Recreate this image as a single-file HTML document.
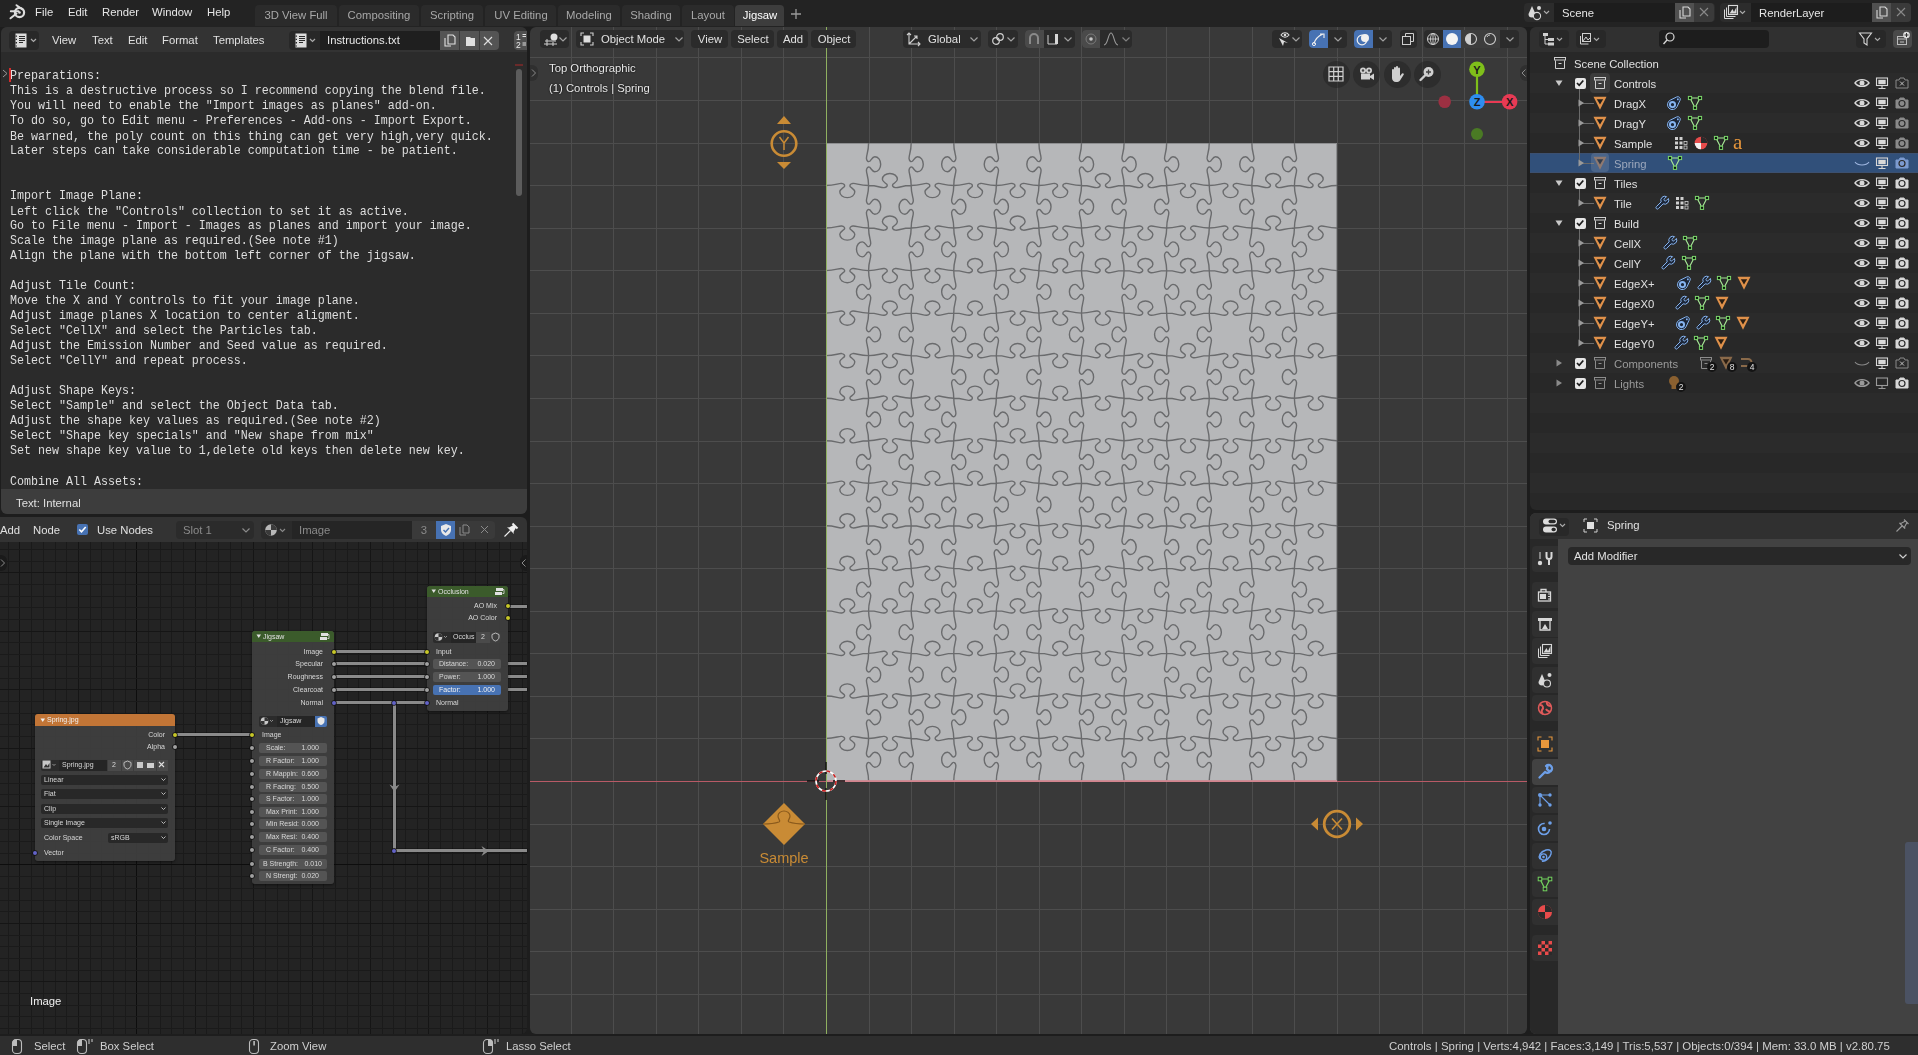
<!DOCTYPE html><html><head><meta charset="utf-8"><style>
html,body{margin:0;padding:0;}
body{width:1918px;height:1055px;position:relative;overflow:hidden;background:#1d1d1d;font-family:"Liberation Sans",sans-serif;}
div{box-sizing:border-box;}
.t{position:absolute;white-space:pre;line-height:16px;height:16px;will-change:transform;}
.m{font-family:"Liberation Mono",monospace;}
svg{position:absolute;overflow:visible;}
</style></head><body>
<div style="position:absolute;left:0px;top:0px;width:1918px;height:27px;background:#232323;"></div>
<svg style="left:9px;top:4px" width="17" height="16" viewBox="0 0 17 16">
<circle cx="10.5" cy="8.5" r="4.6" fill="none" stroke="#dcdcdc" stroke-width="2.2"/>
<circle cx="10.5" cy="8.5" r="1.3" fill="#dcdcdc"/>
<path d="M1.5 14.3 L7.5 9.5 M1.8 7.3 L9.5 7.3 M7.5 1.2 L13.5 5.5" stroke="#dcdcdc" stroke-width="2" stroke-linecap="round"/>
</svg>
<div class="t" style="left:35px;top:4.2px;font-size:11.3px;color:#e6e6e6;">File</div>
<div class="t" style="left:68px;top:4.2px;font-size:11.3px;color:#e6e6e6;">Edit</div>
<div class="t" style="left:102px;top:4.2px;font-size:11.3px;color:#e6e6e6;">Render</div>
<div class="t" style="left:152px;top:4.2px;font-size:11.3px;color:#e6e6e6;">Window</div>
<div class="t" style="left:207px;top:4.2px;font-size:11.3px;color:#e6e6e6;">Help</div>
<div style="position:absolute;left:255px;top:5px;width:82px;height:21px;background:#2b2b2b;border-radius:4px 4px 0 0;"></div>
<div class="t" style="left:196.0px;width:200px;text-align:center;top:6.7px;font-size:11.3px;color:#a8a8a8;">3D View Full</div>
<div style="position:absolute;left:339px;top:5px;width:80px;height:21px;background:#2b2b2b;border-radius:4px 4px 0 0;"></div>
<div class="t" style="left:279.0px;width:200px;text-align:center;top:6.7px;font-size:11.3px;color:#a8a8a8;">Compositing</div>
<div style="position:absolute;left:421px;top:5px;width:62px;height:21px;background:#2b2b2b;border-radius:4px 4px 0 0;"></div>
<div class="t" style="left:352.0px;width:200px;text-align:center;top:6.7px;font-size:11.3px;color:#a8a8a8;">Scripting</div>
<div style="position:absolute;left:485px;top:5px;width:71px;height:21px;background:#2b2b2b;border-radius:4px 4px 0 0;"></div>
<div class="t" style="left:420.5px;width:200px;text-align:center;top:6.7px;font-size:11.3px;color:#a8a8a8;">UV Editing</div>
<div style="position:absolute;left:558px;top:5px;width:62px;height:21px;background:#2b2b2b;border-radius:4px 4px 0 0;"></div>
<div class="t" style="left:489.0px;width:200px;text-align:center;top:6.7px;font-size:11.3px;color:#a8a8a8;">Modeling</div>
<div style="position:absolute;left:622px;top:5px;width:58px;height:21px;background:#2b2b2b;border-radius:4px 4px 0 0;"></div>
<div class="t" style="left:551.0px;width:200px;text-align:center;top:6.7px;font-size:11.3px;color:#a8a8a8;">Shading</div>
<div style="position:absolute;left:682px;top:5px;width:52px;height:21px;background:#2b2b2b;border-radius:4px 4px 0 0;"></div>
<div class="t" style="left:608.0px;width:200px;text-align:center;top:6.7px;font-size:11.3px;color:#a8a8a8;">Layout</div>
<div style="position:absolute;left:735px;top:5px;width:49px;height:21px;background:#3d3d3d;border-radius:4px 4px 0 0;"></div>
<div class="t" style="left:659.5px;width:200px;text-align:center;top:6.7px;font-size:11.3px;color:#ffffff;">Jigsaw</div>
<svg style="left:790px;top:8px" width="12" height="12"><path d="M6 1V11M1 6H11" stroke="#9a9a9a" stroke-width="1.3"/></svg>
<div style="position:absolute;left:1524px;top:3px;width:191px;height:19px;background:#2c2c2c;border-radius:4px;"></div>
<div style="position:absolute;left:1554px;top:3px;width:121px;height:19px;background:#1d1d1d;"></div>
<div style="position:absolute;left:1675px;top:3px;width:19px;height:19px;background:#505050;"></div>
<div style="position:absolute;left:1694px;top:3px;width:20px;height:19px;background:#3a3a3a;border-radius:0 4px 4px 0;"></div>
<div class="t" style="left:1562px;top:5.2px;font-size:11.3px;color:#e6e6e6;">Scene</div>
<div style="position:absolute;left:1720px;top:3px;width:191px;height:19px;background:#2c2c2c;border-radius:4px;"></div>
<div style="position:absolute;left:1751px;top:3px;width:121px;height:19px;background:#1d1d1d;"></div>
<div style="position:absolute;left:1872px;top:3px;width:19px;height:19px;background:#505050;"></div>
<div style="position:absolute;left:1891px;top:3px;width:20px;height:19px;background:#3a3a3a;border-radius:0 4px 4px 0;"></div>
<div class="t" style="left:1759px;top:5.2px;font-size:11.3px;color:#e6e6e6;">RenderLayer</div>
<div style="position:absolute;left:1px;top:27px;width:526px;height:487px;background:#2b2b2b;border-radius:6px;overflow:hidden;"></div>
<div style="position:absolute;left:1px;top:27px;width:526px;height:25px;background:#333333;border-radius:6px 6px 0 0;"></div>
<div style="position:absolute;left:9px;top:31px;width:30px;height:19px;background:#282828;border-radius:4px;"></div>
<svg style="left:14px;top:33px" width="24" height="15"><rect x="1.5" y="0.5" width="11" height="14" fill="#dcdcdc"/><path d="M2.3 2.5V3.8M2.3 5.8V7.1M2.3 9.1V10.4M2.3 12.4V13.5" stroke="#2a2a2a" stroke-width="1.4"/><path d="M5 3.5H11M5 5.5H11M5 7.5H11M5 9.5H9" stroke="#2a2a2a" stroke-width="1" shape-rendering="crispEdges"/><path d="M17 6L19.5 8.5L22 6" fill="none" stroke="#aaa" stroke-width="1.2"/></svg>
<div class="t" style="left:52px;top:31.7px;font-size:11.3px;color:#e0e0e0;">View</div>
<div class="t" style="left:92px;top:31.7px;font-size:11.3px;color:#e0e0e0;">Text</div>
<div class="t" style="left:128px;top:31.7px;font-size:11.3px;color:#e0e0e0;">Edit</div>
<div class="t" style="left:162px;top:31.7px;font-size:11.3px;color:#e0e0e0;">Format</div>
<div class="t" style="left:213px;top:31.7px;font-size:11.3px;color:#e0e0e0;">Templates</div>
<div style="position:absolute;left:289px;top:31px;width:31px;height:19px;background:#282828;border-radius:4px 0 0 4px;"></div>
<svg style="left:294px;top:33px" width="24" height="15"><rect x="1.5" y="0.5" width="11" height="14" fill="#dcdcdc"/><path d="M2.3 2.5V3.8M2.3 5.8V7.1M2.3 9.1V10.4M2.3 12.4V13.5" stroke="#2a2a2a" stroke-width="1.4"/><path d="M5 3.5H11M5 5.5H11M5 7.5H11M5 9.5H9" stroke="#2a2a2a" stroke-width="1" shape-rendering="crispEdges"/><path d="M16 6L18.5 8.5L21 6" fill="none" stroke="#aaa" stroke-width="1.2"/></svg>
<div style="position:absolute;left:320px;top:31px;width:120px;height:19px;background:#1f1f1f;"></div>
<div class="t" style="left:327px;top:31.7px;font-size:11.3px;color:#e8e8e8;">Instructions.txt</div>
<div style="position:absolute;left:440px;top:31px;width:19px;height:19px;background:#545454;"></div>
<div style="position:absolute;left:459px;top:31px;width:20px;height:19px;background:#545454;border-left:1px solid #3a3a3a;"></div>
<div style="position:absolute;left:479px;top:31px;width:20px;height:19px;background:#545454;border-left:1px solid #3a3a3a;border-radius:0 4px 4px 0;"></div>
<svg style="left:442px;top:33px" width="56" height="15"><path d="M3 5V13H9M6 2H11L13 4V11H6Z" fill="none" stroke="#e0e0e0" stroke-width="1.1"/><path d="M24 4H28L29 5H33V13H24Z" fill="#e0e0e0"/><path d="M42 4L50 12M50 4L42 12" stroke="#e0e0e0" stroke-width="1.1"/></svg>
<div style="position:absolute;left:514px;top:31px;width:13px;height:19px;background:#505050;border-radius:4px 0 0 4px;"></div>
<svg style="left:514px;top:31px" width="13" height="19"><text x="2" y="8.5" font-family="Liberation Sans" font-size="8.5" fill="#e8e8e8">1</text><text x="2" y="17" font-family="Liberation Sans" font-size="8.5" fill="#e8e8e8">2</text><path d="M8.5 3.5H12M8.5 5.5H12M8.5 12H12M8.5 14H12" stroke="#e0e0e0" stroke-width="1"/></svg>
<div class="t m" style="left:10px;top:69px;font-size:11.67px;line-height:13.393px;height:auto;color:#dedede;transform:scaleY(1.12);transform-origin:0 0">Preparations:<br>This is a destructive process so I recommend copying the blend file.<br>You will need to enable the &quot;Import images as planes&quot; add-on.<br>To do so, go to Edit menu - Preferences - Add-ons - Import Export.<br>Be warned, the poly count on this thing can get very high,very quick.<br>Later steps can take considerable computation time - be patient.<br><br><br>Import Image Plane:<br>Left click the &quot;Controls&quot; collection to set it as active.<br>Go to File menu - Import - Images as planes and import your image.<br>Scale the image plane as required.(See note #1)<br>Align the plane with the bottom left corner of the jigsaw.<br><br>Adjust Tile Count:<br>Move the X and Y controls to fit your image plane.<br>Adjust image planes X location to center aligment.<br>Select &quot;CellX&quot; and select the Particles tab.<br>Adjust the Emission Number and Seed value as required.<br>Select &quot;CellY&quot; and repeat process.<br><br>Adjust Shape Keys:<br>Select &quot;Sample&quot; and select the Object Data tab.<br>Adjust the shape key values as required.(See note #2)<br>Select &quot;Shape key specials&quot; and &quot;New shape from mix&quot;<br>Set new shape key value to 1,delete old keys then delete new key.<br><br>Combine All Assets:</div>
<div style="position:absolute;left:9px;top:68px;width:2px;height:14px;background:#d22c2c;"></div>
<svg style="left:2px;top:69px" width="6" height="10"><path d="M1 1L5 4.5L1 8" fill="none" stroke="#999" stroke-width="1"/></svg>
<div style="position:absolute;left:516px;top:69px;width:6px;height:127px;background:#5c5c5c;border-radius:3px;"></div>
<div style="position:absolute;left:515px;top:64px;width:8px;height:2px;background:#6a2a2a;"></div>
<div style="position:absolute;left:1px;top:489px;width:526px;height:25px;background:#3d3d3d;border-radius:0 0 6px 6px;"></div>
<div class="t" style="left:16px;top:494.7px;font-size:11.3px;color:#e0e0e0;">Text: Internal</div>
<div style="position:absolute;left:530px;top:27px;width:997px;height:1007px;background:#393939;border-radius:6px;"></div>
<svg style="left:530px;top:27px" width="997" height="1007"><path d="M41.5 0V1007" stroke="#4d4d4d" stroke-width="1"/><path d="M83.5 0V1007" stroke="#4d4d4d" stroke-width="1"/><path d="M126.5 0V1007" stroke="#4d4d4d" stroke-width="1"/><path d="M168.5 0V1007" stroke="#4d4d4d" stroke-width="1"/><path d="M211.5 0V1007" stroke="#4d4d4d" stroke-width="1"/><path d="M253.5 0V1007" stroke="#4d4d4d" stroke-width="1"/><path d="M339.5 0V1007" stroke="#4d4d4d" stroke-width="1"/><path d="M381.5 0V1007" stroke="#4d4d4d" stroke-width="1"/><path d="M424.5 0V1007" stroke="#4d4d4d" stroke-width="1"/><path d="M466.5 0V1007" stroke="#4d4d4d" stroke-width="1"/><path d="M509.5 0V1007" stroke="#4d4d4d" stroke-width="1"/><path d="M551.5 0V1007" stroke="#4d4d4d" stroke-width="1"/><path d="M594.5 0V1007" stroke="#4d4d4d" stroke-width="1"/><path d="M636.5 0V1007" stroke="#4d4d4d" stroke-width="1"/><path d="M679.5 0V1007" stroke="#4d4d4d" stroke-width="1"/><path d="M722.5 0V1007" stroke="#4d4d4d" stroke-width="1"/><path d="M764.5 0V1007" stroke="#4d4d4d" stroke-width="1"/><path d="M807.5 0V1007" stroke="#4d4d4d" stroke-width="1"/><path d="M849.5 0V1007" stroke="#4d4d4d" stroke-width="1"/><path d="M892.5 0V1007" stroke="#4d4d4d" stroke-width="1"/><path d="M934.5 0V1007" stroke="#4d4d4d" stroke-width="1"/><path d="M977.5 0V1007" stroke="#4d4d4d" stroke-width="1"/><path d="M0 30.5H997" stroke="#4d4d4d" stroke-width="1"/><path d="M0 73.5H997" stroke="#4d4d4d" stroke-width="1"/><path d="M0 116.5H997" stroke="#4d4d4d" stroke-width="1"/><path d="M0 158.5H997" stroke="#4d4d4d" stroke-width="1"/><path d="M0 201.5H997" stroke="#4d4d4d" stroke-width="1"/><path d="M0 243.5H997" stroke="#4d4d4d" stroke-width="1"/><path d="M0 286.5H997" stroke="#4d4d4d" stroke-width="1"/><path d="M0 328.5H997" stroke="#4d4d4d" stroke-width="1"/><path d="M0 371.5H997" stroke="#4d4d4d" stroke-width="1"/><path d="M0 414.5H997" stroke="#4d4d4d" stroke-width="1"/><path d="M0 456.5H997" stroke="#4d4d4d" stroke-width="1"/><path d="M0 499.5H997" stroke="#4d4d4d" stroke-width="1"/><path d="M0 541.5H997" stroke="#4d4d4d" stroke-width="1"/><path d="M0 584.5H997" stroke="#4d4d4d" stroke-width="1"/><path d="M0 626.5H997" stroke="#4d4d4d" stroke-width="1"/><path d="M0 669.5H997" stroke="#4d4d4d" stroke-width="1"/><path d="M0 711.5H997" stroke="#4d4d4d" stroke-width="1"/><path d="M0 797.5H997" stroke="#4d4d4d" stroke-width="1"/><path d="M0 839.5H997" stroke="#4d4d4d" stroke-width="1"/><path d="M0 882.5H997" stroke="#4d4d4d" stroke-width="1"/><path d="M0 924.5H997" stroke="#4d4d4d" stroke-width="1"/><path d="M0 967.5H997" stroke="#4d4d4d" stroke-width="1"/></svg>
<div style="position:absolute;left:826px;top:143px;width:511px;height:638px;background:#b6b7b9;box-shadow:inset 0 0 0 1px #8e8f91"></div>
<svg style="left:826px;top:143px" width="511" height="638"><path d="M0.00 42.53C9.29 42.53 12.29 40.03 15.69 40.43C17.79 40.73 19.29 42.03 18.29 43.73C16.29 45.53 13.79 46.53 13.79 48.73C13.79 52.13 17.09 54.63 21.29 54.63C25.49 54.63 28.79 52.13 28.79 48.73C28.79 46.53 26.29 45.53 24.29 43.73C23.29 42.03 24.79 40.73 26.89 40.43C30.29 40.03 33.29 42.53 42.58 42.53M42.58 42.53C51.88 42.53 54.88 45.03 58.27 44.63C60.38 44.33 61.88 43.03 60.88 41.33C58.88 39.53 56.38 38.53 56.38 36.33C56.38 32.93 59.67 30.43 63.88 30.43C68.08 30.43 71.38 32.93 71.38 36.33C71.38 38.53 68.88 39.53 66.88 41.33C65.88 43.03 67.38 44.33 69.47 44.63C72.88 45.03 75.88 42.53 85.17 42.53M85.17 42.53C94.46 42.53 97.46 40.03 100.86 40.43C102.96 40.73 104.46 42.03 103.46 43.73C101.46 45.53 98.96 46.53 98.96 48.73C98.96 52.13 102.26 54.63 106.46 54.63C110.66 54.63 113.96 52.13 113.96 48.73C113.96 46.53 111.46 45.53 109.46 43.73C108.46 42.03 109.96 40.73 112.06 40.43C115.46 40.03 118.46 42.53 127.75 42.53M127.75 42.53C137.04 42.53 140.04 40.03 143.44 40.43C145.54 40.73 147.04 42.03 146.04 43.73C144.04 45.53 141.54 46.53 141.54 48.73C141.54 52.13 144.84 54.63 149.04 54.63C153.24 54.63 156.54 52.13 156.54 48.73C156.54 46.53 154.04 45.53 152.04 43.73C151.04 42.03 152.54 40.73 154.64 40.43C158.04 40.03 161.04 42.53 170.33 42.53M170.33 42.53C179.62 42.53 182.62 40.03 186.03 40.43C188.12 40.73 189.62 42.03 188.62 43.73C186.62 45.53 184.12 46.53 184.12 48.73C184.12 52.13 187.43 54.63 191.62 54.63C195.82 54.63 199.12 52.13 199.12 48.73C199.12 46.53 196.62 45.53 194.62 43.73C193.62 42.03 195.12 40.73 197.22 40.43C200.62 40.03 203.62 42.53 212.92 42.53M212.92 42.53C222.21 42.53 225.21 40.03 228.61 40.43C230.71 40.73 232.21 42.03 231.21 43.73C229.21 45.53 226.71 46.53 226.71 48.73C226.71 52.13 230.01 54.63 234.21 54.63C238.41 54.63 241.71 52.13 241.71 48.73C241.71 46.53 239.21 45.53 237.21 43.73C236.21 42.03 237.71 40.73 239.81 40.43C243.21 40.03 246.21 42.53 255.50 42.53M255.50 42.53C264.79 42.53 267.79 45.03 271.19 44.63C273.29 44.33 274.79 43.03 273.79 41.33C271.79 39.53 269.29 38.53 269.29 36.33C269.29 32.93 272.59 30.43 276.79 30.43C280.99 30.43 284.29 32.93 284.29 36.33C284.29 38.53 281.79 39.53 279.79 41.33C278.79 43.03 280.29 44.33 282.39 44.63C285.79 45.03 288.79 42.53 298.08 42.53M298.08 42.53C307.38 42.53 310.38 45.03 313.78 44.63C315.88 44.33 317.38 43.03 316.38 41.33C314.38 39.53 311.88 38.53 311.88 36.33C311.88 32.93 315.18 30.43 319.38 30.43C323.58 30.43 326.88 32.93 326.88 36.33C326.88 38.53 324.38 39.53 322.38 41.33C321.38 43.03 322.88 44.33 324.98 44.63C328.38 45.03 331.38 42.53 340.67 42.53M340.67 42.53C349.96 42.53 352.96 40.03 356.36 40.43C358.46 40.73 359.96 42.03 358.96 43.73C356.96 45.53 354.46 46.53 354.46 48.73C354.46 52.13 357.76 54.63 361.96 54.63C366.16 54.63 369.46 52.13 369.46 48.73C369.46 46.53 366.96 45.53 364.96 43.73C363.96 42.03 365.46 40.73 367.56 40.43C370.96 40.03 373.96 42.53 383.25 42.53M383.25 42.53C392.54 42.53 395.54 40.03 398.94 40.43C401.04 40.73 402.54 42.03 401.54 43.73C399.54 45.53 397.04 46.53 397.04 48.73C397.04 52.13 400.34 54.63 404.54 54.63C408.74 54.63 412.04 52.13 412.04 48.73C412.04 46.53 409.54 45.53 407.54 43.73C406.54 42.03 408.04 40.73 410.14 40.43C413.54 40.03 416.54 42.53 425.83 42.53M425.83 42.53C435.13 42.53 438.13 45.03 441.53 44.63C443.63 44.33 445.13 43.03 444.13 41.33C442.13 39.53 439.63 38.53 439.63 36.33C439.63 32.93 442.93 30.43 447.13 30.43C451.33 30.43 454.63 32.93 454.63 36.33C454.63 38.53 452.13 39.53 450.13 41.33C449.13 43.03 450.63 44.33 452.73 44.63C456.13 45.03 459.13 42.53 468.42 42.53M468.42 42.53C477.71 42.53 480.71 45.03 484.11 44.63C486.21 44.33 487.71 43.03 486.71 41.33C484.71 39.53 482.21 38.53 482.21 36.33C482.21 32.93 485.51 30.43 489.71 30.43C493.91 30.43 497.21 32.93 497.21 36.33C497.21 38.53 494.71 39.53 492.71 41.33C491.71 43.03 493.21 44.33 495.31 44.63C498.71 45.03 501.71 42.53 511.00 42.53M0.00 85.07C9.29 85.07 12.29 82.57 15.69 82.97C17.79 83.27 19.29 84.57 18.29 86.27C16.29 88.07 13.79 89.07 13.79 91.27C13.79 94.67 17.09 97.17 21.29 97.17C25.49 97.17 28.79 94.67 28.79 91.27C28.79 89.07 26.29 88.07 24.29 86.27C23.29 84.57 24.79 83.27 26.89 82.97C30.29 82.57 33.29 85.07 42.58 85.07M42.58 85.07C51.88 85.07 54.88 87.57 58.27 87.17C60.38 86.87 61.88 85.57 60.88 83.87C58.88 82.07 56.38 81.07 56.38 78.87C56.38 75.47 59.67 72.97 63.88 72.97C68.08 72.97 71.38 75.47 71.38 78.87C71.38 81.07 68.88 82.07 66.88 83.87C65.88 85.57 67.38 86.87 69.47 87.17C72.88 87.57 75.88 85.07 85.17 85.07M85.17 85.07C94.46 85.07 97.46 82.57 100.86 82.97C102.96 83.27 104.46 84.57 103.46 86.27C101.46 88.07 98.96 89.07 98.96 91.27C98.96 94.67 102.26 97.17 106.46 97.17C110.66 97.17 113.96 94.67 113.96 91.27C113.96 89.07 111.46 88.07 109.46 86.27C108.46 84.57 109.96 83.27 112.06 82.97C115.46 82.57 118.46 85.07 127.75 85.07M127.75 85.07C137.04 85.07 140.04 82.57 143.44 82.97C145.54 83.27 147.04 84.57 146.04 86.27C144.04 88.07 141.54 89.07 141.54 91.27C141.54 94.67 144.84 97.17 149.04 97.17C153.24 97.17 156.54 94.67 156.54 91.27C156.54 89.07 154.04 88.07 152.04 86.27C151.04 84.57 152.54 83.27 154.64 82.97C158.04 82.57 161.04 85.07 170.33 85.07M170.33 85.07C179.62 85.07 182.62 87.57 186.03 87.17C188.12 86.87 189.62 85.57 188.62 83.87C186.62 82.07 184.12 81.07 184.12 78.87C184.12 75.47 187.43 72.97 191.62 72.97C195.82 72.97 199.12 75.47 199.12 78.87C199.12 81.07 196.62 82.07 194.62 83.87C193.62 85.57 195.12 86.87 197.22 87.17C200.62 87.57 203.62 85.07 212.92 85.07M212.92 85.07C222.21 85.07 225.21 82.57 228.61 82.97C230.71 83.27 232.21 84.57 231.21 86.27C229.21 88.07 226.71 89.07 226.71 91.27C226.71 94.67 230.01 97.17 234.21 97.17C238.41 97.17 241.71 94.67 241.71 91.27C241.71 89.07 239.21 88.07 237.21 86.27C236.21 84.57 237.71 83.27 239.81 82.97C243.21 82.57 246.21 85.07 255.50 85.07M255.50 85.07C264.79 85.07 267.79 82.57 271.19 82.97C273.29 83.27 274.79 84.57 273.79 86.27C271.79 88.07 269.29 89.07 269.29 91.27C269.29 94.67 272.59 97.17 276.79 97.17C280.99 97.17 284.29 94.67 284.29 91.27C284.29 89.07 281.79 88.07 279.79 86.27C278.79 84.57 280.29 83.27 282.39 82.97C285.79 82.57 288.79 85.07 298.08 85.07M298.08 85.07C307.38 85.07 310.38 82.57 313.78 82.97C315.88 83.27 317.38 84.57 316.38 86.27C314.38 88.07 311.88 89.07 311.88 91.27C311.88 94.67 315.18 97.17 319.38 97.17C323.58 97.17 326.88 94.67 326.88 91.27C326.88 89.07 324.38 88.07 322.38 86.27C321.38 84.57 322.88 83.27 324.98 82.97C328.38 82.57 331.38 85.07 340.67 85.07M340.67 85.07C349.96 85.07 352.96 82.57 356.36 82.97C358.46 83.27 359.96 84.57 358.96 86.27C356.96 88.07 354.46 89.07 354.46 91.27C354.46 94.67 357.76 97.17 361.96 97.17C366.16 97.17 369.46 94.67 369.46 91.27C369.46 89.07 366.96 88.07 364.96 86.27C363.96 84.57 365.46 83.27 367.56 82.97C370.96 82.57 373.96 85.07 383.25 85.07M383.25 85.07C392.54 85.07 395.54 82.57 398.94 82.97C401.04 83.27 402.54 84.57 401.54 86.27C399.54 88.07 397.04 89.07 397.04 91.27C397.04 94.67 400.34 97.17 404.54 97.17C408.74 97.17 412.04 94.67 412.04 91.27C412.04 89.07 409.54 88.07 407.54 86.27C406.54 84.57 408.04 83.27 410.14 82.97C413.54 82.57 416.54 85.07 425.83 85.07M425.83 85.07C435.13 85.07 438.13 87.57 441.53 87.17C443.63 86.87 445.13 85.57 444.13 83.87C442.13 82.07 439.63 81.07 439.63 78.87C439.63 75.47 442.93 72.97 447.13 72.97C451.33 72.97 454.63 75.47 454.63 78.87C454.63 81.07 452.13 82.07 450.13 83.87C449.13 85.57 450.63 86.87 452.73 87.17C456.13 87.57 459.13 85.07 468.42 85.07M468.42 85.07C477.71 85.07 480.71 82.57 484.11 82.97C486.21 83.27 487.71 84.57 486.71 86.27C484.71 88.07 482.21 89.07 482.21 91.27C482.21 94.67 485.51 97.17 489.71 97.17C493.91 97.17 497.21 94.67 497.21 91.27C497.21 89.07 494.71 88.07 492.71 86.27C491.71 84.57 493.21 83.27 495.31 82.97C498.71 82.57 501.71 85.07 511.00 85.07M0.00 127.60C9.29 127.60 12.29 125.10 15.69 125.50C17.79 125.80 19.29 127.10 18.29 128.80C16.29 130.60 13.79 131.60 13.79 133.80C13.79 137.20 17.09 139.70 21.29 139.70C25.49 139.70 28.79 137.20 28.79 133.80C28.79 131.60 26.29 130.60 24.29 128.80C23.29 127.10 24.79 125.80 26.89 125.50C30.29 125.10 33.29 127.60 42.58 127.60M42.58 127.60C51.88 127.60 54.88 125.10 58.27 125.50C60.38 125.80 61.88 127.10 60.88 128.80C58.88 130.60 56.38 131.60 56.38 133.80C56.38 137.20 59.67 139.70 63.88 139.70C68.08 139.70 71.38 137.20 71.38 133.80C71.38 131.60 68.88 130.60 66.88 128.80C65.88 127.10 67.38 125.80 69.47 125.50C72.88 125.10 75.88 127.60 85.17 127.60M85.17 127.60C94.46 127.60 97.46 125.10 100.86 125.50C102.96 125.80 104.46 127.10 103.46 128.80C101.46 130.60 98.96 131.60 98.96 133.80C98.96 137.20 102.26 139.70 106.46 139.70C110.66 139.70 113.96 137.20 113.96 133.80C113.96 131.60 111.46 130.60 109.46 128.80C108.46 127.10 109.96 125.80 112.06 125.50C115.46 125.10 118.46 127.60 127.75 127.60M127.75 127.60C137.04 127.60 140.04 130.10 143.44 129.70C145.54 129.40 147.04 128.10 146.04 126.40C144.04 124.60 141.54 123.60 141.54 121.40C141.54 118.00 144.84 115.50 149.04 115.50C153.24 115.50 156.54 118.00 156.54 121.40C156.54 123.60 154.04 124.60 152.04 126.40C151.04 128.10 152.54 129.40 154.64 129.70C158.04 130.10 161.04 127.60 170.33 127.60M170.33 127.60C179.62 127.60 182.62 125.10 186.03 125.50C188.12 125.80 189.62 127.10 188.62 128.80C186.62 130.60 184.12 131.60 184.12 133.80C184.12 137.20 187.43 139.70 191.62 139.70C195.82 139.70 199.12 137.20 199.12 133.80C199.12 131.60 196.62 130.60 194.62 128.80C193.62 127.10 195.12 125.80 197.22 125.50C200.62 125.10 203.62 127.60 212.92 127.60M212.92 127.60C222.21 127.60 225.21 130.10 228.61 129.70C230.71 129.40 232.21 128.10 231.21 126.40C229.21 124.60 226.71 123.60 226.71 121.40C226.71 118.00 230.01 115.50 234.21 115.50C238.41 115.50 241.71 118.00 241.71 121.40C241.71 123.60 239.21 124.60 237.21 126.40C236.21 128.10 237.71 129.40 239.81 129.70C243.21 130.10 246.21 127.60 255.50 127.60M255.50 127.60C264.79 127.60 267.79 130.10 271.19 129.70C273.29 129.40 274.79 128.10 273.79 126.40C271.79 124.60 269.29 123.60 269.29 121.40C269.29 118.00 272.59 115.50 276.79 115.50C280.99 115.50 284.29 118.00 284.29 121.40C284.29 123.60 281.79 124.60 279.79 126.40C278.79 128.10 280.29 129.40 282.39 129.70C285.79 130.10 288.79 127.60 298.08 127.60M298.08 127.60C307.38 127.60 310.38 130.10 313.78 129.70C315.88 129.40 317.38 128.10 316.38 126.40C314.38 124.60 311.88 123.60 311.88 121.40C311.88 118.00 315.18 115.50 319.38 115.50C323.58 115.50 326.88 118.00 326.88 121.40C326.88 123.60 324.38 124.60 322.38 126.40C321.38 128.10 322.88 129.40 324.98 129.70C328.38 130.10 331.38 127.60 340.67 127.60M340.67 127.60C349.96 127.60 352.96 130.10 356.36 129.70C358.46 129.40 359.96 128.10 358.96 126.40C356.96 124.60 354.46 123.60 354.46 121.40C354.46 118.00 357.76 115.50 361.96 115.50C366.16 115.50 369.46 118.00 369.46 121.40C369.46 123.60 366.96 124.60 364.96 126.40C363.96 128.10 365.46 129.40 367.56 129.70C370.96 130.10 373.96 127.60 383.25 127.60M383.25 127.60C392.54 127.60 395.54 130.10 398.94 129.70C401.04 129.40 402.54 128.10 401.54 126.40C399.54 124.60 397.04 123.60 397.04 121.40C397.04 118.00 400.34 115.50 404.54 115.50C408.74 115.50 412.04 118.00 412.04 121.40C412.04 123.60 409.54 124.60 407.54 126.40C406.54 128.10 408.04 129.40 410.14 129.70C413.54 130.10 416.54 127.60 425.83 127.60M425.83 127.60C435.13 127.60 438.13 130.10 441.53 129.70C443.63 129.40 445.13 128.10 444.13 126.40C442.13 124.60 439.63 123.60 439.63 121.40C439.63 118.00 442.93 115.50 447.13 115.50C451.33 115.50 454.63 118.00 454.63 121.40C454.63 123.60 452.13 124.60 450.13 126.40C449.13 128.10 450.63 129.40 452.73 129.70C456.13 130.10 459.13 127.60 468.42 127.60M468.42 127.60C477.71 127.60 480.71 125.10 484.11 125.50C486.21 125.80 487.71 127.10 486.71 128.80C484.71 130.60 482.21 131.60 482.21 133.80C482.21 137.20 485.51 139.70 489.71 139.70C493.91 139.70 497.21 137.20 497.21 133.80C497.21 131.60 494.71 130.60 492.71 128.80C491.71 127.10 493.21 125.80 495.31 125.50C498.71 125.10 501.71 127.60 511.00 127.60M0.00 170.13C9.29 170.13 12.29 167.63 15.69 168.03C17.79 168.33 19.29 169.63 18.29 171.33C16.29 173.13 13.79 174.13 13.79 176.33C13.79 179.73 17.09 182.23 21.29 182.23C25.49 182.23 28.79 179.73 28.79 176.33C28.79 174.13 26.29 173.13 24.29 171.33C23.29 169.63 24.79 168.33 26.89 168.03C30.29 167.63 33.29 170.13 42.58 170.13M42.58 170.13C51.88 170.13 54.88 172.63 58.27 172.23C60.38 171.93 61.88 170.63 60.88 168.93C58.88 167.13 56.38 166.13 56.38 163.93C56.38 160.53 59.67 158.03 63.88 158.03C68.08 158.03 71.38 160.53 71.38 163.93C71.38 166.13 68.88 167.13 66.88 168.93C65.88 170.63 67.38 171.93 69.47 172.23C72.88 172.63 75.88 170.13 85.17 170.13M85.17 170.13C94.46 170.13 97.46 172.63 100.86 172.23C102.96 171.93 104.46 170.63 103.46 168.93C101.46 167.13 98.96 166.13 98.96 163.93C98.96 160.53 102.26 158.03 106.46 158.03C110.66 158.03 113.96 160.53 113.96 163.93C113.96 166.13 111.46 167.13 109.46 168.93C108.46 170.63 109.96 171.93 112.06 172.23C115.46 172.63 118.46 170.13 127.75 170.13M127.75 170.13C137.04 170.13 140.04 172.63 143.44 172.23C145.54 171.93 147.04 170.63 146.04 168.93C144.04 167.13 141.54 166.13 141.54 163.93C141.54 160.53 144.84 158.03 149.04 158.03C153.24 158.03 156.54 160.53 156.54 163.93C156.54 166.13 154.04 167.13 152.04 168.93C151.04 170.63 152.54 171.93 154.64 172.23C158.04 172.63 161.04 170.13 170.33 170.13M170.33 170.13C179.62 170.13 182.62 167.63 186.03 168.03C188.12 168.33 189.62 169.63 188.62 171.33C186.62 173.13 184.12 174.13 184.12 176.33C184.12 179.73 187.43 182.23 191.62 182.23C195.82 182.23 199.12 179.73 199.12 176.33C199.12 174.13 196.62 173.13 194.62 171.33C193.62 169.63 195.12 168.33 197.22 168.03C200.62 167.63 203.62 170.13 212.92 170.13M212.92 170.13C222.21 170.13 225.21 167.63 228.61 168.03C230.71 168.33 232.21 169.63 231.21 171.33C229.21 173.13 226.71 174.13 226.71 176.33C226.71 179.73 230.01 182.23 234.21 182.23C238.41 182.23 241.71 179.73 241.71 176.33C241.71 174.13 239.21 173.13 237.21 171.33C236.21 169.63 237.71 168.33 239.81 168.03C243.21 167.63 246.21 170.13 255.50 170.13M255.50 170.13C264.79 170.13 267.79 167.63 271.19 168.03C273.29 168.33 274.79 169.63 273.79 171.33C271.79 173.13 269.29 174.13 269.29 176.33C269.29 179.73 272.59 182.23 276.79 182.23C280.99 182.23 284.29 179.73 284.29 176.33C284.29 174.13 281.79 173.13 279.79 171.33C278.79 169.63 280.29 168.33 282.39 168.03C285.79 167.63 288.79 170.13 298.08 170.13M298.08 170.13C307.38 170.13 310.38 172.63 313.78 172.23C315.88 171.93 317.38 170.63 316.38 168.93C314.38 167.13 311.88 166.13 311.88 163.93C311.88 160.53 315.18 158.03 319.38 158.03C323.58 158.03 326.88 160.53 326.88 163.93C326.88 166.13 324.38 167.13 322.38 168.93C321.38 170.63 322.88 171.93 324.98 172.23C328.38 172.63 331.38 170.13 340.67 170.13M340.67 170.13C349.96 170.13 352.96 172.63 356.36 172.23C358.46 171.93 359.96 170.63 358.96 168.93C356.96 167.13 354.46 166.13 354.46 163.93C354.46 160.53 357.76 158.03 361.96 158.03C366.16 158.03 369.46 160.53 369.46 163.93C369.46 166.13 366.96 167.13 364.96 168.93C363.96 170.63 365.46 171.93 367.56 172.23C370.96 172.63 373.96 170.13 383.25 170.13M383.25 170.13C392.54 170.13 395.54 172.63 398.94 172.23C401.04 171.93 402.54 170.63 401.54 168.93C399.54 167.13 397.04 166.13 397.04 163.93C397.04 160.53 400.34 158.03 404.54 158.03C408.74 158.03 412.04 160.53 412.04 163.93C412.04 166.13 409.54 167.13 407.54 168.93C406.54 170.63 408.04 171.93 410.14 172.23C413.54 172.63 416.54 170.13 425.83 170.13M425.83 170.13C435.13 170.13 438.13 172.63 441.53 172.23C443.63 171.93 445.13 170.63 444.13 168.93C442.13 167.13 439.63 166.13 439.63 163.93C439.63 160.53 442.93 158.03 447.13 158.03C451.33 158.03 454.63 160.53 454.63 163.93C454.63 166.13 452.13 167.13 450.13 168.93C449.13 170.63 450.63 171.93 452.73 172.23C456.13 172.63 459.13 170.13 468.42 170.13M468.42 170.13C477.71 170.13 480.71 172.63 484.11 172.23C486.21 171.93 487.71 170.63 486.71 168.93C484.71 167.13 482.21 166.13 482.21 163.93C482.21 160.53 485.51 158.03 489.71 158.03C493.91 158.03 497.21 160.53 497.21 163.93C497.21 166.13 494.71 167.13 492.71 168.93C491.71 170.63 493.21 171.93 495.31 172.23C498.71 172.63 501.71 170.13 511.00 170.13M0.00 212.67C9.29 212.67 12.29 210.17 15.69 210.57C17.79 210.87 19.29 212.17 18.29 213.87C16.29 215.67 13.79 216.67 13.79 218.87C13.79 222.27 17.09 224.77 21.29 224.77C25.49 224.77 28.79 222.27 28.79 218.87C28.79 216.67 26.29 215.67 24.29 213.87C23.29 212.17 24.79 210.87 26.89 210.57C30.29 210.17 33.29 212.67 42.58 212.67M42.58 212.67C51.88 212.67 54.88 210.17 58.27 210.57C60.38 210.87 61.88 212.17 60.88 213.87C58.88 215.67 56.38 216.67 56.38 218.87C56.38 222.27 59.67 224.77 63.88 224.77C68.08 224.77 71.38 222.27 71.38 218.87C71.38 216.67 68.88 215.67 66.88 213.87C65.88 212.17 67.38 210.87 69.47 210.57C72.88 210.17 75.88 212.67 85.17 212.67M85.17 212.67C94.46 212.67 97.46 215.17 100.86 214.77C102.96 214.47 104.46 213.17 103.46 211.47C101.46 209.67 98.96 208.67 98.96 206.47C98.96 203.07 102.26 200.57 106.46 200.57C110.66 200.57 113.96 203.07 113.96 206.47C113.96 208.67 111.46 209.67 109.46 211.47C108.46 213.17 109.96 214.47 112.06 214.77C115.46 215.17 118.46 212.67 127.75 212.67M127.75 212.67C137.04 212.67 140.04 215.17 143.44 214.77C145.54 214.47 147.04 213.17 146.04 211.47C144.04 209.67 141.54 208.67 141.54 206.47C141.54 203.07 144.84 200.57 149.04 200.57C153.24 200.57 156.54 203.07 156.54 206.47C156.54 208.67 154.04 209.67 152.04 211.47C151.04 213.17 152.54 214.47 154.64 214.77C158.04 215.17 161.04 212.67 170.33 212.67M170.33 212.67C179.62 212.67 182.62 215.17 186.03 214.77C188.12 214.47 189.62 213.17 188.62 211.47C186.62 209.67 184.12 208.67 184.12 206.47C184.12 203.07 187.43 200.57 191.62 200.57C195.82 200.57 199.12 203.07 199.12 206.47C199.12 208.67 196.62 209.67 194.62 211.47C193.62 213.17 195.12 214.47 197.22 214.77C200.62 215.17 203.62 212.67 212.92 212.67M212.92 212.67C222.21 212.67 225.21 210.17 228.61 210.57C230.71 210.87 232.21 212.17 231.21 213.87C229.21 215.67 226.71 216.67 226.71 218.87C226.71 222.27 230.01 224.77 234.21 224.77C238.41 224.77 241.71 222.27 241.71 218.87C241.71 216.67 239.21 215.67 237.21 213.87C236.21 212.17 237.71 210.87 239.81 210.57C243.21 210.17 246.21 212.67 255.50 212.67M255.50 212.67C264.79 212.67 267.79 215.17 271.19 214.77C273.29 214.47 274.79 213.17 273.79 211.47C271.79 209.67 269.29 208.67 269.29 206.47C269.29 203.07 272.59 200.57 276.79 200.57C280.99 200.57 284.29 203.07 284.29 206.47C284.29 208.67 281.79 209.67 279.79 211.47C278.79 213.17 280.29 214.47 282.39 214.77C285.79 215.17 288.79 212.67 298.08 212.67M298.08 212.67C307.38 212.67 310.38 210.17 313.78 210.57C315.88 210.87 317.38 212.17 316.38 213.87C314.38 215.67 311.88 216.67 311.88 218.87C311.88 222.27 315.18 224.77 319.38 224.77C323.58 224.77 326.88 222.27 326.88 218.87C326.88 216.67 324.38 215.67 322.38 213.87C321.38 212.17 322.88 210.87 324.98 210.57C328.38 210.17 331.38 212.67 340.67 212.67M340.67 212.67C349.96 212.67 352.96 215.17 356.36 214.77C358.46 214.47 359.96 213.17 358.96 211.47C356.96 209.67 354.46 208.67 354.46 206.47C354.46 203.07 357.76 200.57 361.96 200.57C366.16 200.57 369.46 203.07 369.46 206.47C369.46 208.67 366.96 209.67 364.96 211.47C363.96 213.17 365.46 214.47 367.56 214.77C370.96 215.17 373.96 212.67 383.25 212.67M383.25 212.67C392.54 212.67 395.54 210.17 398.94 210.57C401.04 210.87 402.54 212.17 401.54 213.87C399.54 215.67 397.04 216.67 397.04 218.87C397.04 222.27 400.34 224.77 404.54 224.77C408.74 224.77 412.04 222.27 412.04 218.87C412.04 216.67 409.54 215.67 407.54 213.87C406.54 212.17 408.04 210.87 410.14 210.57C413.54 210.17 416.54 212.67 425.83 212.67M425.83 212.67C435.13 212.67 438.13 215.17 441.53 214.77C443.63 214.47 445.13 213.17 444.13 211.47C442.13 209.67 439.63 208.67 439.63 206.47C439.63 203.07 442.93 200.57 447.13 200.57C451.33 200.57 454.63 203.07 454.63 206.47C454.63 208.67 452.13 209.67 450.13 211.47C449.13 213.17 450.63 214.47 452.73 214.77C456.13 215.17 459.13 212.67 468.42 212.67M468.42 212.67C477.71 212.67 480.71 215.17 484.11 214.77C486.21 214.47 487.71 213.17 486.71 211.47C484.71 209.67 482.21 208.67 482.21 206.47C482.21 203.07 485.51 200.57 489.71 200.57C493.91 200.57 497.21 203.07 497.21 206.47C497.21 208.67 494.71 209.67 492.71 211.47C491.71 213.17 493.21 214.47 495.31 214.77C498.71 215.17 501.71 212.67 511.00 212.67M0.00 255.20C9.29 255.20 12.29 257.70 15.69 257.30C17.79 257.00 19.29 255.70 18.29 254.00C16.29 252.20 13.79 251.20 13.79 249.00C13.79 245.60 17.09 243.10 21.29 243.10C25.49 243.10 28.79 245.60 28.79 249.00C28.79 251.20 26.29 252.20 24.29 254.00C23.29 255.70 24.79 257.00 26.89 257.30C30.29 257.70 33.29 255.20 42.58 255.20M42.58 255.20C51.88 255.20 54.88 252.70 58.27 253.10C60.38 253.40 61.88 254.70 60.88 256.40C58.88 258.20 56.38 259.20 56.38 261.40C56.38 264.80 59.67 267.30 63.88 267.30C68.08 267.30 71.38 264.80 71.38 261.40C71.38 259.20 68.88 258.20 66.88 256.40C65.88 254.70 67.38 253.40 69.47 253.10C72.88 252.70 75.88 255.20 85.17 255.20M85.17 255.20C94.46 255.20 97.46 252.70 100.86 253.10C102.96 253.40 104.46 254.70 103.46 256.40C101.46 258.20 98.96 259.20 98.96 261.40C98.96 264.80 102.26 267.30 106.46 267.30C110.66 267.30 113.96 264.80 113.96 261.40C113.96 259.20 111.46 258.20 109.46 256.40C108.46 254.70 109.96 253.40 112.06 253.10C115.46 252.70 118.46 255.20 127.75 255.20M127.75 255.20C137.04 255.20 140.04 257.70 143.44 257.30C145.54 257.00 147.04 255.70 146.04 254.00C144.04 252.20 141.54 251.20 141.54 249.00C141.54 245.60 144.84 243.10 149.04 243.10C153.24 243.10 156.54 245.60 156.54 249.00C156.54 251.20 154.04 252.20 152.04 254.00C151.04 255.70 152.54 257.00 154.64 257.30C158.04 257.70 161.04 255.20 170.33 255.20M170.33 255.20C179.62 255.20 182.62 252.70 186.03 253.10C188.12 253.40 189.62 254.70 188.62 256.40C186.62 258.20 184.12 259.20 184.12 261.40C184.12 264.80 187.43 267.30 191.62 267.30C195.82 267.30 199.12 264.80 199.12 261.40C199.12 259.20 196.62 258.20 194.62 256.40C193.62 254.70 195.12 253.40 197.22 253.10C200.62 252.70 203.62 255.20 212.92 255.20M212.92 255.20C222.21 255.20 225.21 257.70 228.61 257.30C230.71 257.00 232.21 255.70 231.21 254.00C229.21 252.20 226.71 251.20 226.71 249.00C226.71 245.60 230.01 243.10 234.21 243.10C238.41 243.10 241.71 245.60 241.71 249.00C241.71 251.20 239.21 252.20 237.21 254.00C236.21 255.70 237.71 257.00 239.81 257.30C243.21 257.70 246.21 255.20 255.50 255.20M255.50 255.20C264.79 255.20 267.79 252.70 271.19 253.10C273.29 253.40 274.79 254.70 273.79 256.40C271.79 258.20 269.29 259.20 269.29 261.40C269.29 264.80 272.59 267.30 276.79 267.30C280.99 267.30 284.29 264.80 284.29 261.40C284.29 259.20 281.79 258.20 279.79 256.40C278.79 254.70 280.29 253.40 282.39 253.10C285.79 252.70 288.79 255.20 298.08 255.20M298.08 255.20C307.38 255.20 310.38 257.70 313.78 257.30C315.88 257.00 317.38 255.70 316.38 254.00C314.38 252.20 311.88 251.20 311.88 249.00C311.88 245.60 315.18 243.10 319.38 243.10C323.58 243.10 326.88 245.60 326.88 249.00C326.88 251.20 324.38 252.20 322.38 254.00C321.38 255.70 322.88 257.00 324.98 257.30C328.38 257.70 331.38 255.20 340.67 255.20M340.67 255.20C349.96 255.20 352.96 257.70 356.36 257.30C358.46 257.00 359.96 255.70 358.96 254.00C356.96 252.20 354.46 251.20 354.46 249.00C354.46 245.60 357.76 243.10 361.96 243.10C366.16 243.10 369.46 245.60 369.46 249.00C369.46 251.20 366.96 252.20 364.96 254.00C363.96 255.70 365.46 257.00 367.56 257.30C370.96 257.70 373.96 255.20 383.25 255.20M383.25 255.20C392.54 255.20 395.54 257.70 398.94 257.30C401.04 257.00 402.54 255.70 401.54 254.00C399.54 252.20 397.04 251.20 397.04 249.00C397.04 245.60 400.34 243.10 404.54 243.10C408.74 243.10 412.04 245.60 412.04 249.00C412.04 251.20 409.54 252.20 407.54 254.00C406.54 255.70 408.04 257.00 410.14 257.30C413.54 257.70 416.54 255.20 425.83 255.20M425.83 255.20C435.13 255.20 438.13 252.70 441.53 253.10C443.63 253.40 445.13 254.70 444.13 256.40C442.13 258.20 439.63 259.20 439.63 261.40C439.63 264.80 442.93 267.30 447.13 267.30C451.33 267.30 454.63 264.80 454.63 261.40C454.63 259.20 452.13 258.20 450.13 256.40C449.13 254.70 450.63 253.40 452.73 253.10C456.13 252.70 459.13 255.20 468.42 255.20M468.42 255.20C477.71 255.20 480.71 252.70 484.11 253.10C486.21 253.40 487.71 254.70 486.71 256.40C484.71 258.20 482.21 259.20 482.21 261.40C482.21 264.80 485.51 267.30 489.71 267.30C493.91 267.30 497.21 264.80 497.21 261.40C497.21 259.20 494.71 258.20 492.71 256.40C491.71 254.70 493.21 253.40 495.31 253.10C498.71 252.70 501.71 255.20 511.00 255.20M0.00 297.73C9.29 297.73 12.29 300.23 15.69 299.83C17.79 299.53 19.29 298.23 18.29 296.53C16.29 294.73 13.79 293.73 13.79 291.53C13.79 288.13 17.09 285.63 21.29 285.63C25.49 285.63 28.79 288.13 28.79 291.53C28.79 293.73 26.29 294.73 24.29 296.53C23.29 298.23 24.79 299.53 26.89 299.83C30.29 300.23 33.29 297.73 42.58 297.73M42.58 297.73C51.88 297.73 54.88 295.23 58.27 295.63C60.38 295.93 61.88 297.23 60.88 298.93C58.88 300.73 56.38 301.73 56.38 303.93C56.38 307.33 59.67 309.83 63.88 309.83C68.08 309.83 71.38 307.33 71.38 303.93C71.38 301.73 68.88 300.73 66.88 298.93C65.88 297.23 67.38 295.93 69.47 295.63C72.88 295.23 75.88 297.73 85.17 297.73M85.17 297.73C94.46 297.73 97.46 300.23 100.86 299.83C102.96 299.53 104.46 298.23 103.46 296.53C101.46 294.73 98.96 293.73 98.96 291.53C98.96 288.13 102.26 285.63 106.46 285.63C110.66 285.63 113.96 288.13 113.96 291.53C113.96 293.73 111.46 294.73 109.46 296.53C108.46 298.23 109.96 299.53 112.06 299.83C115.46 300.23 118.46 297.73 127.75 297.73M127.75 297.73C137.04 297.73 140.04 295.23 143.44 295.63C145.54 295.93 147.04 297.23 146.04 298.93C144.04 300.73 141.54 301.73 141.54 303.93C141.54 307.33 144.84 309.83 149.04 309.83C153.24 309.83 156.54 307.33 156.54 303.93C156.54 301.73 154.04 300.73 152.04 298.93C151.04 297.23 152.54 295.93 154.64 295.63C158.04 295.23 161.04 297.73 170.33 297.73M170.33 297.73C179.62 297.73 182.62 300.23 186.03 299.83C188.12 299.53 189.62 298.23 188.62 296.53C186.62 294.73 184.12 293.73 184.12 291.53C184.12 288.13 187.43 285.63 191.62 285.63C195.82 285.63 199.12 288.13 199.12 291.53C199.12 293.73 196.62 294.73 194.62 296.53C193.62 298.23 195.12 299.53 197.22 299.83C200.62 300.23 203.62 297.73 212.92 297.73M212.92 297.73C222.21 297.73 225.21 300.23 228.61 299.83C230.71 299.53 232.21 298.23 231.21 296.53C229.21 294.73 226.71 293.73 226.71 291.53C226.71 288.13 230.01 285.63 234.21 285.63C238.41 285.63 241.71 288.13 241.71 291.53C241.71 293.73 239.21 294.73 237.21 296.53C236.21 298.23 237.71 299.53 239.81 299.83C243.21 300.23 246.21 297.73 255.50 297.73M255.50 297.73C264.79 297.73 267.79 295.23 271.19 295.63C273.29 295.93 274.79 297.23 273.79 298.93C271.79 300.73 269.29 301.73 269.29 303.93C269.29 307.33 272.59 309.83 276.79 309.83C280.99 309.83 284.29 307.33 284.29 303.93C284.29 301.73 281.79 300.73 279.79 298.93C278.79 297.23 280.29 295.93 282.39 295.63C285.79 295.23 288.79 297.73 298.08 297.73M298.08 297.73C307.38 297.73 310.38 295.23 313.78 295.63C315.88 295.93 317.38 297.23 316.38 298.93C314.38 300.73 311.88 301.73 311.88 303.93C311.88 307.33 315.18 309.83 319.38 309.83C323.58 309.83 326.88 307.33 326.88 303.93C326.88 301.73 324.38 300.73 322.38 298.93C321.38 297.23 322.88 295.93 324.98 295.63C328.38 295.23 331.38 297.73 340.67 297.73M340.67 297.73C349.96 297.73 352.96 295.23 356.36 295.63C358.46 295.93 359.96 297.23 358.96 298.93C356.96 300.73 354.46 301.73 354.46 303.93C354.46 307.33 357.76 309.83 361.96 309.83C366.16 309.83 369.46 307.33 369.46 303.93C369.46 301.73 366.96 300.73 364.96 298.93C363.96 297.23 365.46 295.93 367.56 295.63C370.96 295.23 373.96 297.73 383.25 297.73M383.25 297.73C392.54 297.73 395.54 295.23 398.94 295.63C401.04 295.93 402.54 297.23 401.54 298.93C399.54 300.73 397.04 301.73 397.04 303.93C397.04 307.33 400.34 309.83 404.54 309.83C408.74 309.83 412.04 307.33 412.04 303.93C412.04 301.73 409.54 300.73 407.54 298.93C406.54 297.23 408.04 295.93 410.14 295.63C413.54 295.23 416.54 297.73 425.83 297.73M425.83 297.73C435.13 297.73 438.13 295.23 441.53 295.63C443.63 295.93 445.13 297.23 444.13 298.93C442.13 300.73 439.63 301.73 439.63 303.93C439.63 307.33 442.93 309.83 447.13 309.83C451.33 309.83 454.63 307.33 454.63 303.93C454.63 301.73 452.13 300.73 450.13 298.93C449.13 297.23 450.63 295.93 452.73 295.63C456.13 295.23 459.13 297.73 468.42 297.73M468.42 297.73C477.71 297.73 480.71 295.23 484.11 295.63C486.21 295.93 487.71 297.23 486.71 298.93C484.71 300.73 482.21 301.73 482.21 303.93C482.21 307.33 485.51 309.83 489.71 309.83C493.91 309.83 497.21 307.33 497.21 303.93C497.21 301.73 494.71 300.73 492.71 298.93C491.71 297.23 493.21 295.93 495.31 295.63C498.71 295.23 501.71 297.73 511.00 297.73M0.00 340.27C9.29 340.27 12.29 337.77 15.69 338.17C17.79 338.47 19.29 339.77 18.29 341.47C16.29 343.27 13.79 344.27 13.79 346.47C13.79 349.87 17.09 352.37 21.29 352.37C25.49 352.37 28.79 349.87 28.79 346.47C28.79 344.27 26.29 343.27 24.29 341.47C23.29 339.77 24.79 338.47 26.89 338.17C30.29 337.77 33.29 340.27 42.58 340.27M42.58 340.27C51.88 340.27 54.88 337.77 58.27 338.17C60.38 338.47 61.88 339.77 60.88 341.47C58.88 343.27 56.38 344.27 56.38 346.47C56.38 349.87 59.67 352.37 63.88 352.37C68.08 352.37 71.38 349.87 71.38 346.47C71.38 344.27 68.88 343.27 66.88 341.47C65.88 339.77 67.38 338.47 69.47 338.17C72.88 337.77 75.88 340.27 85.17 340.27M85.17 340.27C94.46 340.27 97.46 342.77 100.86 342.37C102.96 342.07 104.46 340.77 103.46 339.07C101.46 337.27 98.96 336.27 98.96 334.07C98.96 330.67 102.26 328.17 106.46 328.17C110.66 328.17 113.96 330.67 113.96 334.07C113.96 336.27 111.46 337.27 109.46 339.07C108.46 340.77 109.96 342.07 112.06 342.37C115.46 342.77 118.46 340.27 127.75 340.27M127.75 340.27C137.04 340.27 140.04 342.77 143.44 342.37C145.54 342.07 147.04 340.77 146.04 339.07C144.04 337.27 141.54 336.27 141.54 334.07C141.54 330.67 144.84 328.17 149.04 328.17C153.24 328.17 156.54 330.67 156.54 334.07C156.54 336.27 154.04 337.27 152.04 339.07C151.04 340.77 152.54 342.07 154.64 342.37C158.04 342.77 161.04 340.27 170.33 340.27M170.33 340.27C179.62 340.27 182.62 337.77 186.03 338.17C188.12 338.47 189.62 339.77 188.62 341.47C186.62 343.27 184.12 344.27 184.12 346.47C184.12 349.87 187.43 352.37 191.62 352.37C195.82 352.37 199.12 349.87 199.12 346.47C199.12 344.27 196.62 343.27 194.62 341.47C193.62 339.77 195.12 338.47 197.22 338.17C200.62 337.77 203.62 340.27 212.92 340.27M212.92 340.27C222.21 340.27 225.21 342.77 228.61 342.37C230.71 342.07 232.21 340.77 231.21 339.07C229.21 337.27 226.71 336.27 226.71 334.07C226.71 330.67 230.01 328.17 234.21 328.17C238.41 328.17 241.71 330.67 241.71 334.07C241.71 336.27 239.21 337.27 237.21 339.07C236.21 340.77 237.71 342.07 239.81 342.37C243.21 342.77 246.21 340.27 255.50 340.27M255.50 340.27C264.79 340.27 267.79 342.77 271.19 342.37C273.29 342.07 274.79 340.77 273.79 339.07C271.79 337.27 269.29 336.27 269.29 334.07C269.29 330.67 272.59 328.17 276.79 328.17C280.99 328.17 284.29 330.67 284.29 334.07C284.29 336.27 281.79 337.27 279.79 339.07C278.79 340.77 280.29 342.07 282.39 342.37C285.79 342.77 288.79 340.27 298.08 340.27M298.08 340.27C307.38 340.27 310.38 337.77 313.78 338.17C315.88 338.47 317.38 339.77 316.38 341.47C314.38 343.27 311.88 344.27 311.88 346.47C311.88 349.87 315.18 352.37 319.38 352.37C323.58 352.37 326.88 349.87 326.88 346.47C326.88 344.27 324.38 343.27 322.38 341.47C321.38 339.77 322.88 338.47 324.98 338.17C328.38 337.77 331.38 340.27 340.67 340.27M340.67 340.27C349.96 340.27 352.96 342.77 356.36 342.37C358.46 342.07 359.96 340.77 358.96 339.07C356.96 337.27 354.46 336.27 354.46 334.07C354.46 330.67 357.76 328.17 361.96 328.17C366.16 328.17 369.46 330.67 369.46 334.07C369.46 336.27 366.96 337.27 364.96 339.07C363.96 340.77 365.46 342.07 367.56 342.37C370.96 342.77 373.96 340.27 383.25 340.27M383.25 340.27C392.54 340.27 395.54 342.77 398.94 342.37C401.04 342.07 402.54 340.77 401.54 339.07C399.54 337.27 397.04 336.27 397.04 334.07C397.04 330.67 400.34 328.17 404.54 328.17C408.74 328.17 412.04 330.67 412.04 334.07C412.04 336.27 409.54 337.27 407.54 339.07C406.54 340.77 408.04 342.07 410.14 342.37C413.54 342.77 416.54 340.27 425.83 340.27M425.83 340.27C435.13 340.27 438.13 337.77 441.53 338.17C443.63 338.47 445.13 339.77 444.13 341.47C442.13 343.27 439.63 344.27 439.63 346.47C439.63 349.87 442.93 352.37 447.13 352.37C451.33 352.37 454.63 349.87 454.63 346.47C454.63 344.27 452.13 343.27 450.13 341.47C449.13 339.77 450.63 338.47 452.73 338.17C456.13 337.77 459.13 340.27 468.42 340.27M468.42 340.27C477.71 340.27 480.71 337.77 484.11 338.17C486.21 338.47 487.71 339.77 486.71 341.47C484.71 343.27 482.21 344.27 482.21 346.47C482.21 349.87 485.51 352.37 489.71 352.37C493.91 352.37 497.21 349.87 497.21 346.47C497.21 344.27 494.71 343.27 492.71 341.47C491.71 339.77 493.21 338.47 495.31 338.17C498.71 337.77 501.71 340.27 511.00 340.27M0.00 382.80C9.29 382.80 12.29 385.30 15.69 384.90C17.79 384.60 19.29 383.30 18.29 381.60C16.29 379.80 13.79 378.80 13.79 376.60C13.79 373.20 17.09 370.70 21.29 370.70C25.49 370.70 28.79 373.20 28.79 376.60C28.79 378.80 26.29 379.80 24.29 381.60C23.29 383.30 24.79 384.60 26.89 384.90C30.29 385.30 33.29 382.80 42.58 382.80M42.58 382.80C51.88 382.80 54.88 385.30 58.27 384.90C60.38 384.60 61.88 383.30 60.88 381.60C58.88 379.80 56.38 378.80 56.38 376.60C56.38 373.20 59.67 370.70 63.88 370.70C68.08 370.70 71.38 373.20 71.38 376.60C71.38 378.80 68.88 379.80 66.88 381.60C65.88 383.30 67.38 384.60 69.47 384.90C72.88 385.30 75.88 382.80 85.17 382.80M85.17 382.80C94.46 382.80 97.46 385.30 100.86 384.90C102.96 384.60 104.46 383.30 103.46 381.60C101.46 379.80 98.96 378.80 98.96 376.60C98.96 373.20 102.26 370.70 106.46 370.70C110.66 370.70 113.96 373.20 113.96 376.60C113.96 378.80 111.46 379.80 109.46 381.60C108.46 383.30 109.96 384.60 112.06 384.90C115.46 385.30 118.46 382.80 127.75 382.80M127.75 382.80C137.04 382.80 140.04 385.30 143.44 384.90C145.54 384.60 147.04 383.30 146.04 381.60C144.04 379.80 141.54 378.80 141.54 376.60C141.54 373.20 144.84 370.70 149.04 370.70C153.24 370.70 156.54 373.20 156.54 376.60C156.54 378.80 154.04 379.80 152.04 381.60C151.04 383.30 152.54 384.60 154.64 384.90C158.04 385.30 161.04 382.80 170.33 382.80M170.33 382.80C179.62 382.80 182.62 380.30 186.03 380.70C188.12 381.00 189.62 382.30 188.62 384.00C186.62 385.80 184.12 386.80 184.12 389.00C184.12 392.40 187.43 394.90 191.62 394.90C195.82 394.90 199.12 392.40 199.12 389.00C199.12 386.80 196.62 385.80 194.62 384.00C193.62 382.30 195.12 381.00 197.22 380.70C200.62 380.30 203.62 382.80 212.92 382.80M212.92 382.80C222.21 382.80 225.21 380.30 228.61 380.70C230.71 381.00 232.21 382.30 231.21 384.00C229.21 385.80 226.71 386.80 226.71 389.00C226.71 392.40 230.01 394.90 234.21 394.90C238.41 394.90 241.71 392.40 241.71 389.00C241.71 386.80 239.21 385.80 237.21 384.00C236.21 382.30 237.71 381.00 239.81 380.70C243.21 380.30 246.21 382.80 255.50 382.80M255.50 382.80C264.79 382.80 267.79 385.30 271.19 384.90C273.29 384.60 274.79 383.30 273.79 381.60C271.79 379.80 269.29 378.80 269.29 376.60C269.29 373.20 272.59 370.70 276.79 370.70C280.99 370.70 284.29 373.20 284.29 376.60C284.29 378.80 281.79 379.80 279.79 381.60C278.79 383.30 280.29 384.60 282.39 384.90C285.79 385.30 288.79 382.80 298.08 382.80M298.08 382.80C307.38 382.80 310.38 385.30 313.78 384.90C315.88 384.60 317.38 383.30 316.38 381.60C314.38 379.80 311.88 378.80 311.88 376.60C311.88 373.20 315.18 370.70 319.38 370.70C323.58 370.70 326.88 373.20 326.88 376.60C326.88 378.80 324.38 379.80 322.38 381.60C321.38 383.30 322.88 384.60 324.98 384.90C328.38 385.30 331.38 382.80 340.67 382.80M340.67 382.80C349.96 382.80 352.96 385.30 356.36 384.90C358.46 384.60 359.96 383.30 358.96 381.60C356.96 379.80 354.46 378.80 354.46 376.60C354.46 373.20 357.76 370.70 361.96 370.70C366.16 370.70 369.46 373.20 369.46 376.60C369.46 378.80 366.96 379.80 364.96 381.60C363.96 383.30 365.46 384.60 367.56 384.90C370.96 385.30 373.96 382.80 383.25 382.80M383.25 382.80C392.54 382.80 395.54 380.30 398.94 380.70C401.04 381.00 402.54 382.30 401.54 384.00C399.54 385.80 397.04 386.80 397.04 389.00C397.04 392.40 400.34 394.90 404.54 394.90C408.74 394.90 412.04 392.40 412.04 389.00C412.04 386.80 409.54 385.80 407.54 384.00C406.54 382.30 408.04 381.00 410.14 380.70C413.54 380.30 416.54 382.80 425.83 382.80M425.83 382.80C435.13 382.80 438.13 380.30 441.53 380.70C443.63 381.00 445.13 382.30 444.13 384.00C442.13 385.80 439.63 386.80 439.63 389.00C439.63 392.40 442.93 394.90 447.13 394.90C451.33 394.90 454.63 392.40 454.63 389.00C454.63 386.80 452.13 385.80 450.13 384.00C449.13 382.30 450.63 381.00 452.73 380.70C456.13 380.30 459.13 382.80 468.42 382.80M468.42 382.80C477.71 382.80 480.71 380.30 484.11 380.70C486.21 381.00 487.71 382.30 486.71 384.00C484.71 385.80 482.21 386.80 482.21 389.00C482.21 392.40 485.51 394.90 489.71 394.90C493.91 394.90 497.21 392.40 497.21 389.00C497.21 386.80 494.71 385.80 492.71 384.00C491.71 382.30 493.21 381.00 495.31 380.70C498.71 380.30 501.71 382.80 511.00 382.80M0.00 425.33C9.29 425.33 12.29 427.83 15.69 427.43C17.79 427.13 19.29 425.83 18.29 424.13C16.29 422.33 13.79 421.33 13.79 419.13C13.79 415.73 17.09 413.23 21.29 413.23C25.49 413.23 28.79 415.73 28.79 419.13C28.79 421.33 26.29 422.33 24.29 424.13C23.29 425.83 24.79 427.13 26.89 427.43C30.29 427.83 33.29 425.33 42.58 425.33M42.58 425.33C51.88 425.33 54.88 427.83 58.27 427.43C60.38 427.13 61.88 425.83 60.88 424.13C58.88 422.33 56.38 421.33 56.38 419.13C56.38 415.73 59.67 413.23 63.88 413.23C68.08 413.23 71.38 415.73 71.38 419.13C71.38 421.33 68.88 422.33 66.88 424.13C65.88 425.83 67.38 427.13 69.47 427.43C72.88 427.83 75.88 425.33 85.17 425.33M85.17 425.33C94.46 425.33 97.46 422.83 100.86 423.23C102.96 423.53 104.46 424.83 103.46 426.53C101.46 428.33 98.96 429.33 98.96 431.53C98.96 434.93 102.26 437.43 106.46 437.43C110.66 437.43 113.96 434.93 113.96 431.53C113.96 429.33 111.46 428.33 109.46 426.53C108.46 424.83 109.96 423.53 112.06 423.23C115.46 422.83 118.46 425.33 127.75 425.33M127.75 425.33C137.04 425.33 140.04 427.83 143.44 427.43C145.54 427.13 147.04 425.83 146.04 424.13C144.04 422.33 141.54 421.33 141.54 419.13C141.54 415.73 144.84 413.23 149.04 413.23C153.24 413.23 156.54 415.73 156.54 419.13C156.54 421.33 154.04 422.33 152.04 424.13C151.04 425.83 152.54 427.13 154.64 427.43C158.04 427.83 161.04 425.33 170.33 425.33M170.33 425.33C179.62 425.33 182.62 422.83 186.03 423.23C188.12 423.53 189.62 424.83 188.62 426.53C186.62 428.33 184.12 429.33 184.12 431.53C184.12 434.93 187.43 437.43 191.62 437.43C195.82 437.43 199.12 434.93 199.12 431.53C199.12 429.33 196.62 428.33 194.62 426.53C193.62 424.83 195.12 423.53 197.22 423.23C200.62 422.83 203.62 425.33 212.92 425.33M212.92 425.33C222.21 425.33 225.21 427.83 228.61 427.43C230.71 427.13 232.21 425.83 231.21 424.13C229.21 422.33 226.71 421.33 226.71 419.13C226.71 415.73 230.01 413.23 234.21 413.23C238.41 413.23 241.71 415.73 241.71 419.13C241.71 421.33 239.21 422.33 237.21 424.13C236.21 425.83 237.71 427.13 239.81 427.43C243.21 427.83 246.21 425.33 255.50 425.33M255.50 425.33C264.79 425.33 267.79 422.83 271.19 423.23C273.29 423.53 274.79 424.83 273.79 426.53C271.79 428.33 269.29 429.33 269.29 431.53C269.29 434.93 272.59 437.43 276.79 437.43C280.99 437.43 284.29 434.93 284.29 431.53C284.29 429.33 281.79 428.33 279.79 426.53C278.79 424.83 280.29 423.53 282.39 423.23C285.79 422.83 288.79 425.33 298.08 425.33M298.08 425.33C307.38 425.33 310.38 427.83 313.78 427.43C315.88 427.13 317.38 425.83 316.38 424.13C314.38 422.33 311.88 421.33 311.88 419.13C311.88 415.73 315.18 413.23 319.38 413.23C323.58 413.23 326.88 415.73 326.88 419.13C326.88 421.33 324.38 422.33 322.38 424.13C321.38 425.83 322.88 427.13 324.98 427.43C328.38 427.83 331.38 425.33 340.67 425.33M340.67 425.33C349.96 425.33 352.96 427.83 356.36 427.43C358.46 427.13 359.96 425.83 358.96 424.13C356.96 422.33 354.46 421.33 354.46 419.13C354.46 415.73 357.76 413.23 361.96 413.23C366.16 413.23 369.46 415.73 369.46 419.13C369.46 421.33 366.96 422.33 364.96 424.13C363.96 425.83 365.46 427.13 367.56 427.43C370.96 427.83 373.96 425.33 383.25 425.33M383.25 425.33C392.54 425.33 395.54 427.83 398.94 427.43C401.04 427.13 402.54 425.83 401.54 424.13C399.54 422.33 397.04 421.33 397.04 419.13C397.04 415.73 400.34 413.23 404.54 413.23C408.74 413.23 412.04 415.73 412.04 419.13C412.04 421.33 409.54 422.33 407.54 424.13C406.54 425.83 408.04 427.13 410.14 427.43C413.54 427.83 416.54 425.33 425.83 425.33M425.83 425.33C435.13 425.33 438.13 427.83 441.53 427.43C443.63 427.13 445.13 425.83 444.13 424.13C442.13 422.33 439.63 421.33 439.63 419.13C439.63 415.73 442.93 413.23 447.13 413.23C451.33 413.23 454.63 415.73 454.63 419.13C454.63 421.33 452.13 422.33 450.13 424.13C449.13 425.83 450.63 427.13 452.73 427.43C456.13 427.83 459.13 425.33 468.42 425.33M468.42 425.33C477.71 425.33 480.71 427.83 484.11 427.43C486.21 427.13 487.71 425.83 486.71 424.13C484.71 422.33 482.21 421.33 482.21 419.13C482.21 415.73 485.51 413.23 489.71 413.23C493.91 413.23 497.21 415.73 497.21 419.13C497.21 421.33 494.71 422.33 492.71 424.13C491.71 425.83 493.21 427.13 495.31 427.43C498.71 427.83 501.71 425.33 511.00 425.33M0.00 467.87C9.29 467.87 12.29 470.37 15.69 469.97C17.79 469.67 19.29 468.37 18.29 466.67C16.29 464.87 13.79 463.87 13.79 461.67C13.79 458.27 17.09 455.77 21.29 455.77C25.49 455.77 28.79 458.27 28.79 461.67C28.79 463.87 26.29 464.87 24.29 466.67C23.29 468.37 24.79 469.67 26.89 469.97C30.29 470.37 33.29 467.87 42.58 467.87M42.58 467.87C51.88 467.87 54.88 470.37 58.27 469.97C60.38 469.67 61.88 468.37 60.88 466.67C58.88 464.87 56.38 463.87 56.38 461.67C56.38 458.27 59.67 455.77 63.88 455.77C68.08 455.77 71.38 458.27 71.38 461.67C71.38 463.87 68.88 464.87 66.88 466.67C65.88 468.37 67.38 469.67 69.47 469.97C72.88 470.37 75.88 467.87 85.17 467.87M85.17 467.87C94.46 467.87 97.46 470.37 100.86 469.97C102.96 469.67 104.46 468.37 103.46 466.67C101.46 464.87 98.96 463.87 98.96 461.67C98.96 458.27 102.26 455.77 106.46 455.77C110.66 455.77 113.96 458.27 113.96 461.67C113.96 463.87 111.46 464.87 109.46 466.67C108.46 468.37 109.96 469.67 112.06 469.97C115.46 470.37 118.46 467.87 127.75 467.87M127.75 467.87C137.04 467.87 140.04 470.37 143.44 469.97C145.54 469.67 147.04 468.37 146.04 466.67C144.04 464.87 141.54 463.87 141.54 461.67C141.54 458.27 144.84 455.77 149.04 455.77C153.24 455.77 156.54 458.27 156.54 461.67C156.54 463.87 154.04 464.87 152.04 466.67C151.04 468.37 152.54 469.67 154.64 469.97C158.04 470.37 161.04 467.87 170.33 467.87M170.33 467.87C179.62 467.87 182.62 470.37 186.03 469.97C188.12 469.67 189.62 468.37 188.62 466.67C186.62 464.87 184.12 463.87 184.12 461.67C184.12 458.27 187.43 455.77 191.62 455.77C195.82 455.77 199.12 458.27 199.12 461.67C199.12 463.87 196.62 464.87 194.62 466.67C193.62 468.37 195.12 469.67 197.22 469.97C200.62 470.37 203.62 467.87 212.92 467.87M212.92 467.87C222.21 467.87 225.21 465.37 228.61 465.77C230.71 466.07 232.21 467.37 231.21 469.07C229.21 470.87 226.71 471.87 226.71 474.07C226.71 477.47 230.01 479.97 234.21 479.97C238.41 479.97 241.71 477.47 241.71 474.07C241.71 471.87 239.21 470.87 237.21 469.07C236.21 467.37 237.71 466.07 239.81 465.77C243.21 465.37 246.21 467.87 255.50 467.87M255.50 467.87C264.79 467.87 267.79 465.37 271.19 465.77C273.29 466.07 274.79 467.37 273.79 469.07C271.79 470.87 269.29 471.87 269.29 474.07C269.29 477.47 272.59 479.97 276.79 479.97C280.99 479.97 284.29 477.47 284.29 474.07C284.29 471.87 281.79 470.87 279.79 469.07C278.79 467.37 280.29 466.07 282.39 465.77C285.79 465.37 288.79 467.87 298.08 467.87M298.08 467.87C307.38 467.87 310.38 465.37 313.78 465.77C315.88 466.07 317.38 467.37 316.38 469.07C314.38 470.87 311.88 471.87 311.88 474.07C311.88 477.47 315.18 479.97 319.38 479.97C323.58 479.97 326.88 477.47 326.88 474.07C326.88 471.87 324.38 470.87 322.38 469.07C321.38 467.37 322.88 466.07 324.98 465.77C328.38 465.37 331.38 467.87 340.67 467.87M340.67 467.87C349.96 467.87 352.96 470.37 356.36 469.97C358.46 469.67 359.96 468.37 358.96 466.67C356.96 464.87 354.46 463.87 354.46 461.67C354.46 458.27 357.76 455.77 361.96 455.77C366.16 455.77 369.46 458.27 369.46 461.67C369.46 463.87 366.96 464.87 364.96 466.67C363.96 468.37 365.46 469.67 367.56 469.97C370.96 470.37 373.96 467.87 383.25 467.87M383.25 467.87C392.54 467.87 395.54 470.37 398.94 469.97C401.04 469.67 402.54 468.37 401.54 466.67C399.54 464.87 397.04 463.87 397.04 461.67C397.04 458.27 400.34 455.77 404.54 455.77C408.74 455.77 412.04 458.27 412.04 461.67C412.04 463.87 409.54 464.87 407.54 466.67C406.54 468.37 408.04 469.67 410.14 469.97C413.54 470.37 416.54 467.87 425.83 467.87M425.83 467.87C435.13 467.87 438.13 465.37 441.53 465.77C443.63 466.07 445.13 467.37 444.13 469.07C442.13 470.87 439.63 471.87 439.63 474.07C439.63 477.47 442.93 479.97 447.13 479.97C451.33 479.97 454.63 477.47 454.63 474.07C454.63 471.87 452.13 470.87 450.13 469.07C449.13 467.37 450.63 466.07 452.73 465.77C456.13 465.37 459.13 467.87 468.42 467.87M468.42 467.87C477.71 467.87 480.71 470.37 484.11 469.97C486.21 469.67 487.71 468.37 486.71 466.67C484.71 464.87 482.21 463.87 482.21 461.67C482.21 458.27 485.51 455.77 489.71 455.77C493.91 455.77 497.21 458.27 497.21 461.67C497.21 463.87 494.71 464.87 492.71 466.67C491.71 468.37 493.21 469.67 495.31 469.97C498.71 470.37 501.71 467.87 511.00 467.87M0.00 510.40C9.29 510.40 12.29 512.90 15.69 512.50C17.79 512.20 19.29 510.90 18.29 509.20C16.29 507.40 13.79 506.40 13.79 504.20C13.79 500.80 17.09 498.30 21.29 498.30C25.49 498.30 28.79 500.80 28.79 504.20C28.79 506.40 26.29 507.40 24.29 509.20C23.29 510.90 24.79 512.20 26.89 512.50C30.29 512.90 33.29 510.40 42.58 510.40M42.58 510.40C51.88 510.40 54.88 507.90 58.27 508.30C60.38 508.60 61.88 509.90 60.88 511.60C58.88 513.40 56.38 514.40 56.38 516.60C56.38 520.00 59.67 522.50 63.88 522.50C68.08 522.50 71.38 520.00 71.38 516.60C71.38 514.40 68.88 513.40 66.88 511.60C65.88 509.90 67.38 508.60 69.47 508.30C72.88 507.90 75.88 510.40 85.17 510.40M85.17 510.40C94.46 510.40 97.46 512.90 100.86 512.50C102.96 512.20 104.46 510.90 103.46 509.20C101.46 507.40 98.96 506.40 98.96 504.20C98.96 500.80 102.26 498.30 106.46 498.30C110.66 498.30 113.96 500.80 113.96 504.20C113.96 506.40 111.46 507.40 109.46 509.20C108.46 510.90 109.96 512.20 112.06 512.50C115.46 512.90 118.46 510.40 127.75 510.40M127.75 510.40C137.04 510.40 140.04 512.90 143.44 512.50C145.54 512.20 147.04 510.90 146.04 509.20C144.04 507.40 141.54 506.40 141.54 504.20C141.54 500.80 144.84 498.30 149.04 498.30C153.24 498.30 156.54 500.80 156.54 504.20C156.54 506.40 154.04 507.40 152.04 509.20C151.04 510.90 152.54 512.20 154.64 512.50C158.04 512.90 161.04 510.40 170.33 510.40M170.33 510.40C179.62 510.40 182.62 507.90 186.03 508.30C188.12 508.60 189.62 509.90 188.62 511.60C186.62 513.40 184.12 514.40 184.12 516.60C184.12 520.00 187.43 522.50 191.62 522.50C195.82 522.50 199.12 520.00 199.12 516.60C199.12 514.40 196.62 513.40 194.62 511.60C193.62 509.90 195.12 508.60 197.22 508.30C200.62 507.90 203.62 510.40 212.92 510.40M212.92 510.40C222.21 510.40 225.21 512.90 228.61 512.50C230.71 512.20 232.21 510.90 231.21 509.20C229.21 507.40 226.71 506.40 226.71 504.20C226.71 500.80 230.01 498.30 234.21 498.30C238.41 498.30 241.71 500.80 241.71 504.20C241.71 506.40 239.21 507.40 237.21 509.20C236.21 510.90 237.71 512.20 239.81 512.50C243.21 512.90 246.21 510.40 255.50 510.40M255.50 510.40C264.79 510.40 267.79 507.90 271.19 508.30C273.29 508.60 274.79 509.90 273.79 511.60C271.79 513.40 269.29 514.40 269.29 516.60C269.29 520.00 272.59 522.50 276.79 522.50C280.99 522.50 284.29 520.00 284.29 516.60C284.29 514.40 281.79 513.40 279.79 511.60C278.79 509.90 280.29 508.60 282.39 508.30C285.79 507.90 288.79 510.40 298.08 510.40M298.08 510.40C307.38 510.40 310.38 512.90 313.78 512.50C315.88 512.20 317.38 510.90 316.38 509.20C314.38 507.40 311.88 506.40 311.88 504.20C311.88 500.80 315.18 498.30 319.38 498.30C323.58 498.30 326.88 500.80 326.88 504.20C326.88 506.40 324.38 507.40 322.38 509.20C321.38 510.90 322.88 512.20 324.98 512.50C328.38 512.90 331.38 510.40 340.67 510.40M340.67 510.40C349.96 510.40 352.96 512.90 356.36 512.50C358.46 512.20 359.96 510.90 358.96 509.20C356.96 507.40 354.46 506.40 354.46 504.20C354.46 500.80 357.76 498.30 361.96 498.30C366.16 498.30 369.46 500.80 369.46 504.20C369.46 506.40 366.96 507.40 364.96 509.20C363.96 510.90 365.46 512.20 367.56 512.50C370.96 512.90 373.96 510.40 383.25 510.40M383.25 510.40C392.54 510.40 395.54 507.90 398.94 508.30C401.04 508.60 402.54 509.90 401.54 511.60C399.54 513.40 397.04 514.40 397.04 516.60C397.04 520.00 400.34 522.50 404.54 522.50C408.74 522.50 412.04 520.00 412.04 516.60C412.04 514.40 409.54 513.40 407.54 511.60C406.54 509.90 408.04 508.60 410.14 508.30C413.54 507.90 416.54 510.40 425.83 510.40M425.83 510.40C435.13 510.40 438.13 507.90 441.53 508.30C443.63 508.60 445.13 509.90 444.13 511.60C442.13 513.40 439.63 514.40 439.63 516.60C439.63 520.00 442.93 522.50 447.13 522.50C451.33 522.50 454.63 520.00 454.63 516.60C454.63 514.40 452.13 513.40 450.13 511.60C449.13 509.90 450.63 508.60 452.73 508.30C456.13 507.90 459.13 510.40 468.42 510.40M468.42 510.40C477.71 510.40 480.71 512.90 484.11 512.50C486.21 512.20 487.71 510.90 486.71 509.20C484.71 507.40 482.21 506.40 482.21 504.20C482.21 500.80 485.51 498.30 489.71 498.30C493.91 498.30 497.21 500.80 497.21 504.20C497.21 506.40 494.71 507.40 492.71 509.20C491.71 510.90 493.21 512.20 495.31 512.50C498.71 512.90 501.71 510.40 511.00 510.40M0.00 552.93C9.29 552.93 12.29 555.43 15.69 555.03C17.79 554.73 19.29 553.43 18.29 551.73C16.29 549.93 13.79 548.93 13.79 546.73C13.79 543.33 17.09 540.83 21.29 540.83C25.49 540.83 28.79 543.33 28.79 546.73C28.79 548.93 26.29 549.93 24.29 551.73C23.29 553.43 24.79 554.73 26.89 555.03C30.29 555.43 33.29 552.93 42.58 552.93M42.58 552.93C51.88 552.93 54.88 550.43 58.27 550.83C60.38 551.13 61.88 552.43 60.88 554.13C58.88 555.93 56.38 556.93 56.38 559.13C56.38 562.53 59.67 565.03 63.88 565.03C68.08 565.03 71.38 562.53 71.38 559.13C71.38 556.93 68.88 555.93 66.88 554.13C65.88 552.43 67.38 551.13 69.47 550.83C72.88 550.43 75.88 552.93 85.17 552.93M85.17 552.93C94.46 552.93 97.46 550.43 100.86 550.83C102.96 551.13 104.46 552.43 103.46 554.13C101.46 555.93 98.96 556.93 98.96 559.13C98.96 562.53 102.26 565.03 106.46 565.03C110.66 565.03 113.96 562.53 113.96 559.13C113.96 556.93 111.46 555.93 109.46 554.13C108.46 552.43 109.96 551.13 112.06 550.83C115.46 550.43 118.46 552.93 127.75 552.93M127.75 552.93C137.04 552.93 140.04 550.43 143.44 550.83C145.54 551.13 147.04 552.43 146.04 554.13C144.04 555.93 141.54 556.93 141.54 559.13C141.54 562.53 144.84 565.03 149.04 565.03C153.24 565.03 156.54 562.53 156.54 559.13C156.54 556.93 154.04 555.93 152.04 554.13C151.04 552.43 152.54 551.13 154.64 550.83C158.04 550.43 161.04 552.93 170.33 552.93M170.33 552.93C179.62 552.93 182.62 555.43 186.03 555.03C188.12 554.73 189.62 553.43 188.62 551.73C186.62 549.93 184.12 548.93 184.12 546.73C184.12 543.33 187.43 540.83 191.62 540.83C195.82 540.83 199.12 543.33 199.12 546.73C199.12 548.93 196.62 549.93 194.62 551.73C193.62 553.43 195.12 554.73 197.22 555.03C200.62 555.43 203.62 552.93 212.92 552.93M212.92 552.93C222.21 552.93 225.21 550.43 228.61 550.83C230.71 551.13 232.21 552.43 231.21 554.13C229.21 555.93 226.71 556.93 226.71 559.13C226.71 562.53 230.01 565.03 234.21 565.03C238.41 565.03 241.71 562.53 241.71 559.13C241.71 556.93 239.21 555.93 237.21 554.13C236.21 552.43 237.71 551.13 239.81 550.83C243.21 550.43 246.21 552.93 255.50 552.93M255.50 552.93C264.79 552.93 267.79 550.43 271.19 550.83C273.29 551.13 274.79 552.43 273.79 554.13C271.79 555.93 269.29 556.93 269.29 559.13C269.29 562.53 272.59 565.03 276.79 565.03C280.99 565.03 284.29 562.53 284.29 559.13C284.29 556.93 281.79 555.93 279.79 554.13C278.79 552.43 280.29 551.13 282.39 550.83C285.79 550.43 288.79 552.93 298.08 552.93M298.08 552.93C307.38 552.93 310.38 550.43 313.78 550.83C315.88 551.13 317.38 552.43 316.38 554.13C314.38 555.93 311.88 556.93 311.88 559.13C311.88 562.53 315.18 565.03 319.38 565.03C323.58 565.03 326.88 562.53 326.88 559.13C326.88 556.93 324.38 555.93 322.38 554.13C321.38 552.43 322.88 551.13 324.98 550.83C328.38 550.43 331.38 552.93 340.67 552.93M340.67 552.93C349.96 552.93 352.96 555.43 356.36 555.03C358.46 554.73 359.96 553.43 358.96 551.73C356.96 549.93 354.46 548.93 354.46 546.73C354.46 543.33 357.76 540.83 361.96 540.83C366.16 540.83 369.46 543.33 369.46 546.73C369.46 548.93 366.96 549.93 364.96 551.73C363.96 553.43 365.46 554.73 367.56 555.03C370.96 555.43 373.96 552.93 383.25 552.93M383.25 552.93C392.54 552.93 395.54 550.43 398.94 550.83C401.04 551.13 402.54 552.43 401.54 554.13C399.54 555.93 397.04 556.93 397.04 559.13C397.04 562.53 400.34 565.03 404.54 565.03C408.74 565.03 412.04 562.53 412.04 559.13C412.04 556.93 409.54 555.93 407.54 554.13C406.54 552.43 408.04 551.13 410.14 550.83C413.54 550.43 416.54 552.93 425.83 552.93M425.83 552.93C435.13 552.93 438.13 550.43 441.53 550.83C443.63 551.13 445.13 552.43 444.13 554.13C442.13 555.93 439.63 556.93 439.63 559.13C439.63 562.53 442.93 565.03 447.13 565.03C451.33 565.03 454.63 562.53 454.63 559.13C454.63 556.93 452.13 555.93 450.13 554.13C449.13 552.43 450.63 551.13 452.73 550.83C456.13 550.43 459.13 552.93 468.42 552.93M468.42 552.93C477.71 552.93 480.71 550.43 484.11 550.83C486.21 551.13 487.71 552.43 486.71 554.13C484.71 555.93 482.21 556.93 482.21 559.13C482.21 562.53 485.51 565.03 489.71 565.03C493.91 565.03 497.21 562.53 497.21 559.13C497.21 556.93 494.71 555.93 492.71 554.13C491.71 552.43 493.21 551.13 495.31 550.83C498.71 550.43 501.71 552.93 511.00 552.93M0.00 595.47C9.29 595.47 12.29 592.97 15.69 593.37C17.79 593.67 19.29 594.97 18.29 596.67C16.29 598.47 13.79 599.47 13.79 601.67C13.79 605.07 17.09 607.57 21.29 607.57C25.49 607.57 28.79 605.07 28.79 601.67C28.79 599.47 26.29 598.47 24.29 596.67C23.29 594.97 24.79 593.67 26.89 593.37C30.29 592.97 33.29 595.47 42.58 595.47M42.58 595.47C51.88 595.47 54.88 592.97 58.27 593.37C60.38 593.67 61.88 594.97 60.88 596.67C58.88 598.47 56.38 599.47 56.38 601.67C56.38 605.07 59.67 607.57 63.88 607.57C68.08 607.57 71.38 605.07 71.38 601.67C71.38 599.47 68.88 598.47 66.88 596.67C65.88 594.97 67.38 593.67 69.47 593.37C72.88 592.97 75.88 595.47 85.17 595.47M85.17 595.47C94.46 595.47 97.46 597.97 100.86 597.57C102.96 597.27 104.46 595.97 103.46 594.27C101.46 592.47 98.96 591.47 98.96 589.27C98.96 585.87 102.26 583.37 106.46 583.37C110.66 583.37 113.96 585.87 113.96 589.27C113.96 591.47 111.46 592.47 109.46 594.27C108.46 595.97 109.96 597.27 112.06 597.57C115.46 597.97 118.46 595.47 127.75 595.47M127.75 595.47C137.04 595.47 140.04 592.97 143.44 593.37C145.54 593.67 147.04 594.97 146.04 596.67C144.04 598.47 141.54 599.47 141.54 601.67C141.54 605.07 144.84 607.57 149.04 607.57C153.24 607.57 156.54 605.07 156.54 601.67C156.54 599.47 154.04 598.47 152.04 596.67C151.04 594.97 152.54 593.67 154.64 593.37C158.04 592.97 161.04 595.47 170.33 595.47M170.33 595.47C179.62 595.47 182.62 592.97 186.03 593.37C188.12 593.67 189.62 594.97 188.62 596.67C186.62 598.47 184.12 599.47 184.12 601.67C184.12 605.07 187.43 607.57 191.62 607.57C195.82 607.57 199.12 605.07 199.12 601.67C199.12 599.47 196.62 598.47 194.62 596.67C193.62 594.97 195.12 593.67 197.22 593.37C200.62 592.97 203.62 595.47 212.92 595.47M212.92 595.47C222.21 595.47 225.21 592.97 228.61 593.37C230.71 593.67 232.21 594.97 231.21 596.67C229.21 598.47 226.71 599.47 226.71 601.67C226.71 605.07 230.01 607.57 234.21 607.57C238.41 607.57 241.71 605.07 241.71 601.67C241.71 599.47 239.21 598.47 237.21 596.67C236.21 594.97 237.71 593.67 239.81 593.37C243.21 592.97 246.21 595.47 255.50 595.47M255.50 595.47C264.79 595.47 267.79 597.97 271.19 597.57C273.29 597.27 274.79 595.97 273.79 594.27C271.79 592.47 269.29 591.47 269.29 589.27C269.29 585.87 272.59 583.37 276.79 583.37C280.99 583.37 284.29 585.87 284.29 589.27C284.29 591.47 281.79 592.47 279.79 594.27C278.79 595.97 280.29 597.27 282.39 597.57C285.79 597.97 288.79 595.47 298.08 595.47M298.08 595.47C307.38 595.47 310.38 597.97 313.78 597.57C315.88 597.27 317.38 595.97 316.38 594.27C314.38 592.47 311.88 591.47 311.88 589.27C311.88 585.87 315.18 583.37 319.38 583.37C323.58 583.37 326.88 585.87 326.88 589.27C326.88 591.47 324.38 592.47 322.38 594.27C321.38 595.97 322.88 597.27 324.98 597.57C328.38 597.97 331.38 595.47 340.67 595.47M340.67 595.47C349.96 595.47 352.96 592.97 356.36 593.37C358.46 593.67 359.96 594.97 358.96 596.67C356.96 598.47 354.46 599.47 354.46 601.67C354.46 605.07 357.76 607.57 361.96 607.57C366.16 607.57 369.46 605.07 369.46 601.67C369.46 599.47 366.96 598.47 364.96 596.67C363.96 594.97 365.46 593.67 367.56 593.37C370.96 592.97 373.96 595.47 383.25 595.47M383.25 595.47C392.54 595.47 395.54 597.97 398.94 597.57C401.04 597.27 402.54 595.97 401.54 594.27C399.54 592.47 397.04 591.47 397.04 589.27C397.04 585.87 400.34 583.37 404.54 583.37C408.74 583.37 412.04 585.87 412.04 589.27C412.04 591.47 409.54 592.47 407.54 594.27C406.54 595.97 408.04 597.27 410.14 597.57C413.54 597.97 416.54 595.47 425.83 595.47M425.83 595.47C435.13 595.47 438.13 592.97 441.53 593.37C443.63 593.67 445.13 594.97 444.13 596.67C442.13 598.47 439.63 599.47 439.63 601.67C439.63 605.07 442.93 607.57 447.13 607.57C451.33 607.57 454.63 605.07 454.63 601.67C454.63 599.47 452.13 598.47 450.13 596.67C449.13 594.97 450.63 593.67 452.73 593.37C456.13 592.97 459.13 595.47 468.42 595.47M468.42 595.47C477.71 595.47 480.71 592.97 484.11 593.37C486.21 593.67 487.71 594.97 486.71 596.67C484.71 598.47 482.21 599.47 482.21 601.67C482.21 605.07 485.51 607.57 489.71 607.57C493.91 607.57 497.21 605.07 497.21 601.67C497.21 599.47 494.71 598.47 492.71 596.67C491.71 594.97 493.21 593.67 495.31 593.37C498.71 592.97 501.71 595.47 511.00 595.47M42.58 0.00C42.58 9.27 40.08 12.27 40.48 15.67C40.78 17.77 42.08 19.27 43.78 18.27C45.58 16.27 46.58 13.77 48.78 13.77C52.18 13.77 54.68 17.07 54.68 21.27C54.68 25.47 52.18 28.77 48.78 28.77C46.58 28.77 45.58 26.27 43.78 24.27C42.08 23.27 40.78 24.77 40.48 26.87C40.08 30.27 42.58 33.27 42.58 42.53M85.17 0.00C85.17 9.27 82.67 12.27 83.07 15.67C83.37 17.77 84.67 19.27 86.37 18.27C88.17 16.27 89.17 13.77 91.37 13.77C94.77 13.77 97.27 17.07 97.27 21.27C97.27 25.47 94.77 28.77 91.37 28.77C89.17 28.77 88.17 26.27 86.37 24.27C84.67 23.27 83.37 24.77 83.07 26.87C82.67 30.27 85.17 33.27 85.17 42.53M127.75 0.00C127.75 9.27 130.25 12.27 129.85 15.67C129.55 17.77 128.25 19.27 126.55 18.27C124.75 16.27 123.75 13.77 121.55 13.77C118.15 13.77 115.65 17.07 115.65 21.27C115.65 25.47 118.15 28.77 121.55 28.77C123.75 28.77 124.75 26.27 126.55 24.27C128.25 23.27 129.55 24.77 129.85 26.87C130.25 30.27 127.75 33.27 127.75 42.53M170.33 0.00C170.33 9.27 172.83 12.27 172.43 15.67C172.13 17.77 170.83 19.27 169.13 18.27C167.33 16.27 166.33 13.77 164.13 13.77C160.73 13.77 158.23 17.07 158.23 21.27C158.23 25.47 160.73 28.77 164.13 28.77C166.33 28.77 167.33 26.27 169.13 24.27C170.83 23.27 172.13 24.77 172.43 26.87C172.83 30.27 170.33 33.27 170.33 42.53M212.92 0.00C212.92 9.27 215.42 12.27 215.02 15.67C214.72 17.77 213.42 19.27 211.72 18.27C209.92 16.27 208.92 13.77 206.72 13.77C203.32 13.77 200.82 17.07 200.82 21.27C200.82 25.47 203.32 28.77 206.72 28.77C208.92 28.77 209.92 26.27 211.72 24.27C213.42 23.27 214.72 24.77 215.02 26.87C215.42 30.27 212.92 33.27 212.92 42.53M255.50 0.00C255.50 9.27 253.00 12.27 253.40 15.67C253.70 17.77 255.00 19.27 256.70 18.27C258.50 16.27 259.50 13.77 261.70 13.77C265.10 13.77 267.60 17.07 267.60 21.27C267.60 25.47 265.10 28.77 261.70 28.77C259.50 28.77 258.50 26.27 256.70 24.27C255.00 23.27 253.70 24.77 253.40 26.87C253.00 30.27 255.50 33.27 255.50 42.53M298.08 0.00C298.08 9.27 295.58 12.27 295.98 15.67C296.28 17.77 297.58 19.27 299.28 18.27C301.08 16.27 302.08 13.77 304.28 13.77C307.68 13.77 310.18 17.07 310.18 21.27C310.18 25.47 307.68 28.77 304.28 28.77C302.08 28.77 301.08 26.27 299.28 24.27C297.58 23.27 296.28 24.77 295.98 26.87C295.58 30.27 298.08 33.27 298.08 42.53M340.67 0.00C340.67 9.27 338.17 12.27 338.57 15.67C338.87 17.77 340.17 19.27 341.87 18.27C343.67 16.27 344.67 13.77 346.87 13.77C350.27 13.77 352.77 17.07 352.77 21.27C352.77 25.47 350.27 28.77 346.87 28.77C344.67 28.77 343.67 26.27 341.87 24.27C340.17 23.27 338.87 24.77 338.57 26.87C338.17 30.27 340.67 33.27 340.67 42.53M383.25 0.00C383.25 9.27 380.75 12.27 381.15 15.67C381.45 17.77 382.75 19.27 384.45 18.27C386.25 16.27 387.25 13.77 389.45 13.77C392.85 13.77 395.35 17.07 395.35 21.27C395.35 25.47 392.85 28.77 389.45 28.77C387.25 28.77 386.25 26.27 384.45 24.27C382.75 23.27 381.45 24.77 381.15 26.87C380.75 30.27 383.25 33.27 383.25 42.53M425.83 0.00C425.83 9.27 428.33 12.27 427.93 15.67C427.63 17.77 426.33 19.27 424.63 18.27C422.83 16.27 421.83 13.77 419.63 13.77C416.23 13.77 413.73 17.07 413.73 21.27C413.73 25.47 416.23 28.77 419.63 28.77C421.83 28.77 422.83 26.27 424.63 24.27C426.33 23.27 427.63 24.77 427.93 26.87C428.33 30.27 425.83 33.27 425.83 42.53M468.42 0.00C468.42 9.27 470.92 12.27 470.52 15.67C470.22 17.77 468.92 19.27 467.22 18.27C465.42 16.27 464.42 13.77 462.22 13.77C458.82 13.77 456.32 17.07 456.32 21.27C456.32 25.47 458.82 28.77 462.22 28.77C464.42 28.77 465.42 26.27 467.22 24.27C468.92 23.27 470.22 24.77 470.52 26.87C470.92 30.27 468.42 33.27 468.42 42.53M42.58 42.53C42.58 51.80 40.08 54.80 40.48 58.20C40.78 60.30 42.08 61.80 43.78 60.80C45.58 58.80 46.58 56.30 48.78 56.30C52.18 56.30 54.68 59.60 54.68 63.80C54.68 68.00 52.18 71.30 48.78 71.30C46.58 71.30 45.58 68.80 43.78 66.80C42.08 65.80 40.78 67.30 40.48 69.40C40.08 72.80 42.58 75.80 42.58 85.07M85.17 42.53C85.17 51.80 87.67 54.80 87.27 58.20C86.97 60.30 85.67 61.80 83.97 60.80C82.17 58.80 81.17 56.30 78.97 56.30C75.57 56.30 73.07 59.60 73.07 63.80C73.07 68.00 75.57 71.30 78.97 71.30C81.17 71.30 82.17 68.80 83.97 66.80C85.67 65.80 86.97 67.30 87.27 69.40C87.67 72.80 85.17 75.80 85.17 85.07M127.75 42.53C127.75 51.80 125.25 54.80 125.65 58.20C125.95 60.30 127.25 61.80 128.95 60.80C130.75 58.80 131.75 56.30 133.95 56.30C137.35 56.30 139.85 59.60 139.85 63.80C139.85 68.00 137.35 71.30 133.95 71.30C131.75 71.30 130.75 68.80 128.95 66.80C127.25 65.80 125.95 67.30 125.65 69.40C125.25 72.80 127.75 75.80 127.75 85.07M170.33 42.53C170.33 51.80 167.83 54.80 168.23 58.20C168.53 60.30 169.83 61.80 171.53 60.80C173.33 58.80 174.33 56.30 176.53 56.30C179.93 56.30 182.43 59.60 182.43 63.80C182.43 68.00 179.93 71.30 176.53 71.30C174.33 71.30 173.33 68.80 171.53 66.80C169.83 65.80 168.53 67.30 168.23 69.40C167.83 72.80 170.33 75.80 170.33 85.07M212.92 42.53C212.92 51.80 210.42 54.80 210.82 58.20C211.12 60.30 212.42 61.80 214.12 60.80C215.92 58.80 216.92 56.30 219.12 56.30C222.52 56.30 225.02 59.60 225.02 63.80C225.02 68.00 222.52 71.30 219.12 71.30C216.92 71.30 215.92 68.80 214.12 66.80C212.42 65.80 211.12 67.30 210.82 69.40C210.42 72.80 212.92 75.80 212.92 85.07M255.50 42.53C255.50 51.80 253.00 54.80 253.40 58.20C253.70 60.30 255.00 61.80 256.70 60.80C258.50 58.80 259.50 56.30 261.70 56.30C265.10 56.30 267.60 59.60 267.60 63.80C267.60 68.00 265.10 71.30 261.70 71.30C259.50 71.30 258.50 68.80 256.70 66.80C255.00 65.80 253.70 67.30 253.40 69.40C253.00 72.80 255.50 75.80 255.50 85.07M298.08 42.53C298.08 51.80 300.58 54.80 300.18 58.20C299.88 60.30 298.58 61.80 296.88 60.80C295.08 58.80 294.08 56.30 291.88 56.30C288.48 56.30 285.98 59.60 285.98 63.80C285.98 68.00 288.48 71.30 291.88 71.30C294.08 71.30 295.08 68.80 296.88 66.80C298.58 65.80 299.88 67.30 300.18 69.40C300.58 72.80 298.08 75.80 298.08 85.07M340.67 42.53C340.67 51.80 343.17 54.80 342.77 58.20C342.47 60.30 341.17 61.80 339.47 60.80C337.67 58.80 336.67 56.30 334.47 56.30C331.07 56.30 328.57 59.60 328.57 63.80C328.57 68.00 331.07 71.30 334.47 71.30C336.67 71.30 337.67 68.80 339.47 66.80C341.17 65.80 342.47 67.30 342.77 69.40C343.17 72.80 340.67 75.80 340.67 85.07M383.25 42.53C383.25 51.80 385.75 54.80 385.35 58.20C385.05 60.30 383.75 61.80 382.05 60.80C380.25 58.80 379.25 56.30 377.05 56.30C373.65 56.30 371.15 59.60 371.15 63.80C371.15 68.00 373.65 71.30 377.05 71.30C379.25 71.30 380.25 68.80 382.05 66.80C383.75 65.80 385.05 67.30 385.35 69.40C385.75 72.80 383.25 75.80 383.25 85.07M425.83 42.53C425.83 51.80 428.33 54.80 427.93 58.20C427.63 60.30 426.33 61.80 424.63 60.80C422.83 58.80 421.83 56.30 419.63 56.30C416.23 56.30 413.73 59.60 413.73 63.80C413.73 68.00 416.23 71.30 419.63 71.30C421.83 71.30 422.83 68.80 424.63 66.80C426.33 65.80 427.63 67.30 427.93 69.40C428.33 72.80 425.83 75.80 425.83 85.07M468.42 42.53C468.42 51.80 470.92 54.80 470.52 58.20C470.22 60.30 468.92 61.80 467.22 60.80C465.42 58.80 464.42 56.30 462.22 56.30C458.82 56.30 456.32 59.60 456.32 63.80C456.32 68.00 458.82 71.30 462.22 71.30C464.42 71.30 465.42 68.80 467.22 66.80C468.92 65.80 470.22 67.30 470.52 69.40C470.92 72.80 468.42 75.80 468.42 85.07M42.58 85.07C42.58 94.33 45.08 97.33 44.68 100.73C44.38 102.83 43.08 104.33 41.38 103.33C39.58 101.33 38.58 98.83 36.38 98.83C32.98 98.83 30.48 102.13 30.48 106.33C30.48 110.53 32.98 113.83 36.38 113.83C38.58 113.83 39.58 111.33 41.38 109.33C43.08 108.33 44.38 109.83 44.68 111.93C45.08 115.33 42.58 118.33 42.58 127.60M85.17 85.07C85.17 94.33 82.67 97.33 83.07 100.73C83.37 102.83 84.67 104.33 86.37 103.33C88.17 101.33 89.17 98.83 91.37 98.83C94.77 98.83 97.27 102.13 97.27 106.33C97.27 110.53 94.77 113.83 91.37 113.83C89.17 113.83 88.17 111.33 86.37 109.33C84.67 108.33 83.37 109.83 83.07 111.93C82.67 115.33 85.17 118.33 85.17 127.60M127.75 85.07C127.75 94.33 130.25 97.33 129.85 100.73C129.55 102.83 128.25 104.33 126.55 103.33C124.75 101.33 123.75 98.83 121.55 98.83C118.15 98.83 115.65 102.13 115.65 106.33C115.65 110.53 118.15 113.83 121.55 113.83C123.75 113.83 124.75 111.33 126.55 109.33C128.25 108.33 129.55 109.83 129.85 111.93C130.25 115.33 127.75 118.33 127.75 127.60M170.33 85.07C170.33 94.33 167.83 97.33 168.23 100.73C168.53 102.83 169.83 104.33 171.53 103.33C173.33 101.33 174.33 98.83 176.53 98.83C179.93 98.83 182.43 102.13 182.43 106.33C182.43 110.53 179.93 113.83 176.53 113.83C174.33 113.83 173.33 111.33 171.53 109.33C169.83 108.33 168.53 109.83 168.23 111.93C167.83 115.33 170.33 118.33 170.33 127.60M212.92 85.07C212.92 94.33 215.42 97.33 215.02 100.73C214.72 102.83 213.42 104.33 211.72 103.33C209.92 101.33 208.92 98.83 206.72 98.83C203.32 98.83 200.82 102.13 200.82 106.33C200.82 110.53 203.32 113.83 206.72 113.83C208.92 113.83 209.92 111.33 211.72 109.33C213.42 108.33 214.72 109.83 215.02 111.93C215.42 115.33 212.92 118.33 212.92 127.60M255.50 85.07C255.50 94.33 258.00 97.33 257.60 100.73C257.30 102.83 256.00 104.33 254.30 103.33C252.50 101.33 251.50 98.83 249.30 98.83C245.90 98.83 243.40 102.13 243.40 106.33C243.40 110.53 245.90 113.83 249.30 113.83C251.50 113.83 252.50 111.33 254.30 109.33C256.00 108.33 257.30 109.83 257.60 111.93C258.00 115.33 255.50 118.33 255.50 127.60M298.08 85.07C298.08 94.33 295.58 97.33 295.98 100.73C296.28 102.83 297.58 104.33 299.28 103.33C301.08 101.33 302.08 98.83 304.28 98.83C307.68 98.83 310.18 102.13 310.18 106.33C310.18 110.53 307.68 113.83 304.28 113.83C302.08 113.83 301.08 111.33 299.28 109.33C297.58 108.33 296.28 109.83 295.98 111.93C295.58 115.33 298.08 118.33 298.08 127.60M340.67 85.07C340.67 94.33 338.17 97.33 338.57 100.73C338.87 102.83 340.17 104.33 341.87 103.33C343.67 101.33 344.67 98.83 346.87 98.83C350.27 98.83 352.77 102.13 352.77 106.33C352.77 110.53 350.27 113.83 346.87 113.83C344.67 113.83 343.67 111.33 341.87 109.33C340.17 108.33 338.87 109.83 338.57 111.93C338.17 115.33 340.67 118.33 340.67 127.60M383.25 85.07C383.25 94.33 380.75 97.33 381.15 100.73C381.45 102.83 382.75 104.33 384.45 103.33C386.25 101.33 387.25 98.83 389.45 98.83C392.85 98.83 395.35 102.13 395.35 106.33C395.35 110.53 392.85 113.83 389.45 113.83C387.25 113.83 386.25 111.33 384.45 109.33C382.75 108.33 381.45 109.83 381.15 111.93C380.75 115.33 383.25 118.33 383.25 127.60M425.83 85.07C425.83 94.33 423.33 97.33 423.73 100.73C424.03 102.83 425.33 104.33 427.03 103.33C428.83 101.33 429.83 98.83 432.03 98.83C435.43 98.83 437.93 102.13 437.93 106.33C437.93 110.53 435.43 113.83 432.03 113.83C429.83 113.83 428.83 111.33 427.03 109.33C425.33 108.33 424.03 109.83 423.73 111.93C423.33 115.33 425.83 118.33 425.83 127.60M468.42 85.07C468.42 94.33 465.92 97.33 466.32 100.73C466.62 102.83 467.92 104.33 469.62 103.33C471.42 101.33 472.42 98.83 474.62 98.83C478.02 98.83 480.52 102.13 480.52 106.33C480.52 110.53 478.02 113.83 474.62 113.83C472.42 113.83 471.42 111.33 469.62 109.33C467.92 108.33 466.62 109.83 466.32 111.93C465.92 115.33 468.42 118.33 468.42 127.60M42.58 127.60C42.58 136.87 45.08 139.87 44.68 143.27C44.38 145.37 43.08 146.87 41.38 145.87C39.58 143.87 38.58 141.37 36.38 141.37C32.98 141.37 30.48 144.67 30.48 148.87C30.48 153.07 32.98 156.37 36.38 156.37C38.58 156.37 39.58 153.87 41.38 151.87C43.08 150.87 44.38 152.37 44.68 154.47C45.08 157.87 42.58 160.87 42.58 170.13M85.17 127.60C85.17 136.87 87.67 139.87 87.27 143.27C86.97 145.37 85.67 146.87 83.97 145.87C82.17 143.87 81.17 141.37 78.97 141.37C75.57 141.37 73.07 144.67 73.07 148.87C73.07 153.07 75.57 156.37 78.97 156.37C81.17 156.37 82.17 153.87 83.97 151.87C85.67 150.87 86.97 152.37 87.27 154.47C87.67 157.87 85.17 160.87 85.17 170.13M127.75 127.60C127.75 136.87 130.25 139.87 129.85 143.27C129.55 145.37 128.25 146.87 126.55 145.87C124.75 143.87 123.75 141.37 121.55 141.37C118.15 141.37 115.65 144.67 115.65 148.87C115.65 153.07 118.15 156.37 121.55 156.37C123.75 156.37 124.75 153.87 126.55 151.87C128.25 150.87 129.55 152.37 129.85 154.47C130.25 157.87 127.75 160.87 127.75 170.13M170.33 127.60C170.33 136.87 167.83 139.87 168.23 143.27C168.53 145.37 169.83 146.87 171.53 145.87C173.33 143.87 174.33 141.37 176.53 141.37C179.93 141.37 182.43 144.67 182.43 148.87C182.43 153.07 179.93 156.37 176.53 156.37C174.33 156.37 173.33 153.87 171.53 151.87C169.83 150.87 168.53 152.37 168.23 154.47C167.83 157.87 170.33 160.87 170.33 170.13M212.92 127.60C212.92 136.87 210.42 139.87 210.82 143.27C211.12 145.37 212.42 146.87 214.12 145.87C215.92 143.87 216.92 141.37 219.12 141.37C222.52 141.37 225.02 144.67 225.02 148.87C225.02 153.07 222.52 156.37 219.12 156.37C216.92 156.37 215.92 153.87 214.12 151.87C212.42 150.87 211.12 152.37 210.82 154.47C210.42 157.87 212.92 160.87 212.92 170.13M255.50 127.60C255.50 136.87 258.00 139.87 257.60 143.27C257.30 145.37 256.00 146.87 254.30 145.87C252.50 143.87 251.50 141.37 249.30 141.37C245.90 141.37 243.40 144.67 243.40 148.87C243.40 153.07 245.90 156.37 249.30 156.37C251.50 156.37 252.50 153.87 254.30 151.87C256.00 150.87 257.30 152.37 257.60 154.47C258.00 157.87 255.50 160.87 255.50 170.13M298.08 127.60C298.08 136.87 295.58 139.87 295.98 143.27C296.28 145.37 297.58 146.87 299.28 145.87C301.08 143.87 302.08 141.37 304.28 141.37C307.68 141.37 310.18 144.67 310.18 148.87C310.18 153.07 307.68 156.37 304.28 156.37C302.08 156.37 301.08 153.87 299.28 151.87C297.58 150.87 296.28 152.37 295.98 154.47C295.58 157.87 298.08 160.87 298.08 170.13M340.67 127.60C340.67 136.87 338.17 139.87 338.57 143.27C338.87 145.37 340.17 146.87 341.87 145.87C343.67 143.87 344.67 141.37 346.87 141.37C350.27 141.37 352.77 144.67 352.77 148.87C352.77 153.07 350.27 156.37 346.87 156.37C344.67 156.37 343.67 153.87 341.87 151.87C340.17 150.87 338.87 152.37 338.57 154.47C338.17 157.87 340.67 160.87 340.67 170.13M383.25 127.60C383.25 136.87 385.75 139.87 385.35 143.27C385.05 145.37 383.75 146.87 382.05 145.87C380.25 143.87 379.25 141.37 377.05 141.37C373.65 141.37 371.15 144.67 371.15 148.87C371.15 153.07 373.65 156.37 377.05 156.37C379.25 156.37 380.25 153.87 382.05 151.87C383.75 150.87 385.05 152.37 385.35 154.47C385.75 157.87 383.25 160.87 383.25 170.13M425.83 127.60C425.83 136.87 428.33 139.87 427.93 143.27C427.63 145.37 426.33 146.87 424.63 145.87C422.83 143.87 421.83 141.37 419.63 141.37C416.23 141.37 413.73 144.67 413.73 148.87C413.73 153.07 416.23 156.37 419.63 156.37C421.83 156.37 422.83 153.87 424.63 151.87C426.33 150.87 427.63 152.37 427.93 154.47C428.33 157.87 425.83 160.87 425.83 170.13M468.42 127.60C468.42 136.87 465.92 139.87 466.32 143.27C466.62 145.37 467.92 146.87 469.62 145.87C471.42 143.87 472.42 141.37 474.62 141.37C478.02 141.37 480.52 144.67 480.52 148.87C480.52 153.07 478.02 156.37 474.62 156.37C472.42 156.37 471.42 153.87 469.62 151.87C467.92 150.87 466.62 152.37 466.32 154.47C465.92 157.87 468.42 160.87 468.42 170.13M42.58 170.13C42.58 179.40 40.08 182.40 40.48 185.80C40.78 187.90 42.08 189.40 43.78 188.40C45.58 186.40 46.58 183.90 48.78 183.90C52.18 183.90 54.68 187.20 54.68 191.40C54.68 195.60 52.18 198.90 48.78 198.90C46.58 198.90 45.58 196.40 43.78 194.40C42.08 193.40 40.78 194.90 40.48 197.00C40.08 200.40 42.58 203.40 42.58 212.67M85.17 170.13C85.17 179.40 87.67 182.40 87.27 185.80C86.97 187.90 85.67 189.40 83.97 188.40C82.17 186.40 81.17 183.90 78.97 183.90C75.57 183.90 73.07 187.20 73.07 191.40C73.07 195.60 75.57 198.90 78.97 198.90C81.17 198.90 82.17 196.40 83.97 194.40C85.67 193.40 86.97 194.90 87.27 197.00C87.67 200.40 85.17 203.40 85.17 212.67M127.75 170.13C127.75 179.40 125.25 182.40 125.65 185.80C125.95 187.90 127.25 189.40 128.95 188.40C130.75 186.40 131.75 183.90 133.95 183.90C137.35 183.90 139.85 187.20 139.85 191.40C139.85 195.60 137.35 198.90 133.95 198.90C131.75 198.90 130.75 196.40 128.95 194.40C127.25 193.40 125.95 194.90 125.65 197.00C125.25 200.40 127.75 203.40 127.75 212.67M170.33 170.13C170.33 179.40 172.83 182.40 172.43 185.80C172.13 187.90 170.83 189.40 169.13 188.40C167.33 186.40 166.33 183.90 164.13 183.90C160.73 183.90 158.23 187.20 158.23 191.40C158.23 195.60 160.73 198.90 164.13 198.90C166.33 198.90 167.33 196.40 169.13 194.40C170.83 193.40 172.13 194.90 172.43 197.00C172.83 200.40 170.33 203.40 170.33 212.67M212.92 170.13C212.92 179.40 215.42 182.40 215.02 185.80C214.72 187.90 213.42 189.40 211.72 188.40C209.92 186.40 208.92 183.90 206.72 183.90C203.32 183.90 200.82 187.20 200.82 191.40C200.82 195.60 203.32 198.90 206.72 198.90C208.92 198.90 209.92 196.40 211.72 194.40C213.42 193.40 214.72 194.90 215.02 197.00C215.42 200.40 212.92 203.40 212.92 212.67M255.50 170.13C255.50 179.40 258.00 182.40 257.60 185.80C257.30 187.90 256.00 189.40 254.30 188.40C252.50 186.40 251.50 183.90 249.30 183.90C245.90 183.90 243.40 187.20 243.40 191.40C243.40 195.60 245.90 198.90 249.30 198.90C251.50 198.90 252.50 196.40 254.30 194.40C256.00 193.40 257.30 194.90 257.60 197.00C258.00 200.40 255.50 203.40 255.50 212.67M298.08 170.13C298.08 179.40 300.58 182.40 300.18 185.80C299.88 187.90 298.58 189.40 296.88 188.40C295.08 186.40 294.08 183.90 291.88 183.90C288.48 183.90 285.98 187.20 285.98 191.40C285.98 195.60 288.48 198.90 291.88 198.90C294.08 198.90 295.08 196.40 296.88 194.40C298.58 193.40 299.88 194.90 300.18 197.00C300.58 200.40 298.08 203.40 298.08 212.67M340.67 170.13C340.67 179.40 343.17 182.40 342.77 185.80C342.47 187.90 341.17 189.40 339.47 188.40C337.67 186.40 336.67 183.90 334.47 183.90C331.07 183.90 328.57 187.20 328.57 191.40C328.57 195.60 331.07 198.90 334.47 198.90C336.67 198.90 337.67 196.40 339.47 194.40C341.17 193.40 342.47 194.90 342.77 197.00C343.17 200.40 340.67 203.40 340.67 212.67M383.25 170.13C383.25 179.40 385.75 182.40 385.35 185.80C385.05 187.90 383.75 189.40 382.05 188.40C380.25 186.40 379.25 183.90 377.05 183.90C373.65 183.90 371.15 187.20 371.15 191.40C371.15 195.60 373.65 198.90 377.05 198.90C379.25 198.90 380.25 196.40 382.05 194.40C383.75 193.40 385.05 194.90 385.35 197.00C385.75 200.40 383.25 203.40 383.25 212.67M425.83 170.13C425.83 179.40 423.33 182.40 423.73 185.80C424.03 187.90 425.33 189.40 427.03 188.40C428.83 186.40 429.83 183.90 432.03 183.90C435.43 183.90 437.93 187.20 437.93 191.40C437.93 195.60 435.43 198.90 432.03 198.90C429.83 198.90 428.83 196.40 427.03 194.40C425.33 193.40 424.03 194.90 423.73 197.00C423.33 200.40 425.83 203.40 425.83 212.67M468.42 170.13C468.42 179.40 470.92 182.40 470.52 185.80C470.22 187.90 468.92 189.40 467.22 188.40C465.42 186.40 464.42 183.90 462.22 183.90C458.82 183.90 456.32 187.20 456.32 191.40C456.32 195.60 458.82 198.90 462.22 198.90C464.42 198.90 465.42 196.40 467.22 194.40C468.92 193.40 470.22 194.90 470.52 197.00C470.92 200.40 468.42 203.40 468.42 212.67M42.58 212.67C42.58 221.93 40.08 224.93 40.48 228.33C40.78 230.43 42.08 231.93 43.78 230.93C45.58 228.93 46.58 226.43 48.78 226.43C52.18 226.43 54.68 229.73 54.68 233.93C54.68 238.13 52.18 241.43 48.78 241.43C46.58 241.43 45.58 238.93 43.78 236.93C42.08 235.93 40.78 237.43 40.48 239.53C40.08 242.93 42.58 245.93 42.58 255.20M85.17 212.67C85.17 221.93 87.67 224.93 87.27 228.33C86.97 230.43 85.67 231.93 83.97 230.93C82.17 228.93 81.17 226.43 78.97 226.43C75.57 226.43 73.07 229.73 73.07 233.93C73.07 238.13 75.57 241.43 78.97 241.43C81.17 241.43 82.17 238.93 83.97 236.93C85.67 235.93 86.97 237.43 87.27 239.53C87.67 242.93 85.17 245.93 85.17 255.20M127.75 212.67C127.75 221.93 125.25 224.93 125.65 228.33C125.95 230.43 127.25 231.93 128.95 230.93C130.75 228.93 131.75 226.43 133.95 226.43C137.35 226.43 139.85 229.73 139.85 233.93C139.85 238.13 137.35 241.43 133.95 241.43C131.75 241.43 130.75 238.93 128.95 236.93C127.25 235.93 125.95 237.43 125.65 239.53C125.25 242.93 127.75 245.93 127.75 255.20M170.33 212.67C170.33 221.93 172.83 224.93 172.43 228.33C172.13 230.43 170.83 231.93 169.13 230.93C167.33 228.93 166.33 226.43 164.13 226.43C160.73 226.43 158.23 229.73 158.23 233.93C158.23 238.13 160.73 241.43 164.13 241.43C166.33 241.43 167.33 238.93 169.13 236.93C170.83 235.93 172.13 237.43 172.43 239.53C172.83 242.93 170.33 245.93 170.33 255.20M212.92 212.67C212.92 221.93 215.42 224.93 215.02 228.33C214.72 230.43 213.42 231.93 211.72 230.93C209.92 228.93 208.92 226.43 206.72 226.43C203.32 226.43 200.82 229.73 200.82 233.93C200.82 238.13 203.32 241.43 206.72 241.43C208.92 241.43 209.92 238.93 211.72 236.93C213.42 235.93 214.72 237.43 215.02 239.53C215.42 242.93 212.92 245.93 212.92 255.20M255.50 212.67C255.50 221.93 253.00 224.93 253.40 228.33C253.70 230.43 255.00 231.93 256.70 230.93C258.50 228.93 259.50 226.43 261.70 226.43C265.10 226.43 267.60 229.73 267.60 233.93C267.60 238.13 265.10 241.43 261.70 241.43C259.50 241.43 258.50 238.93 256.70 236.93C255.00 235.93 253.70 237.43 253.40 239.53C253.00 242.93 255.50 245.93 255.50 255.20M298.08 212.67C298.08 221.93 295.58 224.93 295.98 228.33C296.28 230.43 297.58 231.93 299.28 230.93C301.08 228.93 302.08 226.43 304.28 226.43C307.68 226.43 310.18 229.73 310.18 233.93C310.18 238.13 307.68 241.43 304.28 241.43C302.08 241.43 301.08 238.93 299.28 236.93C297.58 235.93 296.28 237.43 295.98 239.53C295.58 242.93 298.08 245.93 298.08 255.20M340.67 212.67C340.67 221.93 343.17 224.93 342.77 228.33C342.47 230.43 341.17 231.93 339.47 230.93C337.67 228.93 336.67 226.43 334.47 226.43C331.07 226.43 328.57 229.73 328.57 233.93C328.57 238.13 331.07 241.43 334.47 241.43C336.67 241.43 337.67 238.93 339.47 236.93C341.17 235.93 342.47 237.43 342.77 239.53C343.17 242.93 340.67 245.93 340.67 255.20M383.25 212.67C383.25 221.93 380.75 224.93 381.15 228.33C381.45 230.43 382.75 231.93 384.45 230.93C386.25 228.93 387.25 226.43 389.45 226.43C392.85 226.43 395.35 229.73 395.35 233.93C395.35 238.13 392.85 241.43 389.45 241.43C387.25 241.43 386.25 238.93 384.45 236.93C382.75 235.93 381.45 237.43 381.15 239.53C380.75 242.93 383.25 245.93 383.25 255.20M425.83 212.67C425.83 221.93 428.33 224.93 427.93 228.33C427.63 230.43 426.33 231.93 424.63 230.93C422.83 228.93 421.83 226.43 419.63 226.43C416.23 226.43 413.73 229.73 413.73 233.93C413.73 238.13 416.23 241.43 419.63 241.43C421.83 241.43 422.83 238.93 424.63 236.93C426.33 235.93 427.63 237.43 427.93 239.53C428.33 242.93 425.83 245.93 425.83 255.20M468.42 212.67C468.42 221.93 470.92 224.93 470.52 228.33C470.22 230.43 468.92 231.93 467.22 230.93C465.42 228.93 464.42 226.43 462.22 226.43C458.82 226.43 456.32 229.73 456.32 233.93C456.32 238.13 458.82 241.43 462.22 241.43C464.42 241.43 465.42 238.93 467.22 236.93C468.92 235.93 470.22 237.43 470.52 239.53C470.92 242.93 468.42 245.93 468.42 255.20M42.58 255.20C42.58 264.47 40.08 267.47 40.48 270.87C40.78 272.97 42.08 274.47 43.78 273.47C45.58 271.47 46.58 268.97 48.78 268.97C52.18 268.97 54.68 272.27 54.68 276.47C54.68 280.67 52.18 283.97 48.78 283.97C46.58 283.97 45.58 281.47 43.78 279.47C42.08 278.47 40.78 279.97 40.48 282.07C40.08 285.47 42.58 288.47 42.58 297.73M85.17 255.20C85.17 264.47 87.67 267.47 87.27 270.87C86.97 272.97 85.67 274.47 83.97 273.47C82.17 271.47 81.17 268.97 78.97 268.97C75.57 268.97 73.07 272.27 73.07 276.47C73.07 280.67 75.57 283.97 78.97 283.97C81.17 283.97 82.17 281.47 83.97 279.47C85.67 278.47 86.97 279.97 87.27 282.07C87.67 285.47 85.17 288.47 85.17 297.73M127.75 255.20C127.75 264.47 130.25 267.47 129.85 270.87C129.55 272.97 128.25 274.47 126.55 273.47C124.75 271.47 123.75 268.97 121.55 268.97C118.15 268.97 115.65 272.27 115.65 276.47C115.65 280.67 118.15 283.97 121.55 283.97C123.75 283.97 124.75 281.47 126.55 279.47C128.25 278.47 129.55 279.97 129.85 282.07C130.25 285.47 127.75 288.47 127.75 297.73M170.33 255.20C170.33 264.47 167.83 267.47 168.23 270.87C168.53 272.97 169.83 274.47 171.53 273.47C173.33 271.47 174.33 268.97 176.53 268.97C179.93 268.97 182.43 272.27 182.43 276.47C182.43 280.67 179.93 283.97 176.53 283.97C174.33 283.97 173.33 281.47 171.53 279.47C169.83 278.47 168.53 279.97 168.23 282.07C167.83 285.47 170.33 288.47 170.33 297.73M212.92 255.20C212.92 264.47 210.42 267.47 210.82 270.87C211.12 272.97 212.42 274.47 214.12 273.47C215.92 271.47 216.92 268.97 219.12 268.97C222.52 268.97 225.02 272.27 225.02 276.47C225.02 280.67 222.52 283.97 219.12 283.97C216.92 283.97 215.92 281.47 214.12 279.47C212.42 278.47 211.12 279.97 210.82 282.07C210.42 285.47 212.92 288.47 212.92 297.73M255.50 255.20C255.50 264.47 258.00 267.47 257.60 270.87C257.30 272.97 256.00 274.47 254.30 273.47C252.50 271.47 251.50 268.97 249.30 268.97C245.90 268.97 243.40 272.27 243.40 276.47C243.40 280.67 245.90 283.97 249.30 283.97C251.50 283.97 252.50 281.47 254.30 279.47C256.00 278.47 257.30 279.97 257.60 282.07C258.00 285.47 255.50 288.47 255.50 297.73M298.08 255.20C298.08 264.47 295.58 267.47 295.98 270.87C296.28 272.97 297.58 274.47 299.28 273.47C301.08 271.47 302.08 268.97 304.28 268.97C307.68 268.97 310.18 272.27 310.18 276.47C310.18 280.67 307.68 283.97 304.28 283.97C302.08 283.97 301.08 281.47 299.28 279.47C297.58 278.47 296.28 279.97 295.98 282.07C295.58 285.47 298.08 288.47 298.08 297.73M340.67 255.20C340.67 264.47 343.17 267.47 342.77 270.87C342.47 272.97 341.17 274.47 339.47 273.47C337.67 271.47 336.67 268.97 334.47 268.97C331.07 268.97 328.57 272.27 328.57 276.47C328.57 280.67 331.07 283.97 334.47 283.97C336.67 283.97 337.67 281.47 339.47 279.47C341.17 278.47 342.47 279.97 342.77 282.07C343.17 285.47 340.67 288.47 340.67 297.73M383.25 255.20C383.25 264.47 380.75 267.47 381.15 270.87C381.45 272.97 382.75 274.47 384.45 273.47C386.25 271.47 387.25 268.97 389.45 268.97C392.85 268.97 395.35 272.27 395.35 276.47C395.35 280.67 392.85 283.97 389.45 283.97C387.25 283.97 386.25 281.47 384.45 279.47C382.75 278.47 381.45 279.97 381.15 282.07C380.75 285.47 383.25 288.47 383.25 297.73M425.83 255.20C425.83 264.47 428.33 267.47 427.93 270.87C427.63 272.97 426.33 274.47 424.63 273.47C422.83 271.47 421.83 268.97 419.63 268.97C416.23 268.97 413.73 272.27 413.73 276.47C413.73 280.67 416.23 283.97 419.63 283.97C421.83 283.97 422.83 281.47 424.63 279.47C426.33 278.47 427.63 279.97 427.93 282.07C428.33 285.47 425.83 288.47 425.83 297.73M468.42 255.20C468.42 264.47 470.92 267.47 470.52 270.87C470.22 272.97 468.92 274.47 467.22 273.47C465.42 271.47 464.42 268.97 462.22 268.97C458.82 268.97 456.32 272.27 456.32 276.47C456.32 280.67 458.82 283.97 462.22 283.97C464.42 283.97 465.42 281.47 467.22 279.47C468.92 278.47 470.22 279.97 470.52 282.07C470.92 285.47 468.42 288.47 468.42 297.73M42.58 297.73C42.58 307.00 45.08 310.00 44.68 313.40C44.38 315.50 43.08 317.00 41.38 316.00C39.58 314.00 38.58 311.50 36.38 311.50C32.98 311.50 30.48 314.80 30.48 319.00C30.48 323.20 32.98 326.50 36.38 326.50C38.58 326.50 39.58 324.00 41.38 322.00C43.08 321.00 44.38 322.50 44.68 324.60C45.08 328.00 42.58 331.00 42.58 340.27M85.17 297.73C85.17 307.00 87.67 310.00 87.27 313.40C86.97 315.50 85.67 317.00 83.97 316.00C82.17 314.00 81.17 311.50 78.97 311.50C75.57 311.50 73.07 314.80 73.07 319.00C73.07 323.20 75.57 326.50 78.97 326.50C81.17 326.50 82.17 324.00 83.97 322.00C85.67 321.00 86.97 322.50 87.27 324.60C87.67 328.00 85.17 331.00 85.17 340.27M127.75 297.73C127.75 307.00 125.25 310.00 125.65 313.40C125.95 315.50 127.25 317.00 128.95 316.00C130.75 314.00 131.75 311.50 133.95 311.50C137.35 311.50 139.85 314.80 139.85 319.00C139.85 323.20 137.35 326.50 133.95 326.50C131.75 326.50 130.75 324.00 128.95 322.00C127.25 321.00 125.95 322.50 125.65 324.60C125.25 328.00 127.75 331.00 127.75 340.27M170.33 297.73C170.33 307.00 167.83 310.00 168.23 313.40C168.53 315.50 169.83 317.00 171.53 316.00C173.33 314.00 174.33 311.50 176.53 311.50C179.93 311.50 182.43 314.80 182.43 319.00C182.43 323.20 179.93 326.50 176.53 326.50C174.33 326.50 173.33 324.00 171.53 322.00C169.83 321.00 168.53 322.50 168.23 324.60C167.83 328.00 170.33 331.00 170.33 340.27M212.92 297.73C212.92 307.00 215.42 310.00 215.02 313.40C214.72 315.50 213.42 317.00 211.72 316.00C209.92 314.00 208.92 311.50 206.72 311.50C203.32 311.50 200.82 314.80 200.82 319.00C200.82 323.20 203.32 326.50 206.72 326.50C208.92 326.50 209.92 324.00 211.72 322.00C213.42 321.00 214.72 322.50 215.02 324.60C215.42 328.00 212.92 331.00 212.92 340.27M255.50 297.73C255.50 307.00 253.00 310.00 253.40 313.40C253.70 315.50 255.00 317.00 256.70 316.00C258.50 314.00 259.50 311.50 261.70 311.50C265.10 311.50 267.60 314.80 267.60 319.00C267.60 323.20 265.10 326.50 261.70 326.50C259.50 326.50 258.50 324.00 256.70 322.00C255.00 321.00 253.70 322.50 253.40 324.60C253.00 328.00 255.50 331.00 255.50 340.27M298.08 297.73C298.08 307.00 295.58 310.00 295.98 313.40C296.28 315.50 297.58 317.00 299.28 316.00C301.08 314.00 302.08 311.50 304.28 311.50C307.68 311.50 310.18 314.80 310.18 319.00C310.18 323.20 307.68 326.50 304.28 326.50C302.08 326.50 301.08 324.00 299.28 322.00C297.58 321.00 296.28 322.50 295.98 324.60C295.58 328.00 298.08 331.00 298.08 340.27M340.67 297.73C340.67 307.00 343.17 310.00 342.77 313.40C342.47 315.50 341.17 317.00 339.47 316.00C337.67 314.00 336.67 311.50 334.47 311.50C331.07 311.50 328.57 314.80 328.57 319.00C328.57 323.20 331.07 326.50 334.47 326.50C336.67 326.50 337.67 324.00 339.47 322.00C341.17 321.00 342.47 322.50 342.77 324.60C343.17 328.00 340.67 331.00 340.67 340.27M383.25 297.73C383.25 307.00 380.75 310.00 381.15 313.40C381.45 315.50 382.75 317.00 384.45 316.00C386.25 314.00 387.25 311.50 389.45 311.50C392.85 311.50 395.35 314.80 395.35 319.00C395.35 323.20 392.85 326.50 389.45 326.50C387.25 326.50 386.25 324.00 384.45 322.00C382.75 321.00 381.45 322.50 381.15 324.60C380.75 328.00 383.25 331.00 383.25 340.27M425.83 297.73C425.83 307.00 423.33 310.00 423.73 313.40C424.03 315.50 425.33 317.00 427.03 316.00C428.83 314.00 429.83 311.50 432.03 311.50C435.43 311.50 437.93 314.80 437.93 319.00C437.93 323.20 435.43 326.50 432.03 326.50C429.83 326.50 428.83 324.00 427.03 322.00C425.33 321.00 424.03 322.50 423.73 324.60C423.33 328.00 425.83 331.00 425.83 340.27M468.42 297.73C468.42 307.00 465.92 310.00 466.32 313.40C466.62 315.50 467.92 317.00 469.62 316.00C471.42 314.00 472.42 311.50 474.62 311.50C478.02 311.50 480.52 314.80 480.52 319.00C480.52 323.20 478.02 326.50 474.62 326.50C472.42 326.50 471.42 324.00 469.62 322.00C467.92 321.00 466.62 322.50 466.32 324.60C465.92 328.00 468.42 331.00 468.42 340.27M42.58 340.27C42.58 349.53 40.08 352.53 40.48 355.93C40.78 358.03 42.08 359.53 43.78 358.53C45.58 356.53 46.58 354.03 48.78 354.03C52.18 354.03 54.68 357.33 54.68 361.53C54.68 365.73 52.18 369.03 48.78 369.03C46.58 369.03 45.58 366.53 43.78 364.53C42.08 363.53 40.78 365.03 40.48 367.13C40.08 370.53 42.58 373.53 42.58 382.80M85.17 340.27C85.17 349.53 82.67 352.53 83.07 355.93C83.37 358.03 84.67 359.53 86.37 358.53C88.17 356.53 89.17 354.03 91.37 354.03C94.77 354.03 97.27 357.33 97.27 361.53C97.27 365.73 94.77 369.03 91.37 369.03C89.17 369.03 88.17 366.53 86.37 364.53C84.67 363.53 83.37 365.03 83.07 367.13C82.67 370.53 85.17 373.53 85.17 382.80M127.75 340.27C127.75 349.53 130.25 352.53 129.85 355.93C129.55 358.03 128.25 359.53 126.55 358.53C124.75 356.53 123.75 354.03 121.55 354.03C118.15 354.03 115.65 357.33 115.65 361.53C115.65 365.73 118.15 369.03 121.55 369.03C123.75 369.03 124.75 366.53 126.55 364.53C128.25 363.53 129.55 365.03 129.85 367.13C130.25 370.53 127.75 373.53 127.75 382.80M170.33 340.27C170.33 349.53 167.83 352.53 168.23 355.93C168.53 358.03 169.83 359.53 171.53 358.53C173.33 356.53 174.33 354.03 176.53 354.03C179.93 354.03 182.43 357.33 182.43 361.53C182.43 365.73 179.93 369.03 176.53 369.03C174.33 369.03 173.33 366.53 171.53 364.53C169.83 363.53 168.53 365.03 168.23 367.13C167.83 370.53 170.33 373.53 170.33 382.80M212.92 340.27C212.92 349.53 210.42 352.53 210.82 355.93C211.12 358.03 212.42 359.53 214.12 358.53C215.92 356.53 216.92 354.03 219.12 354.03C222.52 354.03 225.02 357.33 225.02 361.53C225.02 365.73 222.52 369.03 219.12 369.03C216.92 369.03 215.92 366.53 214.12 364.53C212.42 363.53 211.12 365.03 210.82 367.13C210.42 370.53 212.92 373.53 212.92 382.80M255.50 340.27C255.50 349.53 253.00 352.53 253.40 355.93C253.70 358.03 255.00 359.53 256.70 358.53C258.50 356.53 259.50 354.03 261.70 354.03C265.10 354.03 267.60 357.33 267.60 361.53C267.60 365.73 265.10 369.03 261.70 369.03C259.50 369.03 258.50 366.53 256.70 364.53C255.00 363.53 253.70 365.03 253.40 367.13C253.00 370.53 255.50 373.53 255.50 382.80M298.08 340.27C298.08 349.53 300.58 352.53 300.18 355.93C299.88 358.03 298.58 359.53 296.88 358.53C295.08 356.53 294.08 354.03 291.88 354.03C288.48 354.03 285.98 357.33 285.98 361.53C285.98 365.73 288.48 369.03 291.88 369.03C294.08 369.03 295.08 366.53 296.88 364.53C298.58 363.53 299.88 365.03 300.18 367.13C300.58 370.53 298.08 373.53 298.08 382.80M340.67 340.27C340.67 349.53 338.17 352.53 338.57 355.93C338.87 358.03 340.17 359.53 341.87 358.53C343.67 356.53 344.67 354.03 346.87 354.03C350.27 354.03 352.77 357.33 352.77 361.53C352.77 365.73 350.27 369.03 346.87 369.03C344.67 369.03 343.67 366.53 341.87 364.53C340.17 363.53 338.87 365.03 338.57 367.13C338.17 370.53 340.67 373.53 340.67 382.80M383.25 340.27C383.25 349.53 385.75 352.53 385.35 355.93C385.05 358.03 383.75 359.53 382.05 358.53C380.25 356.53 379.25 354.03 377.05 354.03C373.65 354.03 371.15 357.33 371.15 361.53C371.15 365.73 373.65 369.03 377.05 369.03C379.25 369.03 380.25 366.53 382.05 364.53C383.75 363.53 385.05 365.03 385.35 367.13C385.75 370.53 383.25 373.53 383.25 382.80M425.83 340.27C425.83 349.53 423.33 352.53 423.73 355.93C424.03 358.03 425.33 359.53 427.03 358.53C428.83 356.53 429.83 354.03 432.03 354.03C435.43 354.03 437.93 357.33 437.93 361.53C437.93 365.73 435.43 369.03 432.03 369.03C429.83 369.03 428.83 366.53 427.03 364.53C425.33 363.53 424.03 365.03 423.73 367.13C423.33 370.53 425.83 373.53 425.83 382.80M468.42 340.27C468.42 349.53 470.92 352.53 470.52 355.93C470.22 358.03 468.92 359.53 467.22 358.53C465.42 356.53 464.42 354.03 462.22 354.03C458.82 354.03 456.32 357.33 456.32 361.53C456.32 365.73 458.82 369.03 462.22 369.03C464.42 369.03 465.42 366.53 467.22 364.53C468.92 363.53 470.22 365.03 470.52 367.13C470.92 370.53 468.42 373.53 468.42 382.80M42.58 382.80C42.58 392.07 40.08 395.07 40.48 398.47C40.78 400.57 42.08 402.07 43.78 401.07C45.58 399.07 46.58 396.57 48.78 396.57C52.18 396.57 54.68 399.87 54.68 404.07C54.68 408.27 52.18 411.57 48.78 411.57C46.58 411.57 45.58 409.07 43.78 407.07C42.08 406.07 40.78 407.57 40.48 409.67C40.08 413.07 42.58 416.07 42.58 425.33M85.17 382.80C85.17 392.07 82.67 395.07 83.07 398.47C83.37 400.57 84.67 402.07 86.37 401.07C88.17 399.07 89.17 396.57 91.37 396.57C94.77 396.57 97.27 399.87 97.27 404.07C97.27 408.27 94.77 411.57 91.37 411.57C89.17 411.57 88.17 409.07 86.37 407.07C84.67 406.07 83.37 407.57 83.07 409.67C82.67 413.07 85.17 416.07 85.17 425.33M127.75 382.80C127.75 392.07 130.25 395.07 129.85 398.47C129.55 400.57 128.25 402.07 126.55 401.07C124.75 399.07 123.75 396.57 121.55 396.57C118.15 396.57 115.65 399.87 115.65 404.07C115.65 408.27 118.15 411.57 121.55 411.57C123.75 411.57 124.75 409.07 126.55 407.07C128.25 406.07 129.55 407.57 129.85 409.67C130.25 413.07 127.75 416.07 127.75 425.33M170.33 382.80C170.33 392.07 167.83 395.07 168.23 398.47C168.53 400.57 169.83 402.07 171.53 401.07C173.33 399.07 174.33 396.57 176.53 396.57C179.93 396.57 182.43 399.87 182.43 404.07C182.43 408.27 179.93 411.57 176.53 411.57C174.33 411.57 173.33 409.07 171.53 407.07C169.83 406.07 168.53 407.57 168.23 409.67C167.83 413.07 170.33 416.07 170.33 425.33M212.92 382.80C212.92 392.07 215.42 395.07 215.02 398.47C214.72 400.57 213.42 402.07 211.72 401.07C209.92 399.07 208.92 396.57 206.72 396.57C203.32 396.57 200.82 399.87 200.82 404.07C200.82 408.27 203.32 411.57 206.72 411.57C208.92 411.57 209.92 409.07 211.72 407.07C213.42 406.07 214.72 407.57 215.02 409.67C215.42 413.07 212.92 416.07 212.92 425.33M255.50 382.80C255.50 392.07 253.00 395.07 253.40 398.47C253.70 400.57 255.00 402.07 256.70 401.07C258.50 399.07 259.50 396.57 261.70 396.57C265.10 396.57 267.60 399.87 267.60 404.07C267.60 408.27 265.10 411.57 261.70 411.57C259.50 411.57 258.50 409.07 256.70 407.07C255.00 406.07 253.70 407.57 253.40 409.67C253.00 413.07 255.50 416.07 255.50 425.33M298.08 382.80C298.08 392.07 295.58 395.07 295.98 398.47C296.28 400.57 297.58 402.07 299.28 401.07C301.08 399.07 302.08 396.57 304.28 396.57C307.68 396.57 310.18 399.87 310.18 404.07C310.18 408.27 307.68 411.57 304.28 411.57C302.08 411.57 301.08 409.07 299.28 407.07C297.58 406.07 296.28 407.57 295.98 409.67C295.58 413.07 298.08 416.07 298.08 425.33M340.67 382.80C340.67 392.07 338.17 395.07 338.57 398.47C338.87 400.57 340.17 402.07 341.87 401.07C343.67 399.07 344.67 396.57 346.87 396.57C350.27 396.57 352.77 399.87 352.77 404.07C352.77 408.27 350.27 411.57 346.87 411.57C344.67 411.57 343.67 409.07 341.87 407.07C340.17 406.07 338.87 407.57 338.57 409.67C338.17 413.07 340.67 416.07 340.67 425.33M383.25 382.80C383.25 392.07 385.75 395.07 385.35 398.47C385.05 400.57 383.75 402.07 382.05 401.07C380.25 399.07 379.25 396.57 377.05 396.57C373.65 396.57 371.15 399.87 371.15 404.07C371.15 408.27 373.65 411.57 377.05 411.57C379.25 411.57 380.25 409.07 382.05 407.07C383.75 406.07 385.05 407.57 385.35 409.67C385.75 413.07 383.25 416.07 383.25 425.33M425.83 382.80C425.83 392.07 423.33 395.07 423.73 398.47C424.03 400.57 425.33 402.07 427.03 401.07C428.83 399.07 429.83 396.57 432.03 396.57C435.43 396.57 437.93 399.87 437.93 404.07C437.93 408.27 435.43 411.57 432.03 411.57C429.83 411.57 428.83 409.07 427.03 407.07C425.33 406.07 424.03 407.57 423.73 409.67C423.33 413.07 425.83 416.07 425.83 425.33M468.42 382.80C468.42 392.07 470.92 395.07 470.52 398.47C470.22 400.57 468.92 402.07 467.22 401.07C465.42 399.07 464.42 396.57 462.22 396.57C458.82 396.57 456.32 399.87 456.32 404.07C456.32 408.27 458.82 411.57 462.22 411.57C464.42 411.57 465.42 409.07 467.22 407.07C468.92 406.07 470.22 407.57 470.52 409.67C470.92 413.07 468.42 416.07 468.42 425.33M42.58 425.33C42.58 434.60 45.08 437.60 44.68 441.00C44.38 443.10 43.08 444.60 41.38 443.60C39.58 441.60 38.58 439.10 36.38 439.10C32.98 439.10 30.48 442.40 30.48 446.60C30.48 450.80 32.98 454.10 36.38 454.10C38.58 454.10 39.58 451.60 41.38 449.60C43.08 448.60 44.38 450.10 44.68 452.20C45.08 455.60 42.58 458.60 42.58 467.87M85.17 425.33C85.17 434.60 87.67 437.60 87.27 441.00C86.97 443.10 85.67 444.60 83.97 443.60C82.17 441.60 81.17 439.10 78.97 439.10C75.57 439.10 73.07 442.40 73.07 446.60C73.07 450.80 75.57 454.10 78.97 454.10C81.17 454.10 82.17 451.60 83.97 449.60C85.67 448.60 86.97 450.10 87.27 452.20C87.67 455.60 85.17 458.60 85.17 467.87M127.75 425.33C127.75 434.60 130.25 437.60 129.85 441.00C129.55 443.10 128.25 444.60 126.55 443.60C124.75 441.60 123.75 439.10 121.55 439.10C118.15 439.10 115.65 442.40 115.65 446.60C115.65 450.80 118.15 454.10 121.55 454.10C123.75 454.10 124.75 451.60 126.55 449.60C128.25 448.60 129.55 450.10 129.85 452.20C130.25 455.60 127.75 458.60 127.75 467.87M170.33 425.33C170.33 434.60 172.83 437.60 172.43 441.00C172.13 443.10 170.83 444.60 169.13 443.60C167.33 441.60 166.33 439.10 164.13 439.10C160.73 439.10 158.23 442.40 158.23 446.60C158.23 450.80 160.73 454.10 164.13 454.10C166.33 454.10 167.33 451.60 169.13 449.60C170.83 448.60 172.13 450.10 172.43 452.20C172.83 455.60 170.33 458.60 170.33 467.87M212.92 425.33C212.92 434.60 215.42 437.60 215.02 441.00C214.72 443.10 213.42 444.60 211.72 443.60C209.92 441.60 208.92 439.10 206.72 439.10C203.32 439.10 200.82 442.40 200.82 446.60C200.82 450.80 203.32 454.10 206.72 454.10C208.92 454.10 209.92 451.60 211.72 449.60C213.42 448.60 214.72 450.10 215.02 452.20C215.42 455.60 212.92 458.60 212.92 467.87M255.50 425.33C255.50 434.60 253.00 437.60 253.40 441.00C253.70 443.10 255.00 444.60 256.70 443.60C258.50 441.60 259.50 439.10 261.70 439.10C265.10 439.10 267.60 442.40 267.60 446.60C267.60 450.80 265.10 454.10 261.70 454.10C259.50 454.10 258.50 451.60 256.70 449.60C255.00 448.60 253.70 450.10 253.40 452.20C253.00 455.60 255.50 458.60 255.50 467.87M298.08 425.33C298.08 434.60 300.58 437.60 300.18 441.00C299.88 443.10 298.58 444.60 296.88 443.60C295.08 441.60 294.08 439.10 291.88 439.10C288.48 439.10 285.98 442.40 285.98 446.60C285.98 450.80 288.48 454.10 291.88 454.10C294.08 454.10 295.08 451.60 296.88 449.60C298.58 448.60 299.88 450.10 300.18 452.20C300.58 455.60 298.08 458.60 298.08 467.87M340.67 425.33C340.67 434.60 343.17 437.60 342.77 441.00C342.47 443.10 341.17 444.60 339.47 443.60C337.67 441.60 336.67 439.10 334.47 439.10C331.07 439.10 328.57 442.40 328.57 446.60C328.57 450.80 331.07 454.10 334.47 454.10C336.67 454.10 337.67 451.60 339.47 449.60C341.17 448.60 342.47 450.10 342.77 452.20C343.17 455.60 340.67 458.60 340.67 467.87M383.25 425.33C383.25 434.60 385.75 437.60 385.35 441.00C385.05 443.10 383.75 444.60 382.05 443.60C380.25 441.60 379.25 439.10 377.05 439.10C373.65 439.10 371.15 442.40 371.15 446.60C371.15 450.80 373.65 454.10 377.05 454.10C379.25 454.10 380.25 451.60 382.05 449.60C383.75 448.60 385.05 450.10 385.35 452.20C385.75 455.60 383.25 458.60 383.25 467.87M425.83 425.33C425.83 434.60 428.33 437.60 427.93 441.00C427.63 443.10 426.33 444.60 424.63 443.60C422.83 441.60 421.83 439.10 419.63 439.10C416.23 439.10 413.73 442.40 413.73 446.60C413.73 450.80 416.23 454.10 419.63 454.10C421.83 454.10 422.83 451.60 424.63 449.60C426.33 448.60 427.63 450.10 427.93 452.20C428.33 455.60 425.83 458.60 425.83 467.87M468.42 425.33C468.42 434.60 465.92 437.60 466.32 441.00C466.62 443.10 467.92 444.60 469.62 443.60C471.42 441.60 472.42 439.10 474.62 439.10C478.02 439.10 480.52 442.40 480.52 446.60C480.52 450.80 478.02 454.10 474.62 454.10C472.42 454.10 471.42 451.60 469.62 449.60C467.92 448.60 466.62 450.10 466.32 452.20C465.92 455.60 468.42 458.60 468.42 467.87M42.58 467.87C42.58 477.13 45.08 480.13 44.68 483.53C44.38 485.63 43.08 487.13 41.38 486.13C39.58 484.13 38.58 481.63 36.38 481.63C32.98 481.63 30.48 484.93 30.48 489.13C30.48 493.33 32.98 496.63 36.38 496.63C38.58 496.63 39.58 494.13 41.38 492.13C43.08 491.13 44.38 492.63 44.68 494.73C45.08 498.13 42.58 501.13 42.58 510.40M85.17 467.87C85.17 477.13 87.67 480.13 87.27 483.53C86.97 485.63 85.67 487.13 83.97 486.13C82.17 484.13 81.17 481.63 78.97 481.63C75.57 481.63 73.07 484.93 73.07 489.13C73.07 493.33 75.57 496.63 78.97 496.63C81.17 496.63 82.17 494.13 83.97 492.13C85.67 491.13 86.97 492.63 87.27 494.73C87.67 498.13 85.17 501.13 85.17 510.40M127.75 467.87C127.75 477.13 130.25 480.13 129.85 483.53C129.55 485.63 128.25 487.13 126.55 486.13C124.75 484.13 123.75 481.63 121.55 481.63C118.15 481.63 115.65 484.93 115.65 489.13C115.65 493.33 118.15 496.63 121.55 496.63C123.75 496.63 124.75 494.13 126.55 492.13C128.25 491.13 129.55 492.63 129.85 494.73C130.25 498.13 127.75 501.13 127.75 510.40M170.33 467.87C170.33 477.13 167.83 480.13 168.23 483.53C168.53 485.63 169.83 487.13 171.53 486.13C173.33 484.13 174.33 481.63 176.53 481.63C179.93 481.63 182.43 484.93 182.43 489.13C182.43 493.33 179.93 496.63 176.53 496.63C174.33 496.63 173.33 494.13 171.53 492.13C169.83 491.13 168.53 492.63 168.23 494.73C167.83 498.13 170.33 501.13 170.33 510.40M212.92 467.87C212.92 477.13 215.42 480.13 215.02 483.53C214.72 485.63 213.42 487.13 211.72 486.13C209.92 484.13 208.92 481.63 206.72 481.63C203.32 481.63 200.82 484.93 200.82 489.13C200.82 493.33 203.32 496.63 206.72 496.63C208.92 496.63 209.92 494.13 211.72 492.13C213.42 491.13 214.72 492.63 215.02 494.73C215.42 498.13 212.92 501.13 212.92 510.40M255.50 467.87C255.50 477.13 258.00 480.13 257.60 483.53C257.30 485.63 256.00 487.13 254.30 486.13C252.50 484.13 251.50 481.63 249.30 481.63C245.90 481.63 243.40 484.93 243.40 489.13C243.40 493.33 245.90 496.63 249.30 496.63C251.50 496.63 252.50 494.13 254.30 492.13C256.00 491.13 257.30 492.63 257.60 494.73C258.00 498.13 255.50 501.13 255.50 510.40M298.08 467.87C298.08 477.13 295.58 480.13 295.98 483.53C296.28 485.63 297.58 487.13 299.28 486.13C301.08 484.13 302.08 481.63 304.28 481.63C307.68 481.63 310.18 484.93 310.18 489.13C310.18 493.33 307.68 496.63 304.28 496.63C302.08 496.63 301.08 494.13 299.28 492.13C297.58 491.13 296.28 492.63 295.98 494.73C295.58 498.13 298.08 501.13 298.08 510.40M340.67 467.87C340.67 477.13 338.17 480.13 338.57 483.53C338.87 485.63 340.17 487.13 341.87 486.13C343.67 484.13 344.67 481.63 346.87 481.63C350.27 481.63 352.77 484.93 352.77 489.13C352.77 493.33 350.27 496.63 346.87 496.63C344.67 496.63 343.67 494.13 341.87 492.13C340.17 491.13 338.87 492.63 338.57 494.73C338.17 498.13 340.67 501.13 340.67 510.40M383.25 467.87C383.25 477.13 380.75 480.13 381.15 483.53C381.45 485.63 382.75 487.13 384.45 486.13C386.25 484.13 387.25 481.63 389.45 481.63C392.85 481.63 395.35 484.93 395.35 489.13C395.35 493.33 392.85 496.63 389.45 496.63C387.25 496.63 386.25 494.13 384.45 492.13C382.75 491.13 381.45 492.63 381.15 494.73C380.75 498.13 383.25 501.13 383.25 510.40M425.83 467.87C425.83 477.13 423.33 480.13 423.73 483.53C424.03 485.63 425.33 487.13 427.03 486.13C428.83 484.13 429.83 481.63 432.03 481.63C435.43 481.63 437.93 484.93 437.93 489.13C437.93 493.33 435.43 496.63 432.03 496.63C429.83 496.63 428.83 494.13 427.03 492.13C425.33 491.13 424.03 492.63 423.73 494.73C423.33 498.13 425.83 501.13 425.83 510.40M468.42 467.87C468.42 477.13 465.92 480.13 466.32 483.53C466.62 485.63 467.92 487.13 469.62 486.13C471.42 484.13 472.42 481.63 474.62 481.63C478.02 481.63 480.52 484.93 480.52 489.13C480.52 493.33 478.02 496.63 474.62 496.63C472.42 496.63 471.42 494.13 469.62 492.13C467.92 491.13 466.62 492.63 466.32 494.73C465.92 498.13 468.42 501.13 468.42 510.40M42.58 510.40C42.58 519.67 40.08 522.67 40.48 526.07C40.78 528.17 42.08 529.67 43.78 528.67C45.58 526.67 46.58 524.17 48.78 524.17C52.18 524.17 54.68 527.47 54.68 531.67C54.68 535.87 52.18 539.17 48.78 539.17C46.58 539.17 45.58 536.67 43.78 534.67C42.08 533.67 40.78 535.17 40.48 537.27C40.08 540.67 42.58 543.67 42.58 552.93M85.17 510.40C85.17 519.67 82.67 522.67 83.07 526.07C83.37 528.17 84.67 529.67 86.37 528.67C88.17 526.67 89.17 524.17 91.37 524.17C94.77 524.17 97.27 527.47 97.27 531.67C97.27 535.87 94.77 539.17 91.37 539.17C89.17 539.17 88.17 536.67 86.37 534.67C84.67 533.67 83.37 535.17 83.07 537.27C82.67 540.67 85.17 543.67 85.17 552.93M127.75 510.40C127.75 519.67 130.25 522.67 129.85 526.07C129.55 528.17 128.25 529.67 126.55 528.67C124.75 526.67 123.75 524.17 121.55 524.17C118.15 524.17 115.65 527.47 115.65 531.67C115.65 535.87 118.15 539.17 121.55 539.17C123.75 539.17 124.75 536.67 126.55 534.67C128.25 533.67 129.55 535.17 129.85 537.27C130.25 540.67 127.75 543.67 127.75 552.93M170.33 510.40C170.33 519.67 167.83 522.67 168.23 526.07C168.53 528.17 169.83 529.67 171.53 528.67C173.33 526.67 174.33 524.17 176.53 524.17C179.93 524.17 182.43 527.47 182.43 531.67C182.43 535.87 179.93 539.17 176.53 539.17C174.33 539.17 173.33 536.67 171.53 534.67C169.83 533.67 168.53 535.17 168.23 537.27C167.83 540.67 170.33 543.67 170.33 552.93M212.92 510.40C212.92 519.67 215.42 522.67 215.02 526.07C214.72 528.17 213.42 529.67 211.72 528.67C209.92 526.67 208.92 524.17 206.72 524.17C203.32 524.17 200.82 527.47 200.82 531.67C200.82 535.87 203.32 539.17 206.72 539.17C208.92 539.17 209.92 536.67 211.72 534.67C213.42 533.67 214.72 535.17 215.02 537.27C215.42 540.67 212.92 543.67 212.92 552.93M255.50 510.40C255.50 519.67 258.00 522.67 257.60 526.07C257.30 528.17 256.00 529.67 254.30 528.67C252.50 526.67 251.50 524.17 249.30 524.17C245.90 524.17 243.40 527.47 243.40 531.67C243.40 535.87 245.90 539.17 249.30 539.17C251.50 539.17 252.50 536.67 254.30 534.67C256.00 533.67 257.30 535.17 257.60 537.27C258.00 540.67 255.50 543.67 255.50 552.93M298.08 510.40C298.08 519.67 300.58 522.67 300.18 526.07C299.88 528.17 298.58 529.67 296.88 528.67C295.08 526.67 294.08 524.17 291.88 524.17C288.48 524.17 285.98 527.47 285.98 531.67C285.98 535.87 288.48 539.17 291.88 539.17C294.08 539.17 295.08 536.67 296.88 534.67C298.58 533.67 299.88 535.17 300.18 537.27C300.58 540.67 298.08 543.67 298.08 552.93M340.67 510.40C340.67 519.67 338.17 522.67 338.57 526.07C338.87 528.17 340.17 529.67 341.87 528.67C343.67 526.67 344.67 524.17 346.87 524.17C350.27 524.17 352.77 527.47 352.77 531.67C352.77 535.87 350.27 539.17 346.87 539.17C344.67 539.17 343.67 536.67 341.87 534.67C340.17 533.67 338.87 535.17 338.57 537.27C338.17 540.67 340.67 543.67 340.67 552.93M383.25 510.40C383.25 519.67 385.75 522.67 385.35 526.07C385.05 528.17 383.75 529.67 382.05 528.67C380.25 526.67 379.25 524.17 377.05 524.17C373.65 524.17 371.15 527.47 371.15 531.67C371.15 535.87 373.65 539.17 377.05 539.17C379.25 539.17 380.25 536.67 382.05 534.67C383.75 533.67 385.05 535.17 385.35 537.27C385.75 540.67 383.25 543.67 383.25 552.93M425.83 510.40C425.83 519.67 428.33 522.67 427.93 526.07C427.63 528.17 426.33 529.67 424.63 528.67C422.83 526.67 421.83 524.17 419.63 524.17C416.23 524.17 413.73 527.47 413.73 531.67C413.73 535.87 416.23 539.17 419.63 539.17C421.83 539.17 422.83 536.67 424.63 534.67C426.33 533.67 427.63 535.17 427.93 537.27C428.33 540.67 425.83 543.67 425.83 552.93M468.42 510.40C468.42 519.67 465.92 522.67 466.32 526.07C466.62 528.17 467.92 529.67 469.62 528.67C471.42 526.67 472.42 524.17 474.62 524.17C478.02 524.17 480.52 527.47 480.52 531.67C480.52 535.87 478.02 539.17 474.62 539.17C472.42 539.17 471.42 536.67 469.62 534.67C467.92 533.67 466.62 535.17 466.32 537.27C465.92 540.67 468.42 543.67 468.42 552.93M42.58 552.93C42.58 562.20 40.08 565.20 40.48 568.60C40.78 570.70 42.08 572.20 43.78 571.20C45.58 569.20 46.58 566.70 48.78 566.70C52.18 566.70 54.68 570.00 54.68 574.20C54.68 578.40 52.18 581.70 48.78 581.70C46.58 581.70 45.58 579.20 43.78 577.20C42.08 576.20 40.78 577.70 40.48 579.80C40.08 583.20 42.58 586.20 42.58 595.47M85.17 552.93C85.17 562.20 82.67 565.20 83.07 568.60C83.37 570.70 84.67 572.20 86.37 571.20C88.17 569.20 89.17 566.70 91.37 566.70C94.77 566.70 97.27 570.00 97.27 574.20C97.27 578.40 94.77 581.70 91.37 581.70C89.17 581.70 88.17 579.20 86.37 577.20C84.67 576.20 83.37 577.70 83.07 579.80C82.67 583.20 85.17 586.20 85.17 595.47M127.75 552.93C127.75 562.20 125.25 565.20 125.65 568.60C125.95 570.70 127.25 572.20 128.95 571.20C130.75 569.20 131.75 566.70 133.95 566.70C137.35 566.70 139.85 570.00 139.85 574.20C139.85 578.40 137.35 581.70 133.95 581.70C131.75 581.70 130.75 579.20 128.95 577.20C127.25 576.20 125.95 577.70 125.65 579.80C125.25 583.20 127.75 586.20 127.75 595.47M170.33 552.93C170.33 562.20 167.83 565.20 168.23 568.60C168.53 570.70 169.83 572.20 171.53 571.20C173.33 569.20 174.33 566.70 176.53 566.70C179.93 566.70 182.43 570.00 182.43 574.20C182.43 578.40 179.93 581.70 176.53 581.70C174.33 581.70 173.33 579.20 171.53 577.20C169.83 576.20 168.53 577.70 168.23 579.80C167.83 583.20 170.33 586.20 170.33 595.47M212.92 552.93C212.92 562.20 210.42 565.20 210.82 568.60C211.12 570.70 212.42 572.20 214.12 571.20C215.92 569.20 216.92 566.70 219.12 566.70C222.52 566.70 225.02 570.00 225.02 574.20C225.02 578.40 222.52 581.70 219.12 581.70C216.92 581.70 215.92 579.20 214.12 577.20C212.42 576.20 211.12 577.70 210.82 579.80C210.42 583.20 212.92 586.20 212.92 595.47M255.50 552.93C255.50 562.20 253.00 565.20 253.40 568.60C253.70 570.70 255.00 572.20 256.70 571.20C258.50 569.20 259.50 566.70 261.70 566.70C265.10 566.70 267.60 570.00 267.60 574.20C267.60 578.40 265.10 581.70 261.70 581.70C259.50 581.70 258.50 579.20 256.70 577.20C255.00 576.20 253.70 577.70 253.40 579.80C253.00 583.20 255.50 586.20 255.50 595.47M298.08 552.93C298.08 562.20 300.58 565.20 300.18 568.60C299.88 570.70 298.58 572.20 296.88 571.20C295.08 569.20 294.08 566.70 291.88 566.70C288.48 566.70 285.98 570.00 285.98 574.20C285.98 578.40 288.48 581.70 291.88 581.70C294.08 581.70 295.08 579.20 296.88 577.20C298.58 576.20 299.88 577.70 300.18 579.80C300.58 583.20 298.08 586.20 298.08 595.47M340.67 552.93C340.67 562.20 343.17 565.20 342.77 568.60C342.47 570.70 341.17 572.20 339.47 571.20C337.67 569.20 336.67 566.70 334.47 566.70C331.07 566.70 328.57 570.00 328.57 574.20C328.57 578.40 331.07 581.70 334.47 581.70C336.67 581.70 337.67 579.20 339.47 577.20C341.17 576.20 342.47 577.70 342.77 579.80C343.17 583.20 340.67 586.20 340.67 595.47M383.25 552.93C383.25 562.20 385.75 565.20 385.35 568.60C385.05 570.70 383.75 572.20 382.05 571.20C380.25 569.20 379.25 566.70 377.05 566.70C373.65 566.70 371.15 570.00 371.15 574.20C371.15 578.40 373.65 581.70 377.05 581.70C379.25 581.70 380.25 579.20 382.05 577.20C383.75 576.20 385.05 577.70 385.35 579.80C385.75 583.20 383.25 586.20 383.25 595.47M425.83 552.93C425.83 562.20 423.33 565.20 423.73 568.60C424.03 570.70 425.33 572.20 427.03 571.20C428.83 569.20 429.83 566.70 432.03 566.70C435.43 566.70 437.93 570.00 437.93 574.20C437.93 578.40 435.43 581.70 432.03 581.70C429.83 581.70 428.83 579.20 427.03 577.20C425.33 576.20 424.03 577.70 423.73 579.80C423.33 583.20 425.83 586.20 425.83 595.47M468.42 552.93C468.42 562.20 465.92 565.20 466.32 568.60C466.62 570.70 467.92 572.20 469.62 571.20C471.42 569.20 472.42 566.70 474.62 566.70C478.02 566.70 480.52 570.00 480.52 574.20C480.52 578.40 478.02 581.70 474.62 581.70C472.42 581.70 471.42 579.20 469.62 577.20C467.92 576.20 466.62 577.70 466.32 579.80C465.92 583.20 468.42 586.20 468.42 595.47M42.58 595.47C42.58 604.73 40.08 607.73 40.48 611.13C40.78 613.23 42.08 614.73 43.78 613.73C45.58 611.73 46.58 609.23 48.78 609.23C52.18 609.23 54.68 612.53 54.68 616.73C54.68 620.93 52.18 624.23 48.78 624.23C46.58 624.23 45.58 621.73 43.78 619.73C42.08 618.73 40.78 620.23 40.48 622.33C40.08 625.73 42.58 628.73 42.58 638.00M85.17 595.47C85.17 604.73 87.67 607.73 87.27 611.13C86.97 613.23 85.67 614.73 83.97 613.73C82.17 611.73 81.17 609.23 78.97 609.23C75.57 609.23 73.07 612.53 73.07 616.73C73.07 620.93 75.57 624.23 78.97 624.23C81.17 624.23 82.17 621.73 83.97 619.73C85.67 618.73 86.97 620.23 87.27 622.33C87.67 625.73 85.17 628.73 85.17 638.00M127.75 595.47C127.75 604.73 130.25 607.73 129.85 611.13C129.55 613.23 128.25 614.73 126.55 613.73C124.75 611.73 123.75 609.23 121.55 609.23C118.15 609.23 115.65 612.53 115.65 616.73C115.65 620.93 118.15 624.23 121.55 624.23C123.75 624.23 124.75 621.73 126.55 619.73C128.25 618.73 129.55 620.23 129.85 622.33C130.25 625.73 127.75 628.73 127.75 638.00M170.33 595.47C170.33 604.73 172.83 607.73 172.43 611.13C172.13 613.23 170.83 614.73 169.13 613.73C167.33 611.73 166.33 609.23 164.13 609.23C160.73 609.23 158.23 612.53 158.23 616.73C158.23 620.93 160.73 624.23 164.13 624.23C166.33 624.23 167.33 621.73 169.13 619.73C170.83 618.73 172.13 620.23 172.43 622.33C172.83 625.73 170.33 628.73 170.33 638.00M212.92 595.47C212.92 604.73 215.42 607.73 215.02 611.13C214.72 613.23 213.42 614.73 211.72 613.73C209.92 611.73 208.92 609.23 206.72 609.23C203.32 609.23 200.82 612.53 200.82 616.73C200.82 620.93 203.32 624.23 206.72 624.23C208.92 624.23 209.92 621.73 211.72 619.73C213.42 618.73 214.72 620.23 215.02 622.33C215.42 625.73 212.92 628.73 212.92 638.00M255.50 595.47C255.50 604.73 258.00 607.73 257.60 611.13C257.30 613.23 256.00 614.73 254.30 613.73C252.50 611.73 251.50 609.23 249.30 609.23C245.90 609.23 243.40 612.53 243.40 616.73C243.40 620.93 245.90 624.23 249.30 624.23C251.50 624.23 252.50 621.73 254.30 619.73C256.00 618.73 257.30 620.23 257.60 622.33C258.00 625.73 255.50 628.73 255.50 638.00M298.08 595.47C298.08 604.73 295.58 607.73 295.98 611.13C296.28 613.23 297.58 614.73 299.28 613.73C301.08 611.73 302.08 609.23 304.28 609.23C307.68 609.23 310.18 612.53 310.18 616.73C310.18 620.93 307.68 624.23 304.28 624.23C302.08 624.23 301.08 621.73 299.28 619.73C297.58 618.73 296.28 620.23 295.98 622.33C295.58 625.73 298.08 628.73 298.08 638.00M340.67 595.47C340.67 604.73 343.17 607.73 342.77 611.13C342.47 613.23 341.17 614.73 339.47 613.73C337.67 611.73 336.67 609.23 334.47 609.23C331.07 609.23 328.57 612.53 328.57 616.73C328.57 620.93 331.07 624.23 334.47 624.23C336.67 624.23 337.67 621.73 339.47 619.73C341.17 618.73 342.47 620.23 342.77 622.33C343.17 625.73 340.67 628.73 340.67 638.00M383.25 595.47C383.25 604.73 385.75 607.73 385.35 611.13C385.05 613.23 383.75 614.73 382.05 613.73C380.25 611.73 379.25 609.23 377.05 609.23C373.65 609.23 371.15 612.53 371.15 616.73C371.15 620.93 373.65 624.23 377.05 624.23C379.25 624.23 380.25 621.73 382.05 619.73C383.75 618.73 385.05 620.23 385.35 622.33C385.75 625.73 383.25 628.73 383.25 638.00M425.83 595.47C425.83 604.73 423.33 607.73 423.73 611.13C424.03 613.23 425.33 614.73 427.03 613.73C428.83 611.73 429.83 609.23 432.03 609.23C435.43 609.23 437.93 612.53 437.93 616.73C437.93 620.93 435.43 624.23 432.03 624.23C429.83 624.23 428.83 621.73 427.03 619.73C425.33 618.73 424.03 620.23 423.73 622.33C423.33 625.73 425.83 628.73 425.83 638.00M468.42 595.47C468.42 604.73 465.92 607.73 466.32 611.13C466.62 613.23 467.92 614.73 469.62 613.73C471.42 611.73 472.42 609.23 474.62 609.23C478.02 609.23 480.52 612.53 480.52 616.73C480.52 620.93 478.02 624.23 474.62 624.23C472.42 624.23 471.42 621.73 469.62 619.73C467.92 618.73 466.62 620.23 466.32 622.33C465.92 625.73 468.42 628.73 468.42 638.00" fill="none" stroke="#6a6b6d" stroke-width="1.4"/></svg>
<div style="position:absolute;left:530px;top:781px;width:997px;height:1px;background:#b85a66;"></div>
<div style="position:absolute;left:826px;top:780px;width:511px;height:2px;background:#d98d97;opacity:0.8"></div>
<div style="position:absolute;left:826px;top:27px;width:1px;height:1007px;background:#8fb060;"></div>
<div style="position:absolute;left:540px;top:30px;width:29px;height:18px;background:#2b2b2b;border-radius:4px;"></div>
<svg style="left:543px;top:31px" width="16" height="16"><path d="M2 10H13M1 13H14M4 8V15M10 11V15" stroke="#d0d0d0" stroke-width="1"/><circle cx="11" cy="6" r="3.5" fill="#dedede"/></svg>
<svg style="left:559px;top:37px" width="8" height="5"><path d="M0.5 0.5L4 4L7.5 0.5" fill="none" stroke="#a0a0a0" stroke-width="1.2"/></svg>
<div style="position:absolute;left:576px;top:30px;width:108px;height:18px;background:#2b2b2b;border-radius:4px;"></div>
<svg style="left:580px;top:32px" width="14" height="14"><path d="M1 4V1H4M10 1H13V4M13 10V13H10M4 13H1V10" fill="none" stroke="#d0d0d0" stroke-width="1.1"/><rect x="3.5" y="3.5" width="7" height="7" fill="#dcdcdc"/></svg>
<div class="t" style="left:601px;top:31.2px;font-size:11.3px;color:#e0e0e0;">Object Mode</div>
<svg style="left:675px;top:37px" width="8" height="5"><path d="M0.5 0.5L4 4L7.5 0.5" fill="none" stroke="#a0a0a0" stroke-width="1.2"/></svg>
<div style="position:absolute;left:691px;top:30px;width:37px;height:18px;background:#2b2b2b;border-radius:4px;"></div>
<div class="t" style="left:609.5px;width:200px;text-align:center;top:31.2px;font-size:11.3px;color:#e0e0e0;">View</div>
<div style="position:absolute;left:731px;top:30px;width:43px;height:18px;background:#2b2b2b;border-radius:4px;"></div>
<div class="t" style="left:652.5px;width:200px;text-align:center;top:31.2px;font-size:11.3px;color:#e0e0e0;">Select</div>
<div style="position:absolute;left:777px;top:30px;width:31px;height:18px;background:#2b2b2b;border-radius:4px;"></div>
<div class="t" style="left:692.5px;width:200px;text-align:center;top:31.2px;font-size:11.3px;color:#e0e0e0;">Add</div>
<div style="position:absolute;left:811px;top:30px;width:45px;height:18px;background:#2b2b2b;border-radius:4px;"></div>
<div class="t" style="left:733.5px;width:200px;text-align:center;top:31.2px;font-size:11.3px;color:#e0e0e0;">Object</div>
<div style="position:absolute;left:903px;top:30px;width:78px;height:18px;background:#2b2b2b;border-radius:4px;"></div>
<svg style="left:906px;top:31px" width="16" height="16"><path d="M3 2V13H14M3 13L11 5M8 5H11V8M1 4L3 2L5 4M12 11L14 13L12 15" fill="none" stroke="#cfcfcf" stroke-width="1.1"/></svg>
<div class="t" style="left:928px;top:31.2px;font-size:11.3px;color:#e0e0e0;">Global</div>
<svg style="left:970px;top:37px" width="8" height="5"><path d="M0.5 0.5L4 4L7.5 0.5" fill="none" stroke="#a0a0a0" stroke-width="1.2"/></svg>
<div style="position:absolute;left:988px;top:30px;width:30px;height:18px;background:#2b2b2b;border-radius:4px;"></div>
<svg style="left:991px;top:32px" width="14" height="14"><circle cx="5" cy="9" r="3.3" fill="none" stroke="#d0d0d0" stroke-width="1.2"/><circle cx="9" cy="5" r="3.3" fill="none" stroke="#d0d0d0" stroke-width="1.2"/></svg>
<svg style="left:1007px;top:37px" width="8" height="5"><path d="M0.5 0.5L4 4L7.5 0.5" fill="none" stroke="#a0a0a0" stroke-width="1.2"/></svg>
<div style="position:absolute;left:1025px;top:30px;width:50px;height:18px;background:#2b2b2b;border-radius:4px;"></div>
<div style="position:absolute;left:1025px;top:30px;width:19px;height:18px;background:#4a4a4a;border-radius:4px 0 0 4px;"></div>
<svg style="left:1027px;top:32px" width="14" height="14"><path d="M3 12V6A4 4 0 0 1 11 6V12" fill="none" stroke="#8a8a8a" stroke-width="2"/></svg>
<svg style="left:1046px;top:32px" width="14" height="14"><path d="M2 3V12H11" fill="none" stroke="#d0d0d0" stroke-width="1"/><rect x="9" y="2" width="3" height="10" fill="#d6d6d6"/></svg>
<svg style="left:1064px;top:37px" width="8" height="5"><path d="M0.5 0.5L4 4L7.5 0.5" fill="none" stroke="#a0a0a0" stroke-width="1.2"/></svg>
<div style="position:absolute;left:1082px;top:30px;width:50px;height:18px;background:#2b2b2b;border-radius:4px;"></div>
<div style="position:absolute;left:1082px;top:30px;width:18px;height:18px;background:#4a4a4a;border-radius:4px 0 0 4px;"></div>
<svg style="left:1084px;top:32px" width="14" height="14"><circle cx="7" cy="7" r="5" fill="none" stroke="#7a7a7a" stroke-width="1"/><circle cx="7" cy="7" r="1.8" fill="#c8c8c8"/></svg>
<svg style="left:1103px;top:32px" width="16" height="14"><path d="M1 13C5 13 5 1 8 1C11 1 11 13 15 13" fill="none" stroke="#9a9a9a" stroke-width="1.1"/></svg>
<svg style="left:1122px;top:37px" width="8" height="5"><path d="M0.5 0.5L4 4L7.5 0.5" fill="none" stroke="#808080" stroke-width="1.2"/></svg>
<div style="position:absolute;left:1272px;top:30px;width:30px;height:18px;background:#2b2b2b;border-radius:4px;"></div>
<svg style="left:1275px;top:31px" width="18" height="16"><path d="M4 7L8 15L9 11L13 12Z" fill="#dcdcdc"/><path d="M6 4C8 1 12 1 14 4C12 7 8 7 6 4Z" fill="none" stroke="#dcdcdc" stroke-width="1.1"/><circle cx="10" cy="4" r="1.3" fill="#dcdcdc"/></svg>
<svg style="left:1292px;top:37px" width="8" height="5"><path d="M0.5 0.5L4 4L7.5 0.5" fill="none" stroke="#a0a0a0" stroke-width="1.2"/></svg>
<div style="position:absolute;left:1309px;top:30px;width:38px;height:18px;background:#2b2b2b;border-radius:4px;"></div>
<div style="position:absolute;left:1309px;top:30px;width:19px;height:18px;background:#4772b3;border-radius:4px 0 0 4px;"></div>
<svg style="left:1311px;top:32px" width="15" height="14"><path d="M3 12C4 7 7 4 12 2M9 2H13V6" fill="none" stroke="#f0f0f0" stroke-width="1.1"/><circle cx="3" cy="12" r="1.6" fill="none" stroke="#f0f0f0" stroke-width="1"/></svg>
<svg style="left:1334px;top:37px" width="8" height="5"><path d="M0.5 0.5L4 4L7.5 0.5" fill="none" stroke="#a0a0a0" stroke-width="1.2"/></svg>
<div style="position:absolute;left:1354px;top:30px;width:38px;height:18px;background:#2b2b2b;border-radius:4px;"></div>
<div style="position:absolute;left:1354px;top:30px;width:19px;height:18px;background:#4772b3;border-radius:4px 0 0 4px;"></div>
<svg style="left:1356px;top:32px" width="15" height="14"><circle cx="6" cy="8" r="4.8" fill="none" stroke="#f0f0f0" stroke-width="1.2"/><circle cx="9" cy="6" r="4" fill="#f0f0f0"/></svg>
<svg style="left:1379px;top:37px" width="8" height="5"><path d="M0.5 0.5L4 4L7.5 0.5" fill="none" stroke="#a0a0a0" stroke-width="1.2"/></svg>
<div style="position:absolute;left:1400px;top:30px;width:17px;height:18px;background:#2b2b2b;border-radius:4px;"></div>
<svg style="left:1401px;top:32px" width="14" height="14"><rect x="1.5" y="4.5" width="8" height="8" fill="none" stroke="#cfcfcf" stroke-width="1"/><path d="M4.5 4.5V1.5H12.5V9.5H9.5" fill="none" stroke="#cfcfcf" stroke-width="1"/></svg>
<div style="position:absolute;left:1424px;top:30px;width:95px;height:18px;background:#2b2b2b;border-radius:4px;"></div>
<div style="position:absolute;left:1443px;top:30px;width:18px;height:18px;background:#4772b3;"></div>
<div style="position:absolute;left:1461px;top:30px;width:19px;height:18px;background:#3d3d3d;"></div>
<div style="position:absolute;left:1480px;top:30px;width:20px;height:18px;background:#3d3d3d;"></div>
<svg style="left:1426px;top:32px" width="92" height="14"><circle cx="7" cy="7" r="5.5" fill="none" stroke="#cfcfcf" stroke-width="1"/><path d="M1.5 7H12.5M7 1.5V12.5" stroke="#cfcfcf" stroke-width="0.9"/><ellipse cx="7" cy="7" rx="2.5" ry="5.5" fill="none" stroke="#cfcfcf" stroke-width="0.9"/><circle cx="26" cy="7" r="6" fill="#f4f4f4"/><circle cx="45" cy="7" r="5.5" fill="none" stroke="#d0d0d0" stroke-width="1.1"/><path d="M45 1.5A5.5 5.5 0 0 0 45 12.5Z" fill="#d0d0d0"/><circle cx="64" cy="7" r="5.5" fill="none" stroke="#cfcfcf" stroke-width="1.1"/><path d="M61 5A3 3 0 0 1 64 3" stroke="#cfcfcf" stroke-width="1"/></svg>
<svg style="left:1506px;top:37px" width="8" height="5"><path d="M0.5 0.5L4 4L7.5 0.5" fill="none" stroke="#a0a0a0" stroke-width="1.2"/></svg>
<div class="t" style="left:549px;top:59.7px;font-size:11.3px;color:#e8e8e8;text-shadow:0 0 2px #000;">Top Orthographic</div>
<div class="t" style="left:549px;top:79.7px;font-size:11.3px;color:#e8e8e8;text-shadow:0 0 2px #000;">(1) Controls | Spring</div>
<div style="position:absolute;left:530px;top:65px;width:8px;height:16px;background:#2f2f2f;border-radius:0 6px 6px 0;"></div>
<svg style="left:531px;top:69px" width="6" height="8"><path d="M1 0.5L4.5 4L1 7.5" fill="none" stroke="#8a8a8a" stroke-width="1"/></svg>
<div style="position:absolute;left:1520px;top:65px;width:7px;height:16px;background:#2f2f2f;border-radius:6px 0 0 6px;"></div>
<svg style="left:1521px;top:69px" width="6" height="8"><path d="M4.5 0.5L1 4L4.5 7.5" fill="none" stroke="#8a8a8a" stroke-width="1"/></svg>
<div style="position:absolute;left:1322.5px;top:60.5px;width:27px;height:27px;border-radius:50%;background:rgba(30,30,30,0.45)"></div>
<div style="position:absolute;left:1352.5px;top:60.5px;width:27px;height:27px;border-radius:50%;background:rgba(30,30,30,0.45)"></div>
<div style="position:absolute;left:1383.5px;top:60.5px;width:27px;height:27px;border-radius:50%;background:rgba(30,30,30,0.45)"></div>
<div style="position:absolute;left:1413.5px;top:60.5px;width:27px;height:27px;border-radius:50%;background:rgba(30,30,30,0.45)"></div>
<svg style="left:1326px;top:64px" width="20" height="20"><path d="M3 3H17V17H3ZM3 7.7H17M3 12.3H17M7.7 3V17M12.3 3V17" fill="none" stroke="#d0d0d0" stroke-width="1.2"/></svg>
<svg style="left:1356px;top:64px" width="20" height="20"><circle cx="7" cy="6.5" r="3" fill="#d0d0d0"/><circle cx="13" cy="6.5" r="3" fill="#d0d0d0"/><rect x="5" y="9.5" width="9" height="6" fill="#d0d0d0"/><path d="M14 12L18 9.5V16L14 13.5Z" fill="#d0d0d0"/><circle cx="7" cy="6.5" r="1.2" fill="#444"/><circle cx="13" cy="6.5" r="1.2" fill="#444"/></svg>
<svg style="left:1387px;top:64px" width="20" height="20"><path d="M5 11V6A1 1 0 0 1 7 6V10V4A1 1 0 0 1 9 4V10V3A1 1 0 0 1 11 3V10V4.5A1 1 0 0 1 13 4.5V12L15 9.5A1 1 0 0 1 16.5 11L13 16.5C12 17.5 11 18 9 18C6.5 18 5 16 5 14Z" fill="#d0d0d0"/></svg>
<svg style="left:1417px;top:64px" width="20" height="20"><circle cx="11.5" cy="8" r="5" fill="#d0d0d0"/><path d="M8 11.5L3.5 16" stroke="#d0d0d0" stroke-width="2.4" stroke-linecap="round"/><path d="M11.5 5.5V10.5M9 8H14" stroke="#444" stroke-width="1.3"/></svg>
<svg style="left:1430px;top:55px" width="95" height="95"><path d="M47 47V14" stroke="#7fbf1a" stroke-width="2.2"/><path d="M47 47H79.6" stroke="#e83a54" stroke-width="2.2"/><circle cx="14.7" cy="46.7" r="6.3" fill="#9c3042"/><circle cx="47" cy="79" r="6" fill="#4a7a24"/><circle cx="47" cy="14.3" r="7.8" fill="#7fbf1a"/><circle cx="47" cy="46.7" r="7.8" fill="#2e8ef0"/><circle cx="79.6" cy="46.7" r="7.8" fill="#e83a54"/><text x="47" y="18.6" font-family="Liberation Sans" font-size="11" font-weight="bold" text-anchor="middle" fill="#1a1a1a">Y</text><text x="47" y="50.9" font-family="Liberation Sans" font-size="11" font-weight="bold" text-anchor="middle" fill="#1a1a1a">Z</text><text x="79.6" y="50.9" font-family="Liberation Sans" font-size="11" font-weight="bold" text-anchor="middle" fill="#1a1a1a">X</text></svg>
<svg style="left:764px;top:112px" width="40" height="62"><path d="M13 12L20 4L27 12Z" fill="#c98b35"/><circle cx="20" cy="31.5" r="12.3" fill="none" stroke="#c98b35" stroke-width="2.6"/><path d="M15.5 25L20 31V38M24.5 25L20 31" fill="none" stroke="#c98b35" stroke-width="1.5"/><path d="M13 50L20 57L27 50Z" fill="#c98b35"/></svg>
<svg style="left:1310px;top:808px" width="56" height="32"><circle cx="27" cy="16" r="12.8" fill="none" stroke="#c98b35" stroke-width="2.8"/><path d="M22 10.5L32 21.5M32 10.5L22 21.5" stroke="#c98b35" stroke-width="1.6"/><path d="M1 16L8 9.5V22.5Z" fill="#c98b35"/><path d="M53 16L46 9.5V22.5Z" fill="#c98b35"/></svg>
<svg style="left:762px;top:802px" width="44" height="44"><path d="M22 1L43 22L22 43L1 22Z" fill="#c98b35"/><path d="M1 22C6 22 14 21 17 20C19 19 16 17 16 14C16 11 19 9 22 9C25 9 28 11 28 14C28 17 25 19 27 20C30 21 38 22 43 22" fill="none" stroke="#8a5a1c" stroke-width="1.2"/></svg>
<div class="t" style="left:684px;width:200px;text-align:center;top:850.2px;font-size:14.5px;color:#c98b35;">Sample</div>
<svg style="left:806px;top:761px" width="40" height="40"><path d="M20 1V13M20 27V39M1 20H13M27 20H39" stroke="#111" stroke-width="1.4"/><circle cx="20" cy="20" r="10" fill="none" stroke="#fff" stroke-width="1.6"/><circle cx="20" cy="20" r="10" fill="none" stroke="#c82020" stroke-width="1.6" stroke-dasharray="3.93 3.93"/></svg>
<div style="position:absolute;left:1530px;top:27px;width:388px;height:483px;background:#282828;border-radius:6px 0 0 6px;overflow:hidden;"></div>
<div style="position:absolute;left:1530px;top:27px;width:388px;height:25px;background:#303030;border-radius:6px 0 0 0;"></div>
<div style="position:absolute;left:1530px;top:73px;width:388px;height:20px;background:#2b2b2b;"></div>
<div style="position:absolute;left:1530px;top:113px;width:388px;height:20px;background:#2b2b2b;"></div>
<div style="position:absolute;left:1530px;top:153px;width:388px;height:20px;background:#2b2b2b;"></div>
<div style="position:absolute;left:1530px;top:193px;width:388px;height:20px;background:#2b2b2b;"></div>
<div style="position:absolute;left:1530px;top:233px;width:388px;height:20px;background:#2b2b2b;"></div>
<div style="position:absolute;left:1530px;top:273px;width:388px;height:20px;background:#2b2b2b;"></div>
<div style="position:absolute;left:1530px;top:313px;width:388px;height:20px;background:#2b2b2b;"></div>
<div style="position:absolute;left:1530px;top:353px;width:388px;height:20px;background:#2b2b2b;"></div>
<div style="position:absolute;left:1530px;top:393px;width:388px;height:20px;background:#2b2b2b;"></div>
<div style="position:absolute;left:1530px;top:433px;width:388px;height:20px;background:#2b2b2b;"></div>
<div style="position:absolute;left:1530px;top:473px;width:388px;height:20px;background:#2b2b2b;"></div>
<div style="position:absolute;left:1539px;top:30px;width:30px;height:18px;background:#282828;border-radius:4px;"></div>
<svg style="left:1542px;top:32px" width="24" height="14"><rect x="1" y="1" width="5" height="3" fill="#d0d0d0"/><rect x="6" y="6" width="6" height="3" fill="#d0d0d0"/><rect x="6" y="10.5" width="6" height="3" fill="#d0d0d0"/><path d="M3 4V12H6M3 7.5H6" fill="none" stroke="#d0d0d0" stroke-width="1"/><path d="M15 6L17.5 8.5L20 6" fill="none" stroke="#aaa" stroke-width="1.1"/></svg>
<div style="position:absolute;left:1576px;top:30px;width:30px;height:18px;background:#282828;border-radius:4px;"></div>
<svg style="left:1579px;top:32px" width="24" height="14"><rect x="3.5" y="1.5" width="8" height="8" fill="none" stroke="#d0d0d0" stroke-width="1"/><path d="M1.5 4V12H9.5" fill="none" stroke="#d0d0d0" stroke-width="1"/><path d="M4 9L7 5L9 8L11 6" fill="none" stroke="#d0d0d0" stroke-width="1"/><path d="M15 6L17.5 8.5L20 6" fill="none" stroke="#aaa" stroke-width="1.1"/></svg>
<div style="position:absolute;left:1659px;top:30px;width:110px;height:18px;background:#1d1d1d;border-radius:4px;"></div>
<svg style="left:1662px;top:31px" width="14" height="15"><circle cx="8" cy="6" r="4" fill="none" stroke="#d8d8d8" stroke-width="1.2"/><path d="M5 9L1.5 13" stroke="#d8d8d8" stroke-width="1.3"/></svg>
<div style="position:absolute;left:1856px;top:30px;width:30px;height:18px;background:#282828;border-radius:4px;"></div>
<svg style="left:1858px;top:31px" width="26" height="16"><path d="M1.5 2H13.5L9 8V14L6 12V8Z" fill="none" stroke="#d8d8d8" stroke-width="1.1"/><path d="M17 7L19.5 9.5L22 7" fill="none" stroke="#aaa" stroke-width="1.1"/></svg>
<div style="position:absolute;left:1893px;top:30px;width:19px;height:18px;background:#4a4a4a;border-radius:4px;"></div>
<svg style="left:1895px;top:31px" width="16" height="16"><rect x="2.5" y="5.5" width="9" height="8" fill="none" stroke="#bbb" stroke-width="1"/><path d="M2 8H12M5 11H9" stroke="#bbb" stroke-width="1"/><circle cx="11.5" cy="4" r="3.3" fill="#e0e0e0"/><path d="M11.5 2V6M9.5 4H13.5" stroke="#333" stroke-width="1"/></svg>
<svg style="left:1553px;top:56px;opacity:1" width="14" height="14"><rect x="1.5" y="1.5" width="11" height="2.5" fill="none" stroke="#d0d0d0" stroke-width="1"/><path d="M2.5 4.5V12.5H11.5V4.5M5.5 7.5H8.5" fill="none" stroke="#d0d0d0" stroke-width="1"/></svg>
<div class="t" style="left:1574px;top:55.7px;font-size:11.3px;color:#e0e0e0;">Scene Collection</div>
<div style="position:absolute;left:1530px;top:153px;width:388px;height:20px;background:#31507a;box-shadow:inset 0 1px 0 #3c5070,inset 0 -1px 0 #3c5070;"></div>
<div style="position:absolute;left:1579px;top:89px;width:1px;height:75px;background:#6a6a6a;"></div>
<div style="position:absolute;left:1579px;top:189px;width:1px;height:15px;background:#6a6a6a;"></div>
<div style="position:absolute;left:1579px;top:229px;width:1px;height:115px;background:#6a6a6a;"></div>
<svg style="left:1555px;top:80px" width="8" height="7"><path d="M0.5 0.5H7.5L4 6Z" fill="#c8c8c8"/></svg>
<div style="position:absolute;left:1574.5px;top:77.5px;width:11px;height:11px;background:#e6e6e6;border-radius:2px"></div>
<svg style="left:1575px;top:78px" width="10" height="10"><path d="M2 5L4.2 7.3L8.3 2.5" fill="none" stroke="#1a1a1a" stroke-width="1.7"/></svg>
<div style="position:absolute;left:1590px;top:73px;width:20px;height:20px;background:#3c3c3c;border-radius:4px;"></div>
<svg style="left:1593px;top:76px;opacity:1" width="14" height="14"><rect x="1.5" y="1.5" width="11" height="2.5" fill="none" stroke="#d0d0d0" stroke-width="1"/><path d="M2.5 4.5V12.5H11.5V4.5M5.5 7.5H8.5" fill="none" stroke="#d0d0d0" stroke-width="1"/></svg>
<div class="t" style="left:1614px;top:75.7px;font-size:11.3px;color:#e0e0e0;">Controls</div>
<div style="position:absolute;left:1580px;top:103px;width:14px;height:1px;background:#6a6a6a;"></div>
<svg style="left:1577.5px;top:99px" width="7" height="8"><path d="M0.5 0.5V7.5L6 4Z" fill="#9a9a9a"/></svg>
<svg style="left:1593px;top:96px;opacity:1" width="14" height="14"><path d="M0.5 0.7H13.5L7 13.8Z" fill="#e0914a"/><path d="M3.8 3.2H10.2L7 8.6Z" fill="#1e1e1e"/></svg>
<div class="t" style="left:1614px;top:95.7px;font-size:11.3px;color:#e0e0e0;">DragX</div>
<div style="position:absolute;left:1580px;top:123px;width:14px;height:1px;background:#6a6a6a;"></div>
<svg style="left:1577.5px;top:119px" width="7" height="8"><path d="M0.5 0.5V7.5L6 4Z" fill="#9a9a9a"/></svg>
<svg style="left:1593px;top:116px;opacity:1" width="14" height="14"><path d="M0.5 0.7H13.5L7 13.8Z" fill="#e0914a"/><path d="M3.8 3.2H10.2L7 8.6Z" fill="#1e1e1e"/></svg>
<div class="t" style="left:1614px;top:115.7px;font-size:11.3px;color:#e0e0e0;">DragY</div>
<div style="position:absolute;left:1580px;top:143px;width:14px;height:1px;background:#6a6a6a;"></div>
<svg style="left:1577.5px;top:139px" width="7" height="8"><path d="M0.5 0.5V7.5L6 4Z" fill="#9a9a9a"/></svg>
<svg style="left:1593px;top:136px;opacity:1" width="14" height="14"><path d="M0.5 0.7H13.5L7 13.8Z" fill="#e0914a"/><path d="M3.8 3.2H10.2L7 8.6Z" fill="#1e1e1e"/></svg>
<div class="t" style="left:1614px;top:135.7px;font-size:11.3px;color:#e0e0e0;">Sample</div>
<div style="position:absolute;left:1580px;top:163px;width:14px;height:1px;background:#6a6a6a;"></div>
<svg style="left:1577.5px;top:159px" width="7" height="8"><path d="M0.5 0.5V7.5L6 4Z" fill="#9a9a9a"/></svg>
<div style="position:absolute;left:1591px;top:153px;width:18px;height:19px;background:rgba(255,255,255,0.12);border-radius:4px;"></div>
<svg style="left:1593px;top:156px;opacity:0.55" width="14" height="14"><path d="M0.5 0.7H13.5L7 13.8Z" fill="#c88a5a"/><path d="M3.8 3.2H10.2L7 8.6Z" fill="#1e1e1e"/></svg>
<div class="t" style="left:1614px;top:155.7px;font-size:11.3px;color:#9da8bc;">Spring</div>
<svg style="left:1555px;top:180px" width="8" height="7"><path d="M0.5 0.5H7.5L4 6Z" fill="#c8c8c8"/></svg>
<div style="position:absolute;left:1574.5px;top:177.5px;width:11px;height:11px;background:#e6e6e6;border-radius:2px"></div>
<svg style="left:1575px;top:178px" width="10" height="10"><path d="M2 5L4.2 7.3L8.3 2.5" fill="none" stroke="#1a1a1a" stroke-width="1.7"/></svg>
<svg style="left:1593px;top:176px;opacity:1" width="14" height="14"><rect x="1.5" y="1.5" width="11" height="2.5" fill="none" stroke="#d0d0d0" stroke-width="1"/><path d="M2.5 4.5V12.5H11.5V4.5M5.5 7.5H8.5" fill="none" stroke="#d0d0d0" stroke-width="1"/></svg>
<div class="t" style="left:1614px;top:175.7px;font-size:11.3px;color:#e0e0e0;">Tiles</div>
<div style="position:absolute;left:1580px;top:203px;width:14px;height:1px;background:#6a6a6a;"></div>
<svg style="left:1577.5px;top:199px" width="7" height="8"><path d="M0.5 0.5V7.5L6 4Z" fill="#9a9a9a"/></svg>
<svg style="left:1593px;top:196px;opacity:1" width="14" height="14"><path d="M0.5 0.7H13.5L7 13.8Z" fill="#e0914a"/><path d="M3.8 3.2H10.2L7 8.6Z" fill="#1e1e1e"/></svg>
<div class="t" style="left:1614px;top:195.7px;font-size:11.3px;color:#e0e0e0;">Tile</div>
<svg style="left:1555px;top:220px" width="8" height="7"><path d="M0.5 0.5H7.5L4 6Z" fill="#c8c8c8"/></svg>
<div style="position:absolute;left:1574.5px;top:217.5px;width:11px;height:11px;background:#e6e6e6;border-radius:2px"></div>
<svg style="left:1575px;top:218px" width="10" height="10"><path d="M2 5L4.2 7.3L8.3 2.5" fill="none" stroke="#1a1a1a" stroke-width="1.7"/></svg>
<svg style="left:1593px;top:216px;opacity:1" width="14" height="14"><rect x="1.5" y="1.5" width="11" height="2.5" fill="none" stroke="#d0d0d0" stroke-width="1"/><path d="M2.5 4.5V12.5H11.5V4.5M5.5 7.5H8.5" fill="none" stroke="#d0d0d0" stroke-width="1"/></svg>
<div class="t" style="left:1614px;top:215.7px;font-size:11.3px;color:#e0e0e0;">Build</div>
<div style="position:absolute;left:1580px;top:243px;width:14px;height:1px;background:#6a6a6a;"></div>
<svg style="left:1577.5px;top:239px" width="7" height="8"><path d="M0.5 0.5V7.5L6 4Z" fill="#9a9a9a"/></svg>
<svg style="left:1593px;top:236px;opacity:1" width="14" height="14"><path d="M0.5 0.7H13.5L7 13.8Z" fill="#e0914a"/><path d="M3.8 3.2H10.2L7 8.6Z" fill="#1e1e1e"/></svg>
<div class="t" style="left:1614px;top:235.7px;font-size:11.3px;color:#e0e0e0;">CellX</div>
<div style="position:absolute;left:1580px;top:263px;width:14px;height:1px;background:#6a6a6a;"></div>
<svg style="left:1577.5px;top:259px" width="7" height="8"><path d="M0.5 0.5V7.5L6 4Z" fill="#9a9a9a"/></svg>
<svg style="left:1593px;top:256px;opacity:1" width="14" height="14"><path d="M0.5 0.7H13.5L7 13.8Z" fill="#e0914a"/><path d="M3.8 3.2H10.2L7 8.6Z" fill="#1e1e1e"/></svg>
<div class="t" style="left:1614px;top:255.7px;font-size:11.3px;color:#e0e0e0;">CellY</div>
<div style="position:absolute;left:1580px;top:283px;width:14px;height:1px;background:#6a6a6a;"></div>
<svg style="left:1577.5px;top:279px" width="7" height="8"><path d="M0.5 0.5V7.5L6 4Z" fill="#9a9a9a"/></svg>
<svg style="left:1593px;top:276px;opacity:1" width="14" height="14"><path d="M0.5 0.7H13.5L7 13.8Z" fill="#e0914a"/><path d="M3.8 3.2H10.2L7 8.6Z" fill="#1e1e1e"/></svg>
<div class="t" style="left:1614px;top:275.7px;font-size:11.3px;color:#e0e0e0;">EdgeX+</div>
<div style="position:absolute;left:1580px;top:303px;width:14px;height:1px;background:#6a6a6a;"></div>
<svg style="left:1577.5px;top:299px" width="7" height="8"><path d="M0.5 0.5V7.5L6 4Z" fill="#9a9a9a"/></svg>
<svg style="left:1593px;top:296px;opacity:1" width="14" height="14"><path d="M0.5 0.7H13.5L7 13.8Z" fill="#e0914a"/><path d="M3.8 3.2H10.2L7 8.6Z" fill="#1e1e1e"/></svg>
<div class="t" style="left:1614px;top:295.7px;font-size:11.3px;color:#e0e0e0;">EdgeX0</div>
<div style="position:absolute;left:1580px;top:323px;width:14px;height:1px;background:#6a6a6a;"></div>
<svg style="left:1577.5px;top:319px" width="7" height="8"><path d="M0.5 0.5V7.5L6 4Z" fill="#9a9a9a"/></svg>
<svg style="left:1593px;top:316px;opacity:1" width="14" height="14"><path d="M0.5 0.7H13.5L7 13.8Z" fill="#e0914a"/><path d="M3.8 3.2H10.2L7 8.6Z" fill="#1e1e1e"/></svg>
<div class="t" style="left:1614px;top:315.7px;font-size:11.3px;color:#e0e0e0;">EdgeY+</div>
<div style="position:absolute;left:1580px;top:343px;width:14px;height:1px;background:#6a6a6a;"></div>
<svg style="left:1577.5px;top:339px" width="7" height="8"><path d="M0.5 0.5V7.5L6 4Z" fill="#9a9a9a"/></svg>
<svg style="left:1593px;top:336px;opacity:1" width="14" height="14"><path d="M0.5 0.7H13.5L7 13.8Z" fill="#e0914a"/><path d="M3.8 3.2H10.2L7 8.6Z" fill="#1e1e1e"/></svg>
<div class="t" style="left:1614px;top:335.7px;font-size:11.3px;color:#e0e0e0;">EdgeY0</div>
<svg style="left:1556px;top:359px" width="7" height="8"><path d="M0.5 0.5V7.5L6 4Z" fill="#8a8a8a"/></svg>
<div style="position:absolute;left:1574.5px;top:357.5px;width:11px;height:11px;background:#e6e6e6;border-radius:2px"></div>
<svg style="left:1575px;top:358px" width="10" height="10"><path d="M2 5L4.2 7.3L8.3 2.5" fill="none" stroke="#1a1a1a" stroke-width="1.7"/></svg>
<svg style="left:1593px;top:356px;opacity:1" width="14" height="14"><rect x="1.5" y="1.5" width="11" height="2.5" fill="none" stroke="#8c8c8c" stroke-width="1"/><path d="M2.5 4.5V12.5H11.5V4.5M5.5 7.5H8.5" fill="none" stroke="#8c8c8c" stroke-width="1"/></svg>
<div class="t" style="left:1614px;top:355.7px;font-size:11.3px;color:#9a9a9a;">Components</div>
<svg style="left:1556px;top:379px" width="7" height="8"><path d="M0.5 0.5V7.5L6 4Z" fill="#8a8a8a"/></svg>
<div style="position:absolute;left:1574.5px;top:377.5px;width:11px;height:11px;background:#e6e6e6;border-radius:2px"></div>
<svg style="left:1575px;top:378px" width="10" height="10"><path d="M2 5L4.2 7.3L8.3 2.5" fill="none" stroke="#1a1a1a" stroke-width="1.7"/></svg>
<svg style="left:1593px;top:376px;opacity:1" width="14" height="14"><rect x="1.5" y="1.5" width="11" height="2.5" fill="none" stroke="#8c8c8c" stroke-width="1"/><path d="M2.5 4.5V12.5H11.5V4.5M5.5 7.5H8.5" fill="none" stroke="#8c8c8c" stroke-width="1"/></svg>
<div class="t" style="left:1614px;top:375.7px;font-size:11.3px;color:#9a9a9a;">Lights</div>
<svg style="left:1667px;top:96px" width="14" height="14"><path d="M10.03 10.73L13.06 4.26A2.5 2.5 0 0 0 9.69 0.96L3.29 4.12A5.0 5.0 0 1 0 10.03 10.73Z" fill="#1c2638" stroke="#86b4f0" stroke-width="1"/><circle cx="5.5" cy="8.6" r="2.6" fill="none" stroke="#86b4f0" stroke-width="1.9"/><rect x="10" y="2.5" width="1.7" height="1.7" fill="#86b4f0"/></svg>
<svg style="left:1688px;top:96px" width="14" height="14"><path d="M2 2H12L7 11.8Z" fill="none" stroke="#a8e898" stroke-width="1.1"/><rect x="0.4" y="0.4" width="3.2" height="3.2" fill="#0c1a0c" stroke="#7ad56a" stroke-width="1"/><rect x="10.4" y="0.4" width="3.2" height="3.2" fill="#0c1a0c" stroke="#7ad56a" stroke-width="1"/><rect x="5.4" y="10.2" width="3.2" height="3.2" fill="#0c1a0c" stroke="#7ad56a" stroke-width="1"/></svg>
<svg style="left:1667px;top:116px" width="14" height="14"><path d="M10.03 10.73L13.06 4.26A2.5 2.5 0 0 0 9.69 0.96L3.29 4.12A5.0 5.0 0 1 0 10.03 10.73Z" fill="#1c2638" stroke="#86b4f0" stroke-width="1"/><circle cx="5.5" cy="8.6" r="2.6" fill="none" stroke="#86b4f0" stroke-width="1.9"/><rect x="10" y="2.5" width="1.7" height="1.7" fill="#86b4f0"/></svg>
<svg style="left:1688px;top:116px" width="14" height="14"><path d="M2 2H12L7 11.8Z" fill="none" stroke="#a8e898" stroke-width="1.1"/><rect x="0.4" y="0.4" width="3.2" height="3.2" fill="#0c1a0c" stroke="#7ad56a" stroke-width="1"/><rect x="10.4" y="0.4" width="3.2" height="3.2" fill="#0c1a0c" stroke="#7ad56a" stroke-width="1"/><rect x="5.4" y="10.2" width="3.2" height="3.2" fill="#0c1a0c" stroke="#7ad56a" stroke-width="1"/></svg>
<svg style="left:1674px;top:136px" width="14" height="14"><rect x="1" y="1" width="3" height="3" fill="#cfcfcf"/><rect x="5.5" y="1" width="3" height="3" fill="#cfcfcf"/><rect x="1" y="5.5" width="3" height="3" fill="#cfcfcf"/><rect x="5.5" y="5.5" width="3" height="3" fill="#cfcfcf"/><rect x="10" y="5.5" width="3" height="3" fill="none" stroke="#cfcfcf" stroke-width="0.8"/><rect x="1" y="10" width="3" height="3" fill="#cfcfcf"/><rect x="5.5" y="10" width="3" height="3" fill="#cfcfcf"/><rect x="10" y="10" width="3" height="3" fill="none" stroke="#cfcfcf" stroke-width="0.8"/></svg>
<svg style="left:1694px;top:136px" width="14" height="14"><circle cx="7" cy="7" r="6.3" fill="#e84b4b"/><path d="M7 7V0.7A6.3 6.3 0 0 1 13.3 7Z" fill="#2a2a2a"/><path d="M7 7H0.7A6.3 6.3 0 0 0 7 13.3Z" fill="#f2f2f2"/></svg>
<svg style="left:1714px;top:136px" width="14" height="14"><path d="M2 2H12L7 11.8Z" fill="none" stroke="#a8e898" stroke-width="1.1"/><rect x="0.4" y="0.4" width="3.2" height="3.2" fill="#0c1a0c" stroke="#7ad56a" stroke-width="1"/><rect x="10.4" y="0.4" width="3.2" height="3.2" fill="#0c1a0c" stroke="#7ad56a" stroke-width="1"/><rect x="5.4" y="10.2" width="3.2" height="3.2" fill="#0c1a0c" stroke="#7ad56a" stroke-width="1"/></svg>
<div class="t" style="left:1733px;top:132px;font-size:21px;line-height:20px;height:22px;color:#e8973c;font-family:'Liberation Serif',serif">a</div>
<svg style="left:1668px;top:156px" width="14" height="14"><path d="M2 2H12L7 11.8Z" fill="none" stroke="#a8e898" stroke-width="1.1"/><rect x="0.4" y="0.4" width="3.2" height="3.2" fill="#0c1a0c" stroke="#7ad56a" stroke-width="1"/><rect x="10.4" y="0.4" width="3.2" height="3.2" fill="#0c1a0c" stroke="#7ad56a" stroke-width="1"/><rect x="5.4" y="10.2" width="3.2" height="3.2" fill="#0c1a0c" stroke="#7ad56a" stroke-width="1"/></svg>
<svg style="left:1655px;top:196px" width="14" height="14"><path d="M6.16 5.86L1.39 10.63A1.4 1.4 0 0 0 3.37 12.61L8.14 7.84A4 4 0 0 0 13.39 2.45L11.14 4.70A1.3 1.3 0 0 1 9.31 2.86L11.55 0.61A4 4 0 0 0 6.16 5.86Z" fill="#1c2638" stroke="#86b4f0" stroke-width="1"/></svg>
<svg style="left:1675px;top:196px" width="14" height="14"><rect x="1" y="1" width="3" height="3" fill="#cfcfcf"/><rect x="5.5" y="1" width="3" height="3" fill="#cfcfcf"/><rect x="1" y="5.5" width="3" height="3" fill="#cfcfcf"/><rect x="5.5" y="5.5" width="3" height="3" fill="#cfcfcf"/><rect x="10" y="5.5" width="3" height="3" fill="none" stroke="#cfcfcf" stroke-width="0.8"/><rect x="1" y="10" width="3" height="3" fill="#cfcfcf"/><rect x="5.5" y="10" width="3" height="3" fill="#cfcfcf"/><rect x="10" y="10" width="3" height="3" fill="none" stroke="#cfcfcf" stroke-width="0.8"/></svg>
<svg style="left:1695px;top:196px" width="14" height="14"><path d="M2 2H12L7 11.8Z" fill="none" stroke="#a8e898" stroke-width="1.1"/><rect x="0.4" y="0.4" width="3.2" height="3.2" fill="#0c1a0c" stroke="#7ad56a" stroke-width="1"/><rect x="10.4" y="0.4" width="3.2" height="3.2" fill="#0c1a0c" stroke="#7ad56a" stroke-width="1"/><rect x="5.4" y="10.2" width="3.2" height="3.2" fill="#0c1a0c" stroke="#7ad56a" stroke-width="1"/></svg>
<svg style="left:1663px;top:236px" width="14" height="14"><path d="M6.16 5.86L1.39 10.63A1.4 1.4 0 0 0 3.37 12.61L8.14 7.84A4 4 0 0 0 13.39 2.45L11.14 4.70A1.3 1.3 0 0 1 9.31 2.86L11.55 0.61A4 4 0 0 0 6.16 5.86Z" fill="#1c2638" stroke="#86b4f0" stroke-width="1"/></svg>
<svg style="left:1683px;top:236px" width="14" height="14"><path d="M2 2H12L7 11.8Z" fill="none" stroke="#a8e898" stroke-width="1.1"/><rect x="0.4" y="0.4" width="3.2" height="3.2" fill="#0c1a0c" stroke="#7ad56a" stroke-width="1"/><rect x="10.4" y="0.4" width="3.2" height="3.2" fill="#0c1a0c" stroke="#7ad56a" stroke-width="1"/><rect x="5.4" y="10.2" width="3.2" height="3.2" fill="#0c1a0c" stroke="#7ad56a" stroke-width="1"/></svg>
<svg style="left:1661px;top:256px" width="14" height="14"><path d="M6.16 5.86L1.39 10.63A1.4 1.4 0 0 0 3.37 12.61L8.14 7.84A4 4 0 0 0 13.39 2.45L11.14 4.70A1.3 1.3 0 0 1 9.31 2.86L11.55 0.61A4 4 0 0 0 6.16 5.86Z" fill="#1c2638" stroke="#86b4f0" stroke-width="1"/></svg>
<svg style="left:1682px;top:256px" width="14" height="14"><path d="M2 2H12L7 11.8Z" fill="none" stroke="#a8e898" stroke-width="1.1"/><rect x="0.4" y="0.4" width="3.2" height="3.2" fill="#0c1a0c" stroke="#7ad56a" stroke-width="1"/><rect x="10.4" y="0.4" width="3.2" height="3.2" fill="#0c1a0c" stroke="#7ad56a" stroke-width="1"/><rect x="5.4" y="10.2" width="3.2" height="3.2" fill="#0c1a0c" stroke="#7ad56a" stroke-width="1"/></svg>
<svg style="left:1677px;top:276px" width="14" height="14"><path d="M10.03 10.73L13.06 4.26A2.5 2.5 0 0 0 9.69 0.96L3.29 4.12A5.0 5.0 0 1 0 10.03 10.73Z" fill="#1c2638" stroke="#86b4f0" stroke-width="1"/><circle cx="5.5" cy="8.6" r="2.6" fill="none" stroke="#86b4f0" stroke-width="1.9"/><rect x="10" y="2.5" width="1.7" height="1.7" fill="#86b4f0"/></svg>
<svg style="left:1697px;top:276px" width="14" height="14"><path d="M6.16 5.86L1.39 10.63A1.4 1.4 0 0 0 3.37 12.61L8.14 7.84A4 4 0 0 0 13.39 2.45L11.14 4.70A1.3 1.3 0 0 1 9.31 2.86L11.55 0.61A4 4 0 0 0 6.16 5.86Z" fill="#1c2638" stroke="#86b4f0" stroke-width="1"/></svg>
<svg style="left:1717px;top:276px" width="14" height="14"><path d="M2 2H12L7 11.8Z" fill="none" stroke="#a8e898" stroke-width="1.1"/><rect x="0.4" y="0.4" width="3.2" height="3.2" fill="#0c1a0c" stroke="#7ad56a" stroke-width="1"/><rect x="10.4" y="0.4" width="3.2" height="3.2" fill="#0c1a0c" stroke="#7ad56a" stroke-width="1"/><rect x="5.4" y="10.2" width="3.2" height="3.2" fill="#0c1a0c" stroke="#7ad56a" stroke-width="1"/></svg>
<svg style="left:1737px;top:276px;opacity:1" width="14" height="14"><path d="M0.5 0.7H13.5L7 13.8Z" fill="#e0914a"/><path d="M3.8 3.2H10.2L7 8.6Z" fill="#2a1d12"/></svg>
<svg style="left:1675px;top:296px" width="14" height="14"><path d="M6.16 5.86L1.39 10.63A1.4 1.4 0 0 0 3.37 12.61L8.14 7.84A4 4 0 0 0 13.39 2.45L11.14 4.70A1.3 1.3 0 0 1 9.31 2.86L11.55 0.61A4 4 0 0 0 6.16 5.86Z" fill="#1c2638" stroke="#86b4f0" stroke-width="1"/></svg>
<svg style="left:1695px;top:296px" width="14" height="14"><path d="M2 2H12L7 11.8Z" fill="none" stroke="#a8e898" stroke-width="1.1"/><rect x="0.4" y="0.4" width="3.2" height="3.2" fill="#0c1a0c" stroke="#7ad56a" stroke-width="1"/><rect x="10.4" y="0.4" width="3.2" height="3.2" fill="#0c1a0c" stroke="#7ad56a" stroke-width="1"/><rect x="5.4" y="10.2" width="3.2" height="3.2" fill="#0c1a0c" stroke="#7ad56a" stroke-width="1"/></svg>
<svg style="left:1715px;top:296px;opacity:1" width="14" height="14"><path d="M0.5 0.7H13.5L7 13.8Z" fill="#e0914a"/><path d="M3.8 3.2H10.2L7 8.6Z" fill="#2a1d12"/></svg>
<svg style="left:1676px;top:316px" width="14" height="14"><path d="M10.03 10.73L13.06 4.26A2.5 2.5 0 0 0 9.69 0.96L3.29 4.12A5.0 5.0 0 1 0 10.03 10.73Z" fill="#1c2638" stroke="#86b4f0" stroke-width="1"/><circle cx="5.5" cy="8.6" r="2.6" fill="none" stroke="#86b4f0" stroke-width="1.9"/><rect x="10" y="2.5" width="1.7" height="1.7" fill="#86b4f0"/></svg>
<svg style="left:1696px;top:316px" width="14" height="14"><path d="M6.16 5.86L1.39 10.63A1.4 1.4 0 0 0 3.37 12.61L8.14 7.84A4 4 0 0 0 13.39 2.45L11.14 4.70A1.3 1.3 0 0 1 9.31 2.86L11.55 0.61A4 4 0 0 0 6.16 5.86Z" fill="#1c2638" stroke="#86b4f0" stroke-width="1"/></svg>
<svg style="left:1716px;top:316px" width="14" height="14"><path d="M2 2H12L7 11.8Z" fill="none" stroke="#a8e898" stroke-width="1.1"/><rect x="0.4" y="0.4" width="3.2" height="3.2" fill="#0c1a0c" stroke="#7ad56a" stroke-width="1"/><rect x="10.4" y="0.4" width="3.2" height="3.2" fill="#0c1a0c" stroke="#7ad56a" stroke-width="1"/><rect x="5.4" y="10.2" width="3.2" height="3.2" fill="#0c1a0c" stroke="#7ad56a" stroke-width="1"/></svg>
<svg style="left:1736px;top:316px;opacity:1" width="14" height="14"><path d="M0.5 0.7H13.5L7 13.8Z" fill="#e0914a"/><path d="M3.8 3.2H10.2L7 8.6Z" fill="#2a1d12"/></svg>
<svg style="left:1674px;top:336px" width="14" height="14"><path d="M6.16 5.86L1.39 10.63A1.4 1.4 0 0 0 3.37 12.61L8.14 7.84A4 4 0 0 0 13.39 2.45L11.14 4.70A1.3 1.3 0 0 1 9.31 2.86L11.55 0.61A4 4 0 0 0 6.16 5.86Z" fill="#1c2638" stroke="#86b4f0" stroke-width="1"/></svg>
<svg style="left:1694px;top:336px" width="14" height="14"><path d="M2 2H12L7 11.8Z" fill="none" stroke="#a8e898" stroke-width="1.1"/><rect x="0.4" y="0.4" width="3.2" height="3.2" fill="#0c1a0c" stroke="#7ad56a" stroke-width="1"/><rect x="10.4" y="0.4" width="3.2" height="3.2" fill="#0c1a0c" stroke="#7ad56a" stroke-width="1"/><rect x="5.4" y="10.2" width="3.2" height="3.2" fill="#0c1a0c" stroke="#7ad56a" stroke-width="1"/></svg>
<svg style="left:1714px;top:336px;opacity:1" width="14" height="14"><path d="M0.5 0.7H13.5L7 13.8Z" fill="#e0914a"/><path d="M3.8 3.2H10.2L7 8.6Z" fill="#2a1d12"/></svg>
<svg style="left:1699px;top:356px;opacity:1" width="14" height="14"><rect x="1.5" y="1.5" width="11" height="2.5" fill="none" stroke="#8c8c8c" stroke-width="1"/><path d="M2.5 4.5V12.5H11.5V4.5M5.5 7.5H8.5" fill="none" stroke="#8c8c8c" stroke-width="1"/></svg>
<svg style="left:1719px;top:356px;opacity:1" width="14" height="14"><path d="M0.5 0.7H13.5L7 13.8Z" fill="#8a6a4a"/><path d="M3.8 3.2H10.2L7 8.6Z" fill="#2a1d12"/></svg>
<svg style="left:1739px;top:356px" width="14" height="14"><path d="M2 3H9A3.5 3.5 0 0 1 9 10H2" fill="none" stroke="#8a6a4a" stroke-width="2"/></svg>
<div style="position:absolute;left:1707px;top:362px;width:10px;height:10px;background:#141414;border-radius:5px;"></div>
<div class="t" style="left:1707px;top:359px;width:10px;text-align:center;font-size:8.5px;color:#e0e0e0">2</div>
<div style="position:absolute;left:1727px;top:362px;width:10px;height:10px;background:#141414;border-radius:5px;"></div>
<div class="t" style="left:1727px;top:359px;width:10px;text-align:center;font-size:8.5px;color:#e0e0e0">8</div>
<div style="position:absolute;left:1747px;top:362px;width:10px;height:10px;background:#141414;border-radius:5px;"></div>
<div class="t" style="left:1747px;top:359px;width:10px;text-align:center;font-size:8.5px;color:#e0e0e0">4</div>
<svg style="left:1667px;top:375px" width="14" height="16"><circle cx="7" cy="6" r="5" fill="#8a6030"/><rect x="4.5" y="10" width="5" height="4" fill="#8a6030"/></svg>
<div style="position:absolute;left:1676px;top:382px;width:10px;height:10px;background:#141414;border-radius:5px;"></div>
<div class="t" style="left:1676px;top:379px;width:10px;text-align:center;font-size:8.5px;color:#e0e0e0">2</div>
<svg style="left:1854px;top:77px" width="16" height="12"><path d="M1 6C4 1.5 12 1.5 15 6C12 10.5 4 10.5 1 6Z" fill="none" stroke="#d8d8d8" stroke-width="1.4"/><circle cx="8" cy="6" r="2.5" fill="#d8d8d8"/></svg>
<svg style="left:1875px;top:76px" width="14" height="14"><rect x="1.5" y="2" width="11" height="7.5" fill="none" stroke="#d8d8d8" stroke-width="1.1"/><rect x="3.3" y="3.8" width="7.4" height="4.4" fill="#d8d8d8"/><path d="M7 10V12M3.5 12.5H10.5" stroke="#d8d8d8" stroke-width="1.1"/></svg>
<svg style="left:1895px;top:76px" width="14" height="14"><path d="M1 4H4L5 2H9L10 4H13V12H1Z" fill="none" stroke="#8a8a8a" stroke-width="1"/><path d="M5 5.5L9 9.5M9 5.5L5 9.5" stroke="#cfcfcf" stroke-width="0.9"/></svg>
<svg style="left:1854px;top:97px" width="16" height="12"><path d="M1 6C4 1.5 12 1.5 15 6C12 10.5 4 10.5 1 6Z" fill="none" stroke="#d8d8d8" stroke-width="1.4"/><circle cx="8" cy="6" r="2.5" fill="#d8d8d8"/></svg>
<svg style="left:1875px;top:96px" width="14" height="14"><rect x="1.5" y="2" width="11" height="7.5" fill="none" stroke="#d8d8d8" stroke-width="1.1"/><rect x="3.3" y="3.8" width="7.4" height="4.4" fill="#d8d8d8"/><path d="M7 10V12M3.5 12.5H10.5" stroke="#d8d8d8" stroke-width="1.1"/></svg>
<svg style="left:1895px;top:96px" width="14" height="14"><path d="M1 4H4L5 2H9L10 4H13V12H1Z" fill="#8a8a8a" stroke="#8a8a8a" stroke-width="1"/><circle cx="7" cy="7.5" r="3" fill="none" stroke="#2a2a2a" stroke-width="1.2"/></svg>
<svg style="left:1854px;top:117px" width="16" height="12"><path d="M1 6C4 1.5 12 1.5 15 6C12 10.5 4 10.5 1 6Z" fill="none" stroke="#d8d8d8" stroke-width="1.4"/><circle cx="8" cy="6" r="2.5" fill="#d8d8d8"/></svg>
<svg style="left:1875px;top:116px" width="14" height="14"><rect x="1.5" y="2" width="11" height="7.5" fill="none" stroke="#d8d8d8" stroke-width="1.1"/><rect x="3.3" y="3.8" width="7.4" height="4.4" fill="#d8d8d8"/><path d="M7 10V12M3.5 12.5H10.5" stroke="#d8d8d8" stroke-width="1.1"/></svg>
<svg style="left:1895px;top:116px" width="14" height="14"><path d="M1 4H4L5 2H9L10 4H13V12H1Z" fill="#8a8a8a" stroke="#8a8a8a" stroke-width="1"/><circle cx="7" cy="7.5" r="3" fill="none" stroke="#2a2a2a" stroke-width="1.2"/></svg>
<svg style="left:1854px;top:137px" width="16" height="12"><path d="M1 6C4 1.5 12 1.5 15 6C12 10.5 4 10.5 1 6Z" fill="none" stroke="#d8d8d8" stroke-width="1.4"/><circle cx="8" cy="6" r="2.5" fill="#d8d8d8"/></svg>
<svg style="left:1875px;top:136px" width="14" height="14"><rect x="1.5" y="2" width="11" height="7.5" fill="none" stroke="#d8d8d8" stroke-width="1.1"/><rect x="3.3" y="3.8" width="7.4" height="4.4" fill="#d8d8d8"/><path d="M7 10V12M3.5 12.5H10.5" stroke="#d8d8d8" stroke-width="1.1"/></svg>
<svg style="left:1895px;top:136px" width="14" height="14"><path d="M1 4H4L5 2H9L10 4H13V12H1Z" fill="#8a8a8a" stroke="#8a8a8a" stroke-width="1"/><circle cx="7" cy="7.5" r="3" fill="none" stroke="#2a2a2a" stroke-width="1.2"/></svg>
<svg style="left:1854px;top:157px" width="16" height="12"><path d="M1 5C4 9 12 9 15 5" fill="none" stroke="#9fb6e0" stroke-width="1.1"/></svg>
<svg style="left:1875px;top:156px" width="14" height="14"><rect x="1.5" y="2" width="11" height="7.5" fill="none" stroke="#d8d8d8" stroke-width="1.1"/><rect x="3.3" y="3.8" width="7.4" height="4.4" fill="#d8d8d8"/><path d="M7 10V12M3.5 12.5H10.5" stroke="#d8d8d8" stroke-width="1.1"/></svg>
<svg style="left:1895px;top:156px" width="14" height="14"><path d="M1 4H4L5 2H9L10 4H13V12H1Z" fill="#7d9bd0" stroke="#7d9bd0" stroke-width="1"/><circle cx="7" cy="7.5" r="3" fill="none" stroke="#2a2a2a" stroke-width="1.2"/></svg>
<svg style="left:1854px;top:177px" width="16" height="12"><path d="M1 6C4 1.5 12 1.5 15 6C12 10.5 4 10.5 1 6Z" fill="none" stroke="#d8d8d8" stroke-width="1.4"/><circle cx="8" cy="6" r="2.5" fill="#d8d8d8"/></svg>
<svg style="left:1875px;top:176px" width="14" height="14"><rect x="1.5" y="2" width="11" height="7.5" fill="none" stroke="#d8d8d8" stroke-width="1.1"/><rect x="3.3" y="3.8" width="7.4" height="4.4" fill="#d8d8d8"/><path d="M7 10V12M3.5 12.5H10.5" stroke="#d8d8d8" stroke-width="1.1"/></svg>
<svg style="left:1895px;top:176px" width="14" height="14"><path d="M1 4H4L5 2H9L10 4H13V12H1Z" fill="#d8d8d8" stroke="#d8d8d8" stroke-width="1"/><circle cx="7" cy="7.5" r="3" fill="none" stroke="#2a2a2a" stroke-width="1.2"/></svg>
<svg style="left:1854px;top:197px" width="16" height="12"><path d="M1 6C4 1.5 12 1.5 15 6C12 10.5 4 10.5 1 6Z" fill="none" stroke="#d8d8d8" stroke-width="1.4"/><circle cx="8" cy="6" r="2.5" fill="#d8d8d8"/></svg>
<svg style="left:1875px;top:196px" width="14" height="14"><rect x="1.5" y="2" width="11" height="7.5" fill="none" stroke="#d8d8d8" stroke-width="1.1"/><rect x="3.3" y="3.8" width="7.4" height="4.4" fill="#d8d8d8"/><path d="M7 10V12M3.5 12.5H10.5" stroke="#d8d8d8" stroke-width="1.1"/></svg>
<svg style="left:1895px;top:196px" width="14" height="14"><path d="M1 4H4L5 2H9L10 4H13V12H1Z" fill="#d8d8d8" stroke="#d8d8d8" stroke-width="1"/><circle cx="7" cy="7.5" r="3" fill="none" stroke="#2a2a2a" stroke-width="1.2"/></svg>
<svg style="left:1854px;top:217px" width="16" height="12"><path d="M1 6C4 1.5 12 1.5 15 6C12 10.5 4 10.5 1 6Z" fill="none" stroke="#d8d8d8" stroke-width="1.4"/><circle cx="8" cy="6" r="2.5" fill="#d8d8d8"/></svg>
<svg style="left:1875px;top:216px" width="14" height="14"><rect x="1.5" y="2" width="11" height="7.5" fill="none" stroke="#d8d8d8" stroke-width="1.1"/><rect x="3.3" y="3.8" width="7.4" height="4.4" fill="#d8d8d8"/><path d="M7 10V12M3.5 12.5H10.5" stroke="#d8d8d8" stroke-width="1.1"/></svg>
<svg style="left:1895px;top:216px" width="14" height="14"><path d="M1 4H4L5 2H9L10 4H13V12H1Z" fill="#d8d8d8" stroke="#d8d8d8" stroke-width="1"/><circle cx="7" cy="7.5" r="3" fill="none" stroke="#2a2a2a" stroke-width="1.2"/></svg>
<svg style="left:1854px;top:237px" width="16" height="12"><path d="M1 6C4 1.5 12 1.5 15 6C12 10.5 4 10.5 1 6Z" fill="none" stroke="#d8d8d8" stroke-width="1.4"/><circle cx="8" cy="6" r="2.5" fill="#d8d8d8"/></svg>
<svg style="left:1875px;top:236px" width="14" height="14"><rect x="1.5" y="2" width="11" height="7.5" fill="none" stroke="#d8d8d8" stroke-width="1.1"/><rect x="3.3" y="3.8" width="7.4" height="4.4" fill="#d8d8d8"/><path d="M7 10V12M3.5 12.5H10.5" stroke="#d8d8d8" stroke-width="1.1"/></svg>
<svg style="left:1895px;top:236px" width="14" height="14"><path d="M1 4H4L5 2H9L10 4H13V12H1Z" fill="#d8d8d8" stroke="#d8d8d8" stroke-width="1"/><circle cx="7" cy="7.5" r="3" fill="none" stroke="#2a2a2a" stroke-width="1.2"/></svg>
<svg style="left:1854px;top:257px" width="16" height="12"><path d="M1 6C4 1.5 12 1.5 15 6C12 10.5 4 10.5 1 6Z" fill="none" stroke="#d8d8d8" stroke-width="1.4"/><circle cx="8" cy="6" r="2.5" fill="#d8d8d8"/></svg>
<svg style="left:1875px;top:256px" width="14" height="14"><rect x="1.5" y="2" width="11" height="7.5" fill="none" stroke="#d8d8d8" stroke-width="1.1"/><rect x="3.3" y="3.8" width="7.4" height="4.4" fill="#d8d8d8"/><path d="M7 10V12M3.5 12.5H10.5" stroke="#d8d8d8" stroke-width="1.1"/></svg>
<svg style="left:1895px;top:256px" width="14" height="14"><path d="M1 4H4L5 2H9L10 4H13V12H1Z" fill="#d8d8d8" stroke="#d8d8d8" stroke-width="1"/><circle cx="7" cy="7.5" r="3" fill="none" stroke="#2a2a2a" stroke-width="1.2"/></svg>
<svg style="left:1854px;top:277px" width="16" height="12"><path d="M1 6C4 1.5 12 1.5 15 6C12 10.5 4 10.5 1 6Z" fill="none" stroke="#d8d8d8" stroke-width="1.4"/><circle cx="8" cy="6" r="2.5" fill="#d8d8d8"/></svg>
<svg style="left:1875px;top:276px" width="14" height="14"><rect x="1.5" y="2" width="11" height="7.5" fill="none" stroke="#d8d8d8" stroke-width="1.1"/><rect x="3.3" y="3.8" width="7.4" height="4.4" fill="#d8d8d8"/><path d="M7 10V12M3.5 12.5H10.5" stroke="#d8d8d8" stroke-width="1.1"/></svg>
<svg style="left:1895px;top:276px" width="14" height="14"><path d="M1 4H4L5 2H9L10 4H13V12H1Z" fill="#d8d8d8" stroke="#d8d8d8" stroke-width="1"/><circle cx="7" cy="7.5" r="3" fill="none" stroke="#2a2a2a" stroke-width="1.2"/></svg>
<svg style="left:1854px;top:297px" width="16" height="12"><path d="M1 6C4 1.5 12 1.5 15 6C12 10.5 4 10.5 1 6Z" fill="none" stroke="#d8d8d8" stroke-width="1.4"/><circle cx="8" cy="6" r="2.5" fill="#d8d8d8"/></svg>
<svg style="left:1875px;top:296px" width="14" height="14"><rect x="1.5" y="2" width="11" height="7.5" fill="none" stroke="#d8d8d8" stroke-width="1.1"/><rect x="3.3" y="3.8" width="7.4" height="4.4" fill="#d8d8d8"/><path d="M7 10V12M3.5 12.5H10.5" stroke="#d8d8d8" stroke-width="1.1"/></svg>
<svg style="left:1895px;top:296px" width="14" height="14"><path d="M1 4H4L5 2H9L10 4H13V12H1Z" fill="#d8d8d8" stroke="#d8d8d8" stroke-width="1"/><circle cx="7" cy="7.5" r="3" fill="none" stroke="#2a2a2a" stroke-width="1.2"/></svg>
<svg style="left:1854px;top:317px" width="16" height="12"><path d="M1 6C4 1.5 12 1.5 15 6C12 10.5 4 10.5 1 6Z" fill="none" stroke="#d8d8d8" stroke-width="1.4"/><circle cx="8" cy="6" r="2.5" fill="#d8d8d8"/></svg>
<svg style="left:1875px;top:316px" width="14" height="14"><rect x="1.5" y="2" width="11" height="7.5" fill="none" stroke="#d8d8d8" stroke-width="1.1"/><rect x="3.3" y="3.8" width="7.4" height="4.4" fill="#d8d8d8"/><path d="M7 10V12M3.5 12.5H10.5" stroke="#d8d8d8" stroke-width="1.1"/></svg>
<svg style="left:1895px;top:316px" width="14" height="14"><path d="M1 4H4L5 2H9L10 4H13V12H1Z" fill="#d8d8d8" stroke="#d8d8d8" stroke-width="1"/><circle cx="7" cy="7.5" r="3" fill="none" stroke="#2a2a2a" stroke-width="1.2"/></svg>
<svg style="left:1854px;top:337px" width="16" height="12"><path d="M1 6C4 1.5 12 1.5 15 6C12 10.5 4 10.5 1 6Z" fill="none" stroke="#d8d8d8" stroke-width="1.4"/><circle cx="8" cy="6" r="2.5" fill="#d8d8d8"/></svg>
<svg style="left:1875px;top:336px" width="14" height="14"><rect x="1.5" y="2" width="11" height="7.5" fill="none" stroke="#d8d8d8" stroke-width="1.1"/><rect x="3.3" y="3.8" width="7.4" height="4.4" fill="#d8d8d8"/><path d="M7 10V12M3.5 12.5H10.5" stroke="#d8d8d8" stroke-width="1.1"/></svg>
<svg style="left:1895px;top:336px" width="14" height="14"><path d="M1 4H4L5 2H9L10 4H13V12H1Z" fill="#d8d8d8" stroke="#d8d8d8" stroke-width="1"/><circle cx="7" cy="7.5" r="3" fill="none" stroke="#2a2a2a" stroke-width="1.2"/></svg>
<svg style="left:1854px;top:357px" width="16" height="12"><path d="M1 5C4 9 12 9 15 5" fill="none" stroke="#8a8a8a" stroke-width="1.1"/></svg>
<svg style="left:1875px;top:356px" width="14" height="14"><rect x="1.5" y="2" width="11" height="7.5" fill="none" stroke="#d8d8d8" stroke-width="1.1"/><rect x="3.3" y="3.8" width="7.4" height="4.4" fill="#d8d8d8"/><path d="M7 10V12M3.5 12.5H10.5" stroke="#d8d8d8" stroke-width="1.1"/></svg>
<svg style="left:1895px;top:356px" width="14" height="14"><path d="M1 4H4L5 2H9L10 4H13V12H1Z" fill="none" stroke="#8a8a8a" stroke-width="1"/><path d="M5 5.5L9 9.5M9 5.5L5 9.5" stroke="#cfcfcf" stroke-width="0.9"/></svg>
<svg style="left:1854px;top:377px" width="16" height="12"><path d="M1 6C4 1.5 12 1.5 15 6C12 10.5 4 10.5 1 6Z" fill="none" stroke="#9a9a9a" stroke-width="1.4"/><circle cx="8" cy="6" r="2.5" fill="#9a9a9a"/></svg>
<svg style="left:1875px;top:376px" width="14" height="14"><rect x="1.5" y="2" width="11" height="7.5" fill="none" stroke="#9a9a9a" stroke-width="1.1"/><path d="M7 10V12M3.5 12.5H10.5" stroke="#9a9a9a" stroke-width="1.1"/></svg>
<svg style="left:1895px;top:376px" width="14" height="14"><path d="M1 4H4L5 2H9L10 4H13V12H1Z" fill="#d8d8d8" stroke="#d8d8d8" stroke-width="1"/><circle cx="7" cy="7.5" r="3" fill="none" stroke="#2a2a2a" stroke-width="1.2"/></svg>
<div style="position:absolute;left:1530px;top:513px;width:388px;height:521px;background:#424242;border-radius:6px 0 0 6px;overflow:hidden;"></div>
<div style="position:absolute;left:1530px;top:513px;width:388px;height:26px;background:#303030;border-radius:6px 0 0 0;"></div>
<div style="position:absolute;left:1530px;top:539px;width:28px;height:495px;background:#282828;border-radius:0 0 0 6px;"></div>
<div style="position:absolute;left:1539px;top:518px;width:30px;height:18px;background:#282828;border-radius:4px;"></div>
<svg style="left:1542px;top:517px" width="26" height="18"><rect x="1" y="1.5" width="14" height="6" rx="3" fill="#dcdcdc"/><rect x="6.5" y="2.7" width="7.3" height="3.6" rx="1.8" fill="#282828"/><rect x="1" y="9.5" width="14" height="6" rx="3" fill="#dcdcdc"/><rect x="9.5" y="10.7" width="4.3" height="3.6" rx="1.8" fill="#282828"/><path d="M18 7L20.5 9.5L23 7" fill="none" stroke="#aaa" stroke-width="1.1"/></svg>
<svg style="left:1583px;top:518px" width="15" height="15"><path d="M1 4V1H4M11 1H14V4M14 11V14H11M4 14H1V11" fill="none" stroke="#d0d0d0" stroke-width="1"/><rect x="4" y="4" width="7" height="7" fill="#e0e0e0"/></svg>
<div class="t" style="left:1607px;top:516.7px;font-size:11.3px;color:#e0e0e0;">Spring</div>
<svg style="left:1895px;top:518px" width="15" height="15"><path d="M9 1.5L13.5 6M10.5 3L6 5.5L4.5 5L10 10.5L9.5 9L12 4.5M7 8L1.5 13.5" fill="none" stroke="#9a9a9a" stroke-width="1.1"/></svg>
<div style="position:absolute;left:1568px;top:547px;width:343px;height:18px;background:#282828;border-radius:4px;"></div>
<div class="t" style="left:1574px;top:547.7px;font-size:11.3px;color:#e0e0e0;">Add Modifier</div>
<svg style="left:1899px;top:554px" width="8" height="5"><path d="M0.5 0.5L4 4L7.5 0.5" fill="none" stroke="#cfcfcf" stroke-width="1.2"/></svg>
<div style="position:absolute;left:1532px;top:546px;width:26px;height:26px;background:#303030;border-radius:4px 0 0 4px;"></div>
<div style="position:absolute;left:1532px;top:582px;width:26px;height:26px;background:#303030;border-radius:4px 0 0 4px;"></div>
<div style="position:absolute;left:1532px;top:611px;width:26px;height:26px;background:#303030;border-radius:4px 0 0 4px;"></div>
<div style="position:absolute;left:1532px;top:638px;width:26px;height:26px;background:#303030;border-radius:4px 0 0 4px;"></div>
<div style="position:absolute;left:1532px;top:667px;width:26px;height:26px;background:#303030;border-radius:4px 0 0 4px;"></div>
<div style="position:absolute;left:1532px;top:695px;width:26px;height:26px;background:#303030;border-radius:4px 0 0 4px;"></div>
<div style="position:absolute;left:1532px;top:731px;width:26px;height:26px;background:#303030;border-radius:4px 0 0 4px;"></div>
<div style="position:absolute;left:1532px;top:759px;width:26px;height:26px;background:#424242;border-radius:4px 0 0 4px;"></div>
<div style="position:absolute;left:1532px;top:787px;width:26px;height:26px;background:#303030;border-radius:4px 0 0 4px;"></div>
<div style="position:absolute;left:1532px;top:815px;width:26px;height:26px;background:#303030;border-radius:4px 0 0 4px;"></div>
<div style="position:absolute;left:1532px;top:843px;width:26px;height:26px;background:#303030;border-radius:4px 0 0 4px;"></div>
<div style="position:absolute;left:1532px;top:871px;width:26px;height:26px;background:#303030;border-radius:4px 0 0 4px;"></div>
<div style="position:absolute;left:1532px;top:899px;width:26px;height:26px;background:#303030;border-radius:4px 0 0 4px;"></div>
<div style="position:absolute;left:1532px;top:935px;width:26px;height:26px;background:#303030;border-radius:4px 0 0 4px;"></div>
<svg style="left:1537px;top:551px" width="16" height="16"><path d="M3 1V8" stroke="#d8d8d8" stroke-width="1"/><circle cx="3" cy="12" r="2.2" fill="#d8d8d8"/><path d="M9.5 1V5.5A2.5 2.5 0 0 0 14.5 5.5V1M12 7V14" fill="none" stroke="#d8d8d8" stroke-width="2"/></svg>
<svg style="left:1537px;top:587px" width="16" height="16"><rect x="1.5" y="5" width="12" height="9" fill="none" stroke="#d8d8d8" stroke-width="1.3"/><path d="M4 5V2.5H9V5" fill="none" stroke="#d8d8d8" stroke-width="1.3"/><path d="M11 7H13M11 9.5H13M11 12H13" stroke="#d8d8d8"/><rect x="3" y="7" width="6" height="5" fill="#d8d8d8"/></svg>
<svg style="left:1537px;top:616px" width="16" height="16"><rect x="1" y="2" width="14" height="3" fill="#d8d8d8"/><path d="M3 5V14H13V5" fill="none" stroke="#d8d8d8" stroke-width="1.3"/><path d="M5 13L8 8L11 13Z" fill="#d8d8d8"/></svg>
<svg style="left:1537px;top:643px" width="16" height="16"><rect x="5.5" y="1.5" width="9" height="9" fill="none" stroke="#d8d8d8" stroke-width="1.1"/><path d="M3.5 3.5V12.5H12.5M1.5 5.5V14.5H10.5" fill="none" stroke="#d8d8d8" stroke-width="1"/><path d="M6.5 9.5L9.5 5L11 8L13.5 3V9.5Z" fill="#d8d8d8"/></svg>
<svg style="left:1537px;top:672px" width="16" height="16"><path d="M5 2L1.5 10A3 3 0 0 0 8.5 10Z" fill="#d8d8d8"/><circle cx="12.5" cy="3" r="2" fill="#d8d8d8"/><circle cx="10" cy="11.5" r="3.5" fill="#303030" stroke="#d8d8d8" stroke-width="1.1"/></svg>
<svg style="left:1537px;top:700px" width="16" height="16"><circle cx="8" cy="8" r="6.5" fill="none" stroke="#e05a5a" stroke-width="1.5"/><path d="M3 5C6 5 7 8 5 10C4 12 6 14 6 14M10 2C9 5 12 6 14 6M9 9C10 11 12 11 13 12" fill="none" stroke="#e05a5a" stroke-width="2"/></svg>
<svg style="left:1537px;top:736px" width="16" height="16"><path d="M1 4.5V1H4.5M11.5 1H15V4.5M15 11.5V15H11.5M4.5 15H1V11.5" fill="none" stroke="#e8973c" stroke-width="1.1"/><rect x="4" y="4" width="8" height="8" fill="#e8973c"/></svg>
<svg style="left:1537px;top:764px" width="16" height="16"><path d="M2.5 13.5L8 8M9 2A3.5 3.5 0 0 1 14 7L12 7L10 5L10.5 2.5M8 8A3.5 3.5 0 0 0 13 7.5" fill="none" stroke="#6d9fe8" stroke-width="2.3" stroke-linecap="round"/></svg>
<svg style="left:1537px;top:792px" width="16" height="16"><circle cx="3" cy="3" r="2" fill="#6d9fe8"/><circle cx="13" cy="3" r="1.7" fill="#6d9fe8"/><circle cx="3" cy="13" r="1.7" fill="#6d9fe8"/><circle cx="13" cy="13" r="1.7" fill="#6d9fe8"/><path d="M3 3H13M3 3V13M3 3L13 13" stroke="#6d9fe8" stroke-width="1.1"/></svg>
<svg style="left:1537px;top:820px" width="16" height="16"><circle cx="7" cy="9" r="5.5" fill="none" stroke="#6d9fe8" stroke-width="1.6" stroke-dasharray="26 8"/><circle cx="7" cy="9" r="2.3" fill="#6d9fe8"/><circle cx="13" cy="3" r="1.8" fill="#6d9fe8"/></svg>
<svg style="left:1537px;top:848px" width="16" height="16"><path d="M3 11C1 8 3 4 9 2C13 1 15 3 14 6C13 10 8 14 5 13" fill="none" stroke="#6d9fe8" stroke-width="1.4"/><circle cx="6.5" cy="9" r="3.2" fill="none" stroke="#6d9fe8" stroke-width="1.3"/><circle cx="6.5" cy="9" r="1.3" fill="#6d9fe8"/></svg>
<svg style="left:1537px;top:876px" width="16" height="16"><path d="M3 3H13L8 13Z" fill="none" stroke="#73d25f" stroke-width="1.2"/><rect x="1.2" y="1.2" width="3.6" height="3.6" fill="#282828" stroke="#73d25f" stroke-width="1"/><rect x="11.2" y="1.2" width="3.6" height="3.6" fill="#282828" stroke="#73d25f" stroke-width="1"/><rect x="6.2" y="11.2" width="3.6" height="3.6" fill="#282828" stroke="#73d25f" stroke-width="1"/></svg>
<svg style="left:1537px;top:904px" width="16" height="16"><circle cx="8" cy="8" r="7" fill="#e84b4b"/><path d="M8 8V1A7 7 0 0 1 15 8Z" fill="#2a2a2a"/><path d="M8 8H1A7 7 0 0 0 8 15Z" fill="#2a2a2a"/></svg>
<svg style="left:1537px;top:940px" width="16" height="16"><rect x="1" y="1" width="14" height="14" fill="#e84b4b"/><path d="M1 1h3.5v3.5H1zM8 1h3.5v3.5H8zM4.5 4.5H8V8H4.5zM11.5 4.5H15V8h-3.5zM1 8h3.5v3.5H1zM8 8h3.5v3.5H8zM4.5 11.5H8V15H4.5zM11.5 11.5H15V15h-3.5z" fill="#2a2a2a"/></svg>
<div style="position:absolute;left:1905px;top:842px;width:13px;height:162px;background:#4b5263;border-radius:3px 0 0 3px;"></div>
<div style="position:absolute;left:0px;top:1036px;width:1918px;height:19px;background:#2e2e2e;"></div>
<svg style="left:11px;top:1038px" width="14" height="17"><rect x="1.5" y="1.5" width="9" height="14" rx="3.5" fill="none" stroke="#bdbdbd" stroke-width="1.1"/><path d="M6 1.5H4.5A3 3 0 0 0 1.5 4.5V8H6Z" fill="#bdbdbd"/></svg>
<div class="t" style="left:34px;top:1037.7px;font-size:11.3px;color:#cfcfcf;">Select</div>
<svg style="left:76px;top:1038px" width="14" height="17"><rect x="1.5" y="1.5" width="9" height="14" rx="3.5" fill="none" stroke="#bdbdbd" stroke-width="1.1"/><path d="M6 1.5H4.5A3 3 0 0 0 1.5 4.5V8H6Z" fill="#bdbdbd"/></svg>
<svg style="left:88px;top:1038px" width="6" height="10"><path d="M1 1V6M4 1V4" stroke="#d0d0d0" stroke-width="1"/></svg>
<div class="t" style="left:100px;top:1037.7px;font-size:11.3px;color:#cfcfcf;">Box Select</div>
<svg style="left:248px;top:1038px" width="14" height="17"><rect x="1.5" y="1.5" width="9" height="14" rx="3.5" fill="none" stroke="#bdbdbd" stroke-width="1.1"/><rect x="5.3" y="3" width="1.6" height="4.5" fill="#bdbdbd"/></svg>
<div class="t" style="left:270px;top:1037.7px;font-size:11.3px;color:#cfcfcf;">Zoom View</div>
<svg style="left:482px;top:1038px" width="14" height="17"><rect x="1.5" y="1.5" width="9" height="14" rx="3.5" fill="none" stroke="#bdbdbd" stroke-width="1.1"/><path d="M6 1.5H7.5A3 3 0 0 1 10.5 4.5V8H6Z" fill="#bdbdbd"/></svg>
<svg style="left:494px;top:1038px" width="6" height="10"><path d="M1 1V6M4 1V4" stroke="#d0d0d0" stroke-width="1"/></svg>
<div class="t" style="left:506px;top:1037.7px;font-size:11.3px;color:#cfcfcf;">Lasso Select</div>
<div class="t" style="right:28px;top:1037.7px;font-size:11.45px;color:#cfcfcf;">Controls | Spring | Verts:4,942 | Faces:3,149 | Tris:5,537 | Objects:0/394 | Mem: 33.0 MB | v2.80.75</div>
<div style="position:absolute;left:0px;top:517px;width:527px;height:517px;background:#232323;border-radius:0 6px 6px 0;overflow:hidden;"></div>
<svg style="left:0px;top:517px" width="527" height="517"><path d="M8.5 25V517" stroke="#1a1a1a" stroke-width="1"/><path d="M19.5 25V517" stroke="#151515" stroke-width="1"/><path d="M31.5 25V517" stroke="#1a1a1a" stroke-width="1"/><path d="M43.5 25V517" stroke="#1a1a1a" stroke-width="1"/><path d="M55.5 25V517" stroke="#1a1a1a" stroke-width="1"/><path d="M66.5 25V517" stroke="#1a1a1a" stroke-width="1"/><path d="M78.5 25V517" stroke="#151515" stroke-width="1"/><path d="M90.5 25V517" stroke="#1a1a1a" stroke-width="1"/><path d="M101.5 25V517" stroke="#1a1a1a" stroke-width="1"/><path d="M113.5 25V517" stroke="#1a1a1a" stroke-width="1"/><path d="M125.5 25V517" stroke="#1a1a1a" stroke-width="1"/><path d="M136.5 25V517" stroke="#0d0d0d" stroke-width="1"/><path d="M148.5 25V517" stroke="#1a1a1a" stroke-width="1"/><path d="M160.5 25V517" stroke="#1a1a1a" stroke-width="1"/><path d="M171.5 25V517" stroke="#1a1a1a" stroke-width="1"/><path d="M183.5 25V517" stroke="#1a1a1a" stroke-width="1"/><path d="M195.5 25V517" stroke="#151515" stroke-width="1"/><path d="M206.5 25V517" stroke="#1a1a1a" stroke-width="1"/><path d="M218.5 25V517" stroke="#1a1a1a" stroke-width="1"/><path d="M230.5 25V517" stroke="#1a1a1a" stroke-width="1"/><path d="M241.5 25V517" stroke="#1a1a1a" stroke-width="1"/><path d="M253.5 25V517" stroke="#151515" stroke-width="1"/><path d="M265.5 25V517" stroke="#1a1a1a" stroke-width="1"/><path d="M277.5 25V517" stroke="#1a1a1a" stroke-width="1"/><path d="M288.5 25V517" stroke="#1a1a1a" stroke-width="1"/><path d="M300.5 25V517" stroke="#1a1a1a" stroke-width="1"/><path d="M312.5 25V517" stroke="#151515" stroke-width="1"/><path d="M323.5 25V517" stroke="#1a1a1a" stroke-width="1"/><path d="M335.5 25V517" stroke="#1a1a1a" stroke-width="1"/><path d="M347.5 25V517" stroke="#1a1a1a" stroke-width="1"/><path d="M358.5 25V517" stroke="#1a1a1a" stroke-width="1"/><path d="M370.5 25V517" stroke="#151515" stroke-width="1"/><path d="M382.5 25V517" stroke="#1a1a1a" stroke-width="1"/><path d="M393.5 25V517" stroke="#1a1a1a" stroke-width="1"/><path d="M405.5 25V517" stroke="#1a1a1a" stroke-width="1"/><path d="M417.5 25V517" stroke="#1a1a1a" stroke-width="1"/><path d="M428.5 25V517" stroke="#151515" stroke-width="1"/><path d="M440.5 25V517" stroke="#1a1a1a" stroke-width="1"/><path d="M452.5 25V517" stroke="#1a1a1a" stroke-width="1"/><path d="M463.5 25V517" stroke="#1a1a1a" stroke-width="1"/><path d="M475.5 25V517" stroke="#1a1a1a" stroke-width="1"/><path d="M487.5 25V517" stroke="#151515" stroke-width="1"/><path d="M499.5 25V517" stroke="#1a1a1a" stroke-width="1"/><path d="M510.5 25V517" stroke="#1a1a1a" stroke-width="1"/><path d="M522.5 25V517" stroke="#1a1a1a" stroke-width="1"/><path d="M0 32.5H527" stroke="#1a1a1a" stroke-width="1"/><path d="M0 44.5H527" stroke="#1a1a1a" stroke-width="1"/><path d="M0 55.5H527" stroke="#151515" stroke-width="1"/><path d="M0 67.5H527" stroke="#1a1a1a" stroke-width="1"/><path d="M0 79.5H527" stroke="#1a1a1a" stroke-width="1"/><path d="M0 90.5H527" stroke="#1a1a1a" stroke-width="1"/><path d="M0 102.5H527" stroke="#1a1a1a" stroke-width="1"/><path d="M0 114.5H527" stroke="#151515" stroke-width="1"/><path d="M0 125.5H527" stroke="#1a1a1a" stroke-width="1"/><path d="M0 137.5H527" stroke="#1a1a1a" stroke-width="1"/><path d="M0 149.5H527" stroke="#1a1a1a" stroke-width="1"/><path d="M0 161.5H527" stroke="#1a1a1a" stroke-width="1"/><path d="M0 172.5H527" stroke="#151515" stroke-width="1"/><path d="M0 184.5H527" stroke="#1a1a1a" stroke-width="1"/><path d="M0 196.5H527" stroke="#1a1a1a" stroke-width="1"/><path d="M0 207.5H527" stroke="#1a1a1a" stroke-width="1"/><path d="M0 219.5H527" stroke="#1a1a1a" stroke-width="1"/><path d="M0 231.5H527" stroke="#151515" stroke-width="1"/><path d="M0 242.5H527" stroke="#1a1a1a" stroke-width="1"/><path d="M0 254.5H527" stroke="#1a1a1a" stroke-width="1"/><path d="M0 266.5H527" stroke="#1a1a1a" stroke-width="1"/><path d="M0 277.5H527" stroke="#1a1a1a" stroke-width="1"/><path d="M0 289.5H527" stroke="#151515" stroke-width="1"/><path d="M0 301.5H527" stroke="#1a1a1a" stroke-width="1"/><path d="M0 312.5H527" stroke="#1a1a1a" stroke-width="1"/><path d="M0 324.5H527" stroke="#1a1a1a" stroke-width="1"/><path d="M0 336.5H527" stroke="#1a1a1a" stroke-width="1"/><path d="M0 347.5H527" stroke="#0d0d0d" stroke-width="1"/><path d="M0 359.5H527" stroke="#1a1a1a" stroke-width="1"/><path d="M0 371.5H527" stroke="#1a1a1a" stroke-width="1"/><path d="M0 383.5H527" stroke="#1a1a1a" stroke-width="1"/><path d="M0 394.5H527" stroke="#1a1a1a" stroke-width="1"/><path d="M0 406.5H527" stroke="#151515" stroke-width="1"/><path d="M0 418.5H527" stroke="#1a1a1a" stroke-width="1"/><path d="M0 429.5H527" stroke="#1a1a1a" stroke-width="1"/><path d="M0 441.5H527" stroke="#1a1a1a" stroke-width="1"/><path d="M0 453.5H527" stroke="#1a1a1a" stroke-width="1"/><path d="M0 464.5H527" stroke="#151515" stroke-width="1"/><path d="M0 476.5H527" stroke="#1a1a1a" stroke-width="1"/><path d="M0 488.5H527" stroke="#1a1a1a" stroke-width="1"/><path d="M0 499.5H527" stroke="#1a1a1a" stroke-width="1"/><path d="M0 511.5H527" stroke="#1a1a1a" stroke-width="1"/></svg>
<div style="position:absolute;left:0px;top:517px;width:527px;height:25px;background:#333333;border-radius:0 6px 0 0;"></div>
<div class="t" style="left:0px;top:521.7px;font-size:11.3px;color:#e0e0e0;">Add</div>
<div class="t" style="left:33px;top:521.7px;font-size:11.3px;color:#e0e0e0;">Node</div>
<div style="position:absolute;left:77px;top:524px;width:11px;height:11px;background:#4772b3;border-radius:2px;"></div>
<svg style="left:77px;top:524px" width="11" height="11"><path d="M2.3 5.5L4.5 7.8L8.7 3" fill="none" stroke="#fff" stroke-width="1.6"/></svg>
<div class="t" style="left:97px;top:521.7px;font-size:11.3px;color:#e0e0e0;">Use Nodes</div>
<div style="position:absolute;left:176px;top:521px;width:78px;height:18px;background:#2b2b2b;border-radius:4px;"></div>
<div class="t" style="left:183px;top:521.7px;font-size:11.3px;color:#8a8a8a;">Slot 1</div>
<svg style="left:242px;top:528px" width="8" height="5"><path d="M0.5 0.5L4 4L7.5 0.5" fill="none" stroke="#8a8a8a" stroke-width="1.2"/></svg>
<div style="position:absolute;left:261px;top:521px;width:31px;height:18px;background:#2b2b2b;border-radius:4px 0 0 4px;"></div>
<svg style="left:264px;top:523px" width="24" height="14"><circle cx="7" cy="7" r="5.8" fill="#b8b8b8"/><path d="M7 7V1.2A5.8 5.8 0 0 1 12.8 7Z" fill="#3a3a3a"/><path d="M7 7H1.2A5.8 5.8 0 0 0 7 12.8Z" fill="#3a3a3a"/><path d="M16 6L18.5 8.5L21 6" fill="none" stroke="#8a8a8a" stroke-width="1.1"/></svg>
<div style="position:absolute;left:292px;top:521px;width:120px;height:18px;background:#252525;"></div>
<div class="t" style="left:299px;top:521.7px;font-size:11.3px;color:#8a8a8a;">Image</div>
<div style="position:absolute;left:412px;top:521px;width:24px;height:18px;background:#3a3a3a;"></div>
<div class="t" style="left:324px;width:200px;text-align:center;top:521.7px;font-size:11.3px;color:#8a8a8a;">3</div>
<div style="position:absolute;left:436px;top:521px;width:19px;height:18px;background:#4772b3;"></div>
<svg style="left:439px;top:523px" width="14" height="14"><path d="M7 1L12 3V7C12 10 9.5 12 7 13C4.5 12 2 10 2 7V3Z" fill="#e8e8e8"/><path d="M4.5 7L6.5 9L10 5" fill="none" stroke="#4772b3" stroke-width="1.4"/></svg>
<div style="position:absolute;left:455px;top:521px;width:20px;height:18px;background:#3a3a3a;"></div>
<div style="position:absolute;left:475px;top:521px;width:20px;height:18px;background:#3a3a3a;border-radius:0 4px 4px 0;"></div>
<svg style="left:457px;top:523px" width="36" height="14"><path d="M3 4V12H9M6 2H10L12 4V10H6Z" fill="none" stroke="#8a8a8a" stroke-width="1"/><path d="M24 3L31 10M31 3L24 10" stroke="#8a8a8a" stroke-width="1"/></svg>
<svg style="left:503px;top:522px" width="16" height="16"><path d="M9.5 1.5L14.5 6.5" stroke="#f0f0f0" stroke-width="2"/><path d="M10.5 3L6 5.5L4 5L11 12L10.5 10L13 5.5Z" fill="#f0f0f0"/><path d="M7.5 8.5L1.5 14.5" stroke="#f0f0f0" stroke-width="1.1"/></svg>
<div style="position:absolute;left:0px;top:555px;width:7px;height:16px;background:#1a1a1a;border-radius:0 6px 6px 0;"></div>
<svg style="left:0px;top:559px" width="6" height="8"><path d="M1 0.5L4.5 4L1 7.5" fill="none" stroke="#8a8a8a" stroke-width="1"/></svg>
<div style="position:absolute;left:520px;top:555px;width:7px;height:16px;background:#1a1a1a;border-radius:6px 0 0 6px;"></div>
<svg style="left:521px;top:559px" width="6" height="8"><path d="M4.5 0.5L1 4L4.5 7.5" fill="none" stroke="#8a8a8a" stroke-width="1"/></svg>
<div class="t" style="left:30px;top:992.7px;font-size:11.3px;color:#f0f0f0;">Image</div>
<div style="position:absolute;left:334px;top:650.2px;width:93px;height:2.6px;background:#8a8a8a;box-shadow:0 0 0 0.5px rgba(0,0,0,0.5);"></div>
<div style="position:absolute;left:334px;top:662.3000000000001px;width:93px;height:2.6px;background:#8a8a8a;box-shadow:0 0 0 0.5px rgba(0,0,0,0.5);"></div>
<div style="position:absolute;left:334px;top:675.3000000000001px;width:93px;height:2.6px;background:#8a8a8a;box-shadow:0 0 0 0.5px rgba(0,0,0,0.5);"></div>
<div style="position:absolute;left:334px;top:688.3000000000001px;width:93px;height:2.6px;background:#8a8a8a;box-shadow:0 0 0 0.5px rgba(0,0,0,0.5);"></div>
<div style="position:absolute;left:334px;top:701.3000000000001px;width:93px;height:2.6px;background:#8a8a8a;box-shadow:0 0 0 0.5px rgba(0,0,0,0.5);"></div>
<div style="position:absolute;left:175px;top:733.2px;width:77px;height:2.6px;background:#8a8a8a;box-shadow:0 0 0 0.5px rgba(0,0,0,0.5);"></div>
<div style="position:absolute;left:508px;top:605.1px;width:19px;height:2.6px;background:#8a8a8a;box-shadow:0 0 0 0.5px rgba(0,0,0,0.5);"></div>
<div style="position:absolute;left:508px;top:662.3000000000001px;width:19px;height:2.6px;background:#8a8a8a;box-shadow:0 0 0 0.5px rgba(0,0,0,0.5);"></div>
<div style="position:absolute;left:508px;top:675.3000000000001px;width:19px;height:2.6px;background:#8a8a8a;box-shadow:0 0 0 0.5px rgba(0,0,0,0.5);"></div>
<div style="position:absolute;left:508px;top:688.3000000000001px;width:19px;height:2.6px;background:#8a8a8a;box-shadow:0 0 0 0.5px rgba(0,0,0,0.5);"></div>
<div style="position:absolute;left:393px;top:702px;width:2.6px;height:148.6px;background:#8a8a8a;box-shadow:0 0 0 0.5px rgba(0,0,0,0.5);"></div>
<div style="position:absolute;left:394px;top:849.3000000000001px;width:133px;height:2.6px;background:#8a8a8a;box-shadow:0 0 0 0.5px rgba(0,0,0,0.5);"></div>
<svg style="left:388px;top:783px" width="13" height="10"><path d="M1.5 1.5L6.5 4L11.5 1.5L6.5 9Z" fill="#8a8a8a"/></svg>
<svg style="left:480px;top:845px" width="10" height="12"><path d="M1.5 1L4 6L1.5 11L9 6Z" fill="#8a8a8a"/></svg>
<div style="position:absolute;left:392.3px;top:700.6px;width:4px;height:4px;border-radius:50%;background:#6363c7;box-shadow:0 0 0 0.7px #111"></div>
<div style="position:absolute;left:392.3px;top:848.6px;width:4px;height:4px;border-radius:50%;background:#6363c7;box-shadow:0 0 0 0.7px #111"></div>
<div style="position:absolute;left:427px;top:586px;width:81px;height:125px;background:rgba(64,64,64,0.93);border-radius:3px;box-shadow:0 1px 3px rgba(0,0,0,0.5);"></div>
<div style="position:absolute;left:427px;top:586px;width:81px;height:11px;background:#3b5b2b;border-radius:3px 3px 0 0;"></div>
<svg style="left:431px;top:589px" width="6" height="5"><path d="M0.5 0.5H5L2.75 4Z" fill="#e0e0e0"/></svg>
<div class="t" style="left:438px;top:585.5px;font-size:7.0px;line-height:12px;height:12px;color:#e0e0e0">Occlusion</div>
<svg style="left:495px;top:587px" width="10" height="9"><rect x="1" y="1" width="7" height="3" fill="#e0e0e0"/><rect x="0" y="5" width="7" height="3" fill="#e0e0e0"/><path d="M8 2.5H9V6.5H7.5" fill="none" stroke="#e0e0e0" stroke-width="0.8"/></svg>
<div class="t" style="left:377px;width:120px;text-align:right;top:600.4px;font-size:7.0px;line-height:12px;height:12px;color:#d8d8d8">AO Mix</div>
<div style="position:absolute;left:506px;top:604.4px;width:4px;height:4px;border-radius:50%;background:#c7c729;box-shadow:0 0 0 0.7px #111"></div>
<div class="t" style="left:377px;width:120px;text-align:right;top:612.3px;font-size:7.0px;line-height:12px;height:12px;color:#d8d8d8">AO Color</div>
<div style="position:absolute;left:506px;top:616.3px;width:4px;height:4px;border-radius:50%;background:#c7c729;box-shadow:0 0 0 0.7px #111"></div>
<div style="position:absolute;left:433px;top:631.5px;width:18px;height:11px;background:#2b2b2b;border-radius:2px 0 0 2px;"></div>
<svg style="left:434px;top:632px" width="14" height="10"><circle cx="4.5" cy="5" r="3.8" fill="#c8c8c8"/><path d="M4.5 5V1.2A3.8 3.8 0 0 1 8.3 5Z" fill="#333"/><path d="M4.5 5H0.7A3.8 3.8 0 0 0 4.5 8.8Z" fill="#333"/><path d="M10 4L11.5 5.5L13 4" fill="none" stroke="#aaa" stroke-width="0.8"/></svg>
<div style="position:absolute;left:451px;top:631.5px;width:25px;height:11px;background:#252525;"></div>
<div class="t" style="left:453px;top:631px;font-size:7.0px;line-height:12px;height:12px;color:#d8d8d8">Occlus</div>
<div style="position:absolute;left:476px;top:631.5px;width:14px;height:11px;background:#4a4a4a;"></div>
<div class="t" style="left:481px;top:631px;font-size:7.0px;line-height:12px;height:12px;color:#d8d8d8">2</div>
<div style="position:absolute;left:490px;top:631.5px;width:11px;height:11px;background:#3f3f3f;border-radius:0 2px 2px 0;"></div>
<svg style="left:491px;top:632px" width="9" height="10"><path d="M4.5 1L8 2.5V5C8 7 6.5 8.5 4.5 9C2.5 8.5 1 7 1 5V2.5Z" fill="none" stroke="#c8c8c8" stroke-width="0.9"/></svg>
<div class="t" style="left:436px;top:645.5px;font-size:7.0px;line-height:12px;height:12px;color:#d8d8d8">Input</div>
<div style="position:absolute;left:425px;top:649.5px;width:4px;height:4px;border-radius:50%;background:#c7c729;box-shadow:0 0 0 0.7px #111"></div>
<div style="position:absolute;left:433px;top:658.8px;width:68px;height:10px;background:#545454;border-radius:2px;"></div>
<div class="t" style="left:439px;top:657.8px;font-size:7.0px;line-height:12px;height:12px;color:#d8d8d8">Distance:</div>
<div class="t" style="left:375px;width:120px;text-align:right;top:657.8px;font-size:7.0px;line-height:12px;height:12px;color:#d8d8d8">0.020</div>
<div style="position:absolute;left:425px;top:661.6px;width:4px;height:4px;border-radius:50%;background:#a1a1a1;box-shadow:0 0 0 0.7px #111"></div>
<div style="position:absolute;left:433px;top:671.5px;width:68px;height:10px;background:#545454;border-radius:2px;"></div>
<div class="t" style="left:439px;top:670.5px;font-size:7.0px;line-height:12px;height:12px;color:#d8d8d8">Power:</div>
<div class="t" style="left:375px;width:120px;text-align:right;top:670.5px;font-size:7.0px;line-height:12px;height:12px;color:#d8d8d8">1.000</div>
<div style="position:absolute;left:425px;top:674.6px;width:4px;height:4px;border-radius:50%;background:#a1a1a1;box-shadow:0 0 0 0.7px #111"></div>
<div style="position:absolute;left:433px;top:684.7px;width:68px;height:10px;background:#4772b3;border-radius:2px;"></div>
<div class="t" style="left:439px;top:683.7px;font-size:7.0px;line-height:12px;height:12px;color:#f0f0f0">Factor:</div>
<div class="t" style="left:375px;width:120px;text-align:right;top:683.7px;font-size:7.0px;line-height:12px;height:12px;color:#f0f0f0">1.000</div>
<div style="position:absolute;left:425px;top:687.6px;width:4px;height:4px;border-radius:50%;background:#a1a1a1;box-shadow:0 0 0 0.7px #111"></div>
<div class="t" style="left:436px;top:696.6px;font-size:7.0px;line-height:12px;height:12px;color:#d8d8d8">Normal</div>
<div style="position:absolute;left:425px;top:700.6px;width:4px;height:4px;border-radius:50%;background:#6363c7;box-shadow:0 0 0 0.7px #111"></div>
<div style="position:absolute;left:252px;top:631px;width:82px;height:253px;background:rgba(64,64,64,0.93);border-radius:3px;box-shadow:0 1px 3px rgba(0,0,0,0.5);"></div>
<div style="position:absolute;left:252px;top:631px;width:82px;height:11px;background:#3b5b2b;border-radius:3px 3px 0 0;"></div>
<svg style="left:256px;top:634px" width="6" height="5"><path d="M0.5 0.5H5L2.75 4Z" fill="#e0e0e0"/></svg>
<div class="t" style="left:263px;top:630.5px;font-size:7.0px;line-height:12px;height:12px;color:#e0e0e0">Jigsaw</div>
<svg style="left:320px;top:632px" width="10" height="9"><rect x="1" y="1" width="7" height="3" fill="#e0e0e0"/><rect x="0" y="5" width="7" height="3" fill="#e0e0e0"/><path d="M8 2.5H9V6.5H7.5" fill="none" stroke="#e0e0e0" stroke-width="0.8"/></svg>
<div class="t" style="left:203px;width:120px;text-align:right;top:645.5px;font-size:7.0px;line-height:12px;height:12px;color:#d8d8d8">Image</div>
<div style="position:absolute;left:332px;top:649.5px;width:4px;height:4px;border-radius:50%;background:#c7c729;box-shadow:0 0 0 0.7px #111"></div>
<div class="t" style="left:203px;width:120px;text-align:right;top:657.6px;font-size:7.0px;line-height:12px;height:12px;color:#d8d8d8">Specular</div>
<div style="position:absolute;left:332px;top:661.6px;width:4px;height:4px;border-radius:50%;background:#a1a1a1;box-shadow:0 0 0 0.7px #111"></div>
<div class="t" style="left:203px;width:120px;text-align:right;top:670.6px;font-size:7.0px;line-height:12px;height:12px;color:#d8d8d8">Roughness</div>
<div style="position:absolute;left:332px;top:674.6px;width:4px;height:4px;border-radius:50%;background:#a1a1a1;box-shadow:0 0 0 0.7px #111"></div>
<div class="t" style="left:203px;width:120px;text-align:right;top:683.6px;font-size:7.0px;line-height:12px;height:12px;color:#d8d8d8">Clearcoat</div>
<div style="position:absolute;left:332px;top:687.6px;width:4px;height:4px;border-radius:50%;background:#a1a1a1;box-shadow:0 0 0 0.7px #111"></div>
<div class="t" style="left:203px;width:120px;text-align:right;top:696.6px;font-size:7.0px;line-height:12px;height:12px;color:#d8d8d8">Normal</div>
<div style="position:absolute;left:332px;top:700.6px;width:4px;height:4px;border-radius:50%;background:#6363c7;box-shadow:0 0 0 0.7px #111"></div>
<div style="position:absolute;left:259px;top:715.5px;width:18px;height:11px;background:#2b2b2b;border-radius:2px 0 0 2px;"></div>
<svg style="left:260px;top:716px" width="14" height="10"><circle cx="4.5" cy="5" r="3.8" fill="#c8c8c8"/><path d="M4.5 5V1.2A3.8 3.8 0 0 1 8.3 5Z" fill="#333"/><path d="M4.5 5H0.7A3.8 3.8 0 0 0 4.5 8.8Z" fill="#333"/><path d="M10 4L11.5 5.5L13 4" fill="none" stroke="#aaa" stroke-width="0.8"/></svg>
<div style="position:absolute;left:277px;top:715.5px;width:38px;height:11px;background:#252525;"></div>
<div class="t" style="left:280px;top:715px;font-size:7.0px;line-height:12px;height:12px;color:#d8d8d8">Jigsaw</div>
<div style="position:absolute;left:315px;top:715.5px;width:12px;height:11px;background:#4772b3;border-radius:0 2px 2px 0;"></div>
<svg style="left:316px;top:716px" width="10" height="10"><path d="M5 1L8.5 2.5V5C8.5 7 7 8.5 5 9C3 8.5 1.5 7 1.5 5V2.5Z" fill="#e8e8e8"/></svg>
<div class="t" style="left:262px;top:728.5px;font-size:7.0px;line-height:12px;height:12px;color:#d8d8d8">Image</div>
<div style="position:absolute;left:250.3px;top:732.5px;width:4px;height:4px;border-radius:50%;background:#c7c729;box-shadow:0 0 0 0.7px #111"></div>
<div style="position:absolute;left:259px;top:742.5px;width:68px;height:10px;background:#545454;border-radius:2px;"></div>
<div class="t" style="left:266px;top:741.5px;font-size:7.0px;line-height:12px;height:12px;color:#d8d8d8">Scale:</div>
<div class="t" style="left:199px;width:120px;text-align:right;top:741.5px;font-size:7.0px;line-height:12px;height:12px;color:#d8d8d8">1.000</div>
<div style="position:absolute;left:250.3px;top:745.5px;width:4px;height:4px;border-radius:50%;background:#a1a1a1;box-shadow:0 0 0 0.7px #111"></div>
<div style="position:absolute;left:259px;top:755.5px;width:68px;height:10px;background:#545454;border-radius:2px;"></div>
<div class="t" style="left:266px;top:754.5px;font-size:7.0px;line-height:12px;height:12px;color:#d8d8d8">R Factor:</div>
<div class="t" style="left:199px;width:120px;text-align:right;top:754.5px;font-size:7.0px;line-height:12px;height:12px;color:#d8d8d8">1.000</div>
<div style="position:absolute;left:250.3px;top:758.5px;width:4px;height:4px;border-radius:50%;background:#a1a1a1;box-shadow:0 0 0 0.7px #111"></div>
<div style="position:absolute;left:259px;top:768.5px;width:68px;height:10px;background:#545454;border-radius:2px;"></div>
<div class="t" style="left:266px;top:767.5px;font-size:7.0px;line-height:12px;height:12px;color:#d8d8d8">R Mappin:</div>
<div class="t" style="left:199px;width:120px;text-align:right;top:767.5px;font-size:7.0px;line-height:12px;height:12px;color:#d8d8d8">0.600</div>
<div style="position:absolute;left:250.3px;top:771.5px;width:4px;height:4px;border-radius:50%;background:#a1a1a1;box-shadow:0 0 0 0.7px #111"></div>
<div style="position:absolute;left:259px;top:781.5px;width:68px;height:10px;background:#545454;border-radius:2px;"></div>
<div class="t" style="left:266px;top:780.5px;font-size:7.0px;line-height:12px;height:12px;color:#d8d8d8">R Facing:</div>
<div class="t" style="left:199px;width:120px;text-align:right;top:780.5px;font-size:7.0px;line-height:12px;height:12px;color:#d8d8d8">0.500</div>
<div style="position:absolute;left:250.3px;top:784.5px;width:4px;height:4px;border-radius:50%;background:#a1a1a1;box-shadow:0 0 0 0.7px #111"></div>
<div style="position:absolute;left:259px;top:793.6px;width:68px;height:10px;background:#545454;border-radius:2px;"></div>
<div class="t" style="left:266px;top:792.6px;font-size:7.0px;line-height:12px;height:12px;color:#d8d8d8">S Factor:</div>
<div class="t" style="left:199px;width:120px;text-align:right;top:792.6px;font-size:7.0px;line-height:12px;height:12px;color:#d8d8d8">1.000</div>
<div style="position:absolute;left:250.3px;top:796.6px;width:4px;height:4px;border-radius:50%;background:#a1a1a1;box-shadow:0 0 0 0.7px #111"></div>
<div style="position:absolute;left:259px;top:806.5px;width:68px;height:10px;background:#545454;border-radius:2px;"></div>
<div class="t" style="left:266px;top:805.5px;font-size:7.0px;line-height:12px;height:12px;color:#d8d8d8">Max Print:</div>
<div class="t" style="left:199px;width:120px;text-align:right;top:805.5px;font-size:7.0px;line-height:12px;height:12px;color:#d8d8d8">1.000</div>
<div style="position:absolute;left:250.3px;top:809.5px;width:4px;height:4px;border-radius:50%;background:#a1a1a1;box-shadow:0 0 0 0.7px #111"></div>
<div style="position:absolute;left:259px;top:819.4px;width:68px;height:10px;background:#545454;border-radius:2px;"></div>
<div class="t" style="left:266px;top:818.4px;font-size:7.0px;line-height:12px;height:12px;color:#d8d8d8">Min Resid:</div>
<div class="t" style="left:199px;width:120px;text-align:right;top:818.4px;font-size:7.0px;line-height:12px;height:12px;color:#d8d8d8">0.000</div>
<div style="position:absolute;left:250.3px;top:822.4px;width:4px;height:4px;border-radius:50%;background:#a1a1a1;box-shadow:0 0 0 0.7px #111"></div>
<div style="position:absolute;left:259px;top:832.4px;width:68px;height:10px;background:#545454;border-radius:2px;"></div>
<div class="t" style="left:266px;top:831.4px;font-size:7.0px;line-height:12px;height:12px;color:#d8d8d8">Max Resi:</div>
<div class="t" style="left:199px;width:120px;text-align:right;top:831.4px;font-size:7.0px;line-height:12px;height:12px;color:#d8d8d8">0.400</div>
<div style="position:absolute;left:250.3px;top:835.4px;width:4px;height:4px;border-radius:50%;background:#a1a1a1;box-shadow:0 0 0 0.7px #111"></div>
<div style="position:absolute;left:259px;top:845.3px;width:68px;height:10px;background:#545454;border-radius:2px;"></div>
<div class="t" style="left:266px;top:844.3px;font-size:7.0px;line-height:12px;height:12px;color:#d8d8d8">C Factor:</div>
<div class="t" style="left:199px;width:120px;text-align:right;top:844.3px;font-size:7.0px;line-height:12px;height:12px;color:#d8d8d8">0.400</div>
<div style="position:absolute;left:250.3px;top:848.3px;width:4px;height:4px;border-radius:50%;background:#a1a1a1;box-shadow:0 0 0 0.7px #111"></div>
<div style="position:absolute;left:259px;top:858.6px;width:68px;height:10px;background:#545454;border-radius:2px;"></div>
<div class="t" style="left:263px;top:857.6px;font-size:7.0px;line-height:12px;height:12px;color:#d8d8d8">B Strength:</div>
<div class="t" style="left:202px;width:120px;text-align:right;top:857.6px;font-size:7.0px;line-height:12px;height:12px;color:#d8d8d8">0.010</div>
<div style="position:absolute;left:250.3px;top:861.6px;width:4px;height:4px;border-radius:50%;background:#a1a1a1;box-shadow:0 0 0 0.7px #111"></div>
<div style="position:absolute;left:259px;top:870.7px;width:68px;height:10px;background:#545454;border-radius:2px;"></div>
<div class="t" style="left:266px;top:869.7px;font-size:7.0px;line-height:12px;height:12px;color:#d8d8d8">N Strengt:</div>
<div class="t" style="left:199px;width:120px;text-align:right;top:869.7px;font-size:7.0px;line-height:12px;height:12px;color:#d8d8d8">0.020</div>
<div style="position:absolute;left:250.3px;top:873.7px;width:4px;height:4px;border-radius:50%;background:#a1a1a1;box-shadow:0 0 0 0.7px #111"></div>
<div style="position:absolute;left:34.5px;top:714px;width:140.5px;height:147px;background:rgba(64,64,64,0.93);border-radius:3px;box-shadow:0 1px 3px rgba(0,0,0,0.5);"></div>
<div style="position:absolute;left:34.5px;top:714px;width:140.5px;height:12px;background:#c27536;border-radius:3px 3px 0 0;"></div>
<svg style="left:40px;top:718px" width="6" height="5"><path d="M0.5 0.5H5L2.75 4Z" fill="#f0f0f0"/></svg>
<div class="t" style="left:47px;top:713.5px;font-size:7.0px;line-height:12px;height:12px;color:#f0f0f0">Spring.jpg</div>
<div class="t" style="left:45px;width:120px;text-align:right;top:728.5px;font-size:7.0px;line-height:12px;height:12px;color:#d8d8d8">Color</div>
<div style="position:absolute;left:173px;top:732.5px;width:4px;height:4px;border-radius:50%;background:#c7c729;box-shadow:0 0 0 0.7px #111"></div>
<div class="t" style="left:45px;width:120px;text-align:right;top:741px;font-size:7.0px;line-height:12px;height:12px;color:#d8d8d8">Alpha</div>
<div style="position:absolute;left:173px;top:745px;width:4px;height:4px;border-radius:50%;background:#a1a1a1;box-shadow:0 0 0 0.7px #111"></div>
<div style="position:absolute;left:41px;top:759.5px;width:18px;height:11px;background:#2b2b2b;border-radius:2px 0 0 2px;"></div>
<svg style="left:42px;top:760px" width="15" height="10"><rect x="0.5" y="0.5" width="8" height="8" fill="#c8c8c8"/><path d="M1.5 7.5L4 4L5.5 6L7.5 3V7.5Z" fill="#333"/><path d="M10.5 4L12 5.5L13.5 4" fill="none" stroke="#aaa" stroke-width="0.8"/></svg>
<div style="position:absolute;left:59px;top:759.5px;width:48px;height:11px;background:#252525;"></div>
<div class="t" style="left:62px;top:759px;font-size:7.0px;line-height:12px;height:12px;color:#d8d8d8">Spring.jpg</div>
<div style="position:absolute;left:108px;top:759.5px;width:13px;height:11px;background:#4a4a4a;"></div>
<div class="t" style="left:112px;top:759px;font-size:7.0px;line-height:12px;height:12px;color:#d8d8d8">2</div>
<div style="position:absolute;left:122px;top:759.5px;width:11px;height:11px;background:#4a4a4a;"></div>
<div style="position:absolute;left:134px;top:759.5px;width:11px;height:11px;background:#4a4a4a;"></div>
<div style="position:absolute;left:145px;top:759.5px;width:11px;height:11px;background:#4a4a4a;"></div>
<div style="position:absolute;left:157px;top:759.5px;width:11px;height:11px;background:#4a4a4a;"></div>
<svg style="left:123px;top:760px" width="45" height="10"><path d="M4.5 1L8 2.5V5C8 7 6.5 8.5 4.5 9C2.5 8.5 1 7 1 5V2.5Z" fill="none" stroke="#c8c8c8" stroke-width="0.9"/><rect x="14" y="2" width="6" height="6" fill="#c8c8c8"/><path d="M24 3H31V8H24Z" fill="#d0d0d0"/><path d="M36 2L41 7M41 2L36 7" stroke="#e0e0e0" stroke-width="1.1"/></svg>
<div style="position:absolute;left:41px;top:774.7px;width:127px;height:10px;background:#282828;border-radius:2px;"></div>
<div class="t" style="left:44px;top:773.7px;font-size:7.0px;line-height:12px;height:12px;color:#d8d8d8">Linear</div>
<svg style="left:161px;top:778.2px" width="5" height="4"><path d="M0.5 0.5L2.5 2.5L4.5 0.5" fill="none" stroke="#c8c8c8" stroke-width="0.9"/></svg>
<div style="position:absolute;left:41px;top:788.8px;width:127px;height:10px;background:#282828;border-radius:2px;"></div>
<div class="t" style="left:44px;top:787.8px;font-size:7.0px;line-height:12px;height:12px;color:#d8d8d8">Flat</div>
<svg style="left:161px;top:792.3px" width="5" height="4"><path d="M0.5 0.5L2.5 2.5L4.5 0.5" fill="none" stroke="#c8c8c8" stroke-width="0.9"/></svg>
<div style="position:absolute;left:41px;top:803.6px;width:127px;height:10px;background:#282828;border-radius:2px;"></div>
<div class="t" style="left:44px;top:802.6px;font-size:7.0px;line-height:12px;height:12px;color:#d8d8d8">Clip</div>
<svg style="left:161px;top:807.1px" width="5" height="4"><path d="M0.5 0.5L2.5 2.5L4.5 0.5" fill="none" stroke="#c8c8c8" stroke-width="0.9"/></svg>
<div style="position:absolute;left:41px;top:817.9px;width:127px;height:10px;background:#282828;border-radius:2px;"></div>
<div class="t" style="left:44px;top:816.9px;font-size:7.0px;line-height:12px;height:12px;color:#d8d8d8">Single Image</div>
<svg style="left:161px;top:821.4px" width="5" height="4"><path d="M0.5 0.5L2.5 2.5L4.5 0.5" fill="none" stroke="#c8c8c8" stroke-width="0.9"/></svg>
<div class="t" style="left:44px;top:831.6px;font-size:7.0px;line-height:12px;height:12px;color:#d8d8d8">Color Space</div>
<div style="position:absolute;left:108px;top:832.6px;width:60px;height:10px;background:#282828;border-radius:2px;"></div>
<div class="t" style="left:111px;top:831.6px;font-size:7.0px;line-height:12px;height:12px;color:#d8d8d8">sRGB</div>
<svg style="left:161px;top:836.1px" width="5" height="4"><path d="M0.5 0.5L2.5 2.5L4.5 0.5" fill="none" stroke="#c8c8c8" stroke-width="0.9"/></svg>
<div class="t" style="left:44px;top:846.5px;font-size:7.0px;line-height:12px;height:12px;color:#d8d8d8">Vector</div>
<div style="position:absolute;left:32.5px;top:850.5px;width:4px;height:4px;border-radius:50%;background:#6363c7;box-shadow:0 0 0 0.7px #111"></div>
<svg style="left:1527px;top:4px" width="26" height="17"><path d="M5 2L1.5 10A3.2 3.2 0 0 0 8.5 10Z" fill="#d8d8d8"/><circle cx="12" cy="4" r="2" fill="#d8d8d8"/><circle cx="10" cy="12" r="3.6" fill="#2c2c2c" stroke="#d8d8d8" stroke-width="1.1"/><path d="M17 7L19.5 9.5L22 7" fill="none" stroke="#aaa" stroke-width="1.1"/></svg>
<svg style="left:1677px;top:5px" width="36" height="15"><path d="M3 5V13H9M6 2H11L13 4V11H6Z" fill="none" stroke="#d8d8d8" stroke-width="1.1"/><path d="M23 3L31 11M31 3L23 11" stroke="#8a8a8a" stroke-width="1.1"/></svg>
<svg style="left:1723px;top:4px" width="26" height="17"><rect x="5.5" y="1.5" width="9" height="9" fill="none" stroke="#d8d8d8" stroke-width="1.1"/><path d="M3.5 3.5V12.5H12.5M1.5 5.5V14.5H10.5" fill="none" stroke="#d8d8d8" stroke-width="1"/><path d="M6.5 9.5L9.5 5L11 8L13.5 3V9.5Z" fill="#d8d8d8"/><path d="M17 7L19.5 9.5L22 7" fill="none" stroke="#aaa" stroke-width="1.1"/></svg>
<svg style="left:1874px;top:5px" width="36" height="15"><path d="M3 5V13H9M6 2H11L13 4V11H6Z" fill="none" stroke="#d8d8d8" stroke-width="1.1"/><path d="M23 3L31 11M31 3L23 11" stroke="#8a8a8a" stroke-width="1.1"/></svg>
</body></html>
